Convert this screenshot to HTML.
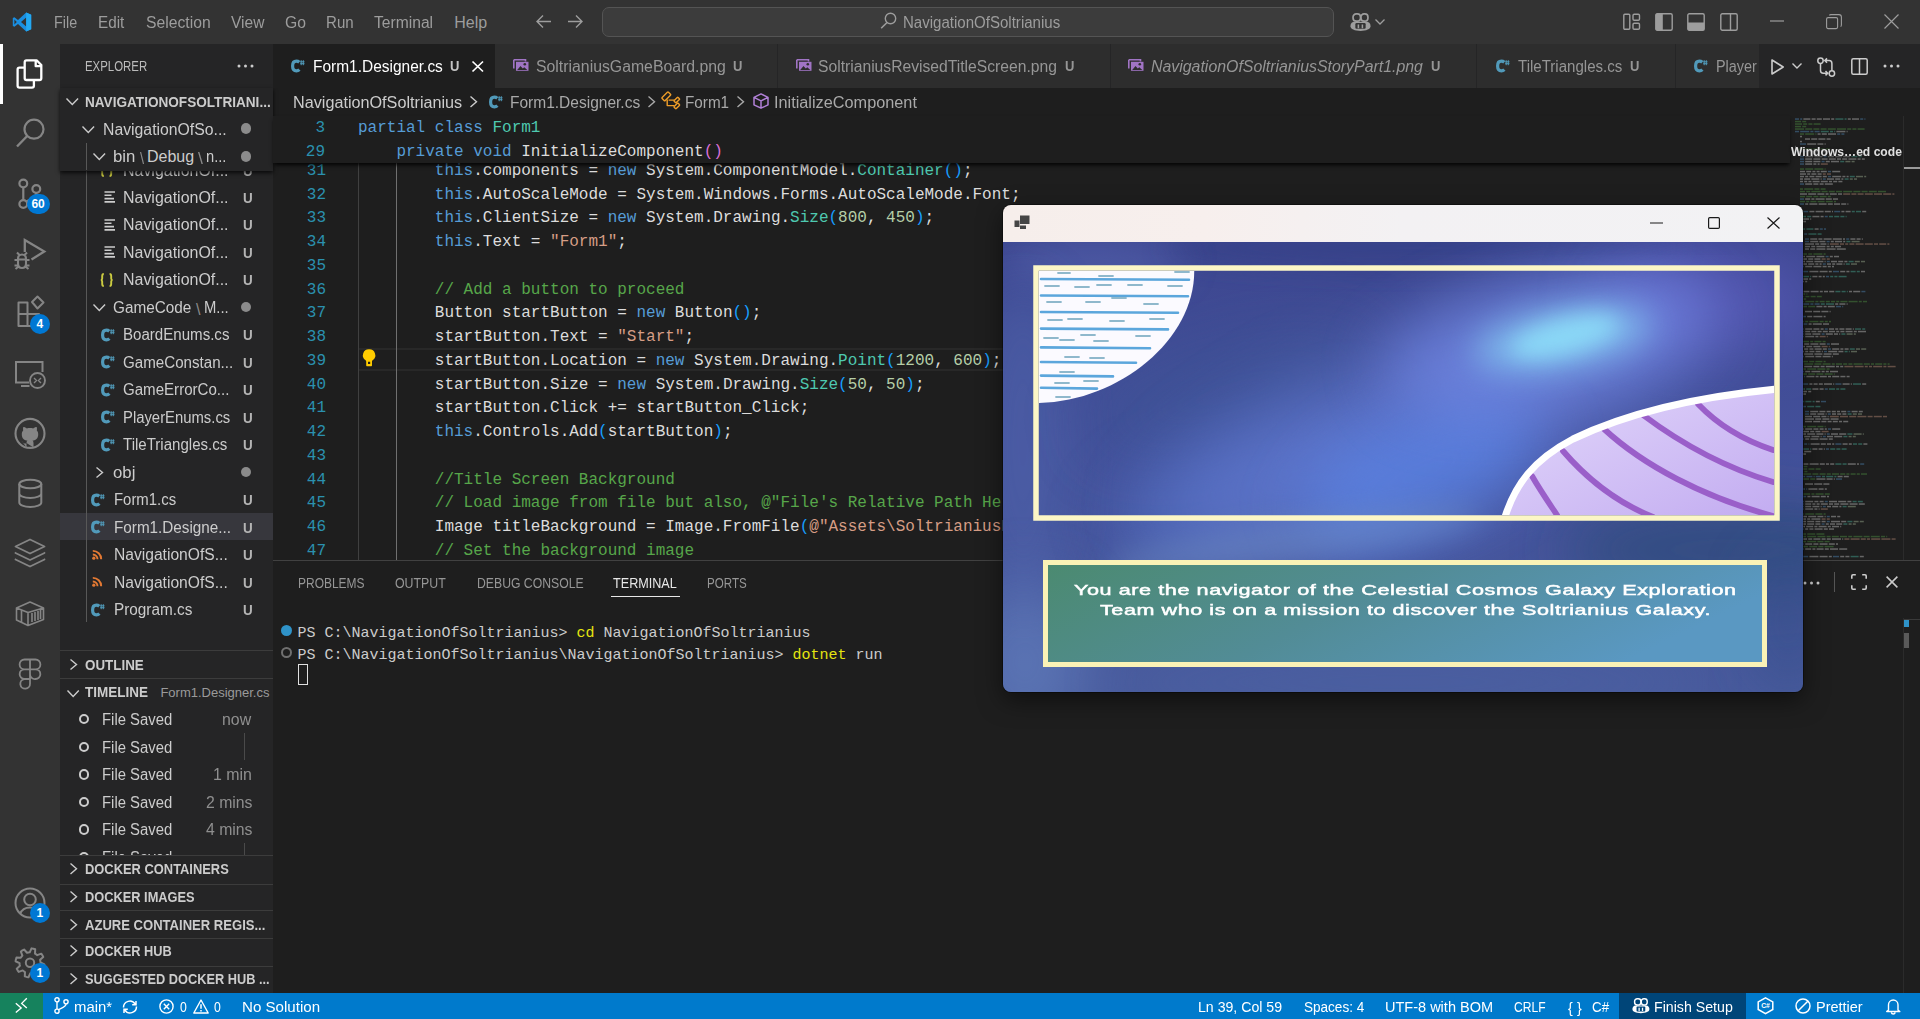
<!DOCTYPE html><html><head><meta charset="utf-8"><style>
html,body{margin:0;padding:0;width:1920px;height:1019px;overflow:hidden;background:#1e1e1e;}
body{position:relative;font-family:'Liberation Sans',sans-serif;}
.t{position:absolute;white-space:pre;line-height:1;}
.a{position:absolute;}
svg{position:absolute;overflow:visible;}
</style></head><body>
<div style="position:absolute;left:0px;top:0px;width:1920px;height:44px;background:#333333;"></div>
<svg style="left:12px;top:12px" width="20" height="20" viewBox="0 0 100 100">
<path d="M71 2 L96 14 V86 L71 98 L30 60 L12 74 L4 70 V30 L12 26 L30 40 Z M71 27 L45 50 L71 73 Z M12 38 V62 L24 50 Z" fill="#1a8ee0" fill-rule="evenodd"/>
<path d="M71 2 L96 14 V86 L71 98 Z" fill="#23a9f2"/>
</svg>
<div class="t" style="left:54.20px;top:15.00px;font-size:16px;color:#9d9d9d;font-family:'Liberation Sans', sans-serif;transform:scaleX(0.8962);transform-origin:0px 0;">File</div>
<div class="t" style="left:98.30px;top:15.00px;font-size:16px;color:#9d9d9d;font-family:'Liberation Sans', sans-serif;transform:scaleX(0.9536);transform-origin:0px 0;">Edit</div>
<div class="t" style="left:145.50px;top:15.00px;font-size:16px;color:#9d9d9d;font-family:'Liberation Sans', sans-serif;transform:scaleX(0.9818);transform-origin:0px 0;">Selection</div>
<div class="t" style="left:230.50px;top:15.00px;font-size:16px;color:#9d9d9d;font-family:'Liberation Sans', sans-serif;transform:scaleX(0.9714);transform-origin:0px 0;">View</div>
<div class="t" style="left:284.70px;top:15.00px;font-size:16px;color:#9d9d9d;font-family:'Liberation Sans', sans-serif;transform:scaleX(0.9810);transform-origin:0px 0;">Go</div>
<div class="t" style="left:326.00px;top:15.00px;font-size:16px;color:#9d9d9d;font-family:'Liberation Sans', sans-serif;transform:scaleX(0.9414);transform-origin:0px 0;">Run</div>
<div class="t" style="left:374.20px;top:15.00px;font-size:16px;color:#9d9d9d;font-family:'Liberation Sans', sans-serif;transform:scaleX(0.9770);transform-origin:0px 0;">Terminal</div>
<div class="t" style="left:454.20px;top:15.00px;font-size:16px;color:#9d9d9d;font-family:'Liberation Sans', sans-serif;transform:scaleX(1.0000);transform-origin:0px 0;">Help</div>
<svg style="left:535px;top:14px" width="17" height="15" viewBox="0 0 17 15"><path d="M16 7.5H2 M8 1.5L2 7.5L8 13.5" stroke="#9d9d9d" stroke-width="1.4" fill="none"/></svg>
<svg style="left:567px;top:14px" width="17" height="15" viewBox="0 0 17 15"><path d="M1 7.5H15 M9 1.5L15 7.5L9 13.5" stroke="#9d9d9d" stroke-width="1.4" fill="none"/></svg>
<div style="position:absolute;left:602px;top:7px;width:732px;height:30px;background:#3c3c3c;border:1px solid #545454;border-radius:7px;box-sizing:border-box;"></div>
<svg style="left:880px;top:12px" width="17" height="18" viewBox="0 0 17 18"><circle cx="10.5" cy="6.5" r="5.2" stroke="#9d9d9d" stroke-width="1.4" fill="none"/><path d="M7 10.5L1.2 16.3" stroke="#9d9d9d" stroke-width="1.6"/></svg>
<div class="t" style="left:903.30px;top:15.00px;font-size:16px;color:#9d9d9d;font-family:'Liberation Sans', sans-serif;transform:scaleX(0.9401);transform-origin:0px 0;">NavigationOfSoltrianius</div>
<svg style="left:1350px;top:12.5px" width="21.009999999999998" height="18.145" viewBox="0 0 22 19">
<rect x="3.2" y="1" width="7.8" height="7.6" rx="3.3" fill="none" stroke="#9d9d9d" stroke-width="1.8"/>
<rect x="11.4" y="1" width="7.4" height="7.6" rx="3.3" fill="none" stroke="#9d9d9d" stroke-width="1.8"/>
<path d="M5 9.2 H17 C20.5 9.2 21.5 11.5 21.5 14 C21.5 17 17 18.8 11 18.8 C5 18.8 0.5 17 0.5 14 C0.5 11.5 1.5 9.2 5 9.2 Z" fill="#9d9d9d"/>
<rect x="5.6" y="10.6" width="10.8" height="6" rx="1.2" fill="#333333"/>
<rect x="8" y="12" width="1.6" height="4" fill="#9d9d9d"/><rect x="12.2" y="12" width="1.6" height="4" fill="#9d9d9d"/>
</svg>
<svg style="left:1375.2px;top:19px" width="10" height="5.5" viewBox="0 0 10 5.5"><path d="M0.5 0.5L5 5L9.5 0.5" stroke="#9d9d9d" stroke-width="1.3" fill="none"/></svg>
<svg style="left:1623px;top:13px" width="18" height="18" viewBox="0 0 18 18">
<rect x="0.8" y="1.3" width="6" height="15" rx="1" fill="none" stroke="#9d9d9d" stroke-width="1.4"/>
<rect x="10" y="1.3" width="6.5" height="6" rx="1.2" fill="none" stroke="#9d9d9d" stroke-width="1.4"/>
<rect x="10" y="10.3" width="6.5" height="6" rx="1.2" fill="none" stroke="#9d9d9d" stroke-width="1.4"/></svg>
<svg style="left:1655px;top:13px" width="18" height="18" viewBox="0 0 18 18">
<rect x="0.8" y="0.8" width="16.4" height="16.4" rx="1.5" fill="none" stroke="#9d9d9d" stroke-width="1.4"/>
<rect x="0.8" y="0.8" width="7" height="16.4" fill="#9d9d9d"/></svg>
<svg style="left:1687px;top:13px" width="18" height="18" viewBox="0 0 18 18">
<rect x="0.8" y="0.8" width="16.4" height="16.4" rx="1.5" fill="none" stroke="#9d9d9d" stroke-width="1.4"/>
<rect x="0.8" y="9.5" width="16.4" height="7.7" fill="#9d9d9d"/></svg>
<svg style="left:1720px;top:13px" width="18" height="18" viewBox="0 0 18 18">
<rect x="0.8" y="0.8" width="16.4" height="16.4" rx="1.5" fill="none" stroke="#9d9d9d" stroke-width="1.4"/>
<path d="M10.5 1V17" stroke="#9d9d9d" stroke-width="1.4"/></svg>
<svg style="left:1770px;top:20px" width="15" height="2" viewBox="0 0 15 2"><path d="M0 1H14" stroke="#9d9d9d" stroke-width="1.2"/></svg>
<svg style="left:1826px;top:14px" width="16" height="16" viewBox="0 0 16 16"><rect x="0.6" y="3.6" width="11" height="11" rx="1.5" fill="none" stroke="#9d9d9d" stroke-width="1.1"/><path d="M3.5 1.5 C3.5 1 4 0.6 5 0.6 H13 C14.5 0.6 15.4 1.5 15.4 3 V11 C15.4 12 15 12.4 14.5 12.4" fill="none" stroke="#9d9d9d" stroke-width="1.1"/></svg>
<svg style="left:1884px;top:14px" width="15" height="15" viewBox="0 0 15 15"><path d="M0.5 0.5L14.5 14.5M14.5 0.5L0.5 14.5" stroke="#9d9d9d" stroke-width="1.2"/></svg>
<div style="position:absolute;left:0px;top:44px;width:60px;height:949px;background:#333333;"></div>
<div style="position:absolute;left:0px;top:44px;width:2.5px;height:60px;background:#ffffff;"></div>
<svg style="left:0;top:0" width="60" height="1019" viewBox="0 0 60 1019" fill="none" stroke="#858585" stroke-width="2"><path d="M26.5 60.3 H36.6 L41.3 65 V78.2 C41.3 79.3 40.5 80 39.4 80 H26.6 C25.5 80 24.7 79.3 24.7 78.2 V62.2 C24.7 61.1 25.4 60.3 26.5 60.3 Z M35.7 60.5 V66.2 H41" stroke="#ffffff" stroke-width="2.3" stroke-linejoin="round"/><path d="M24.7 67.6 H19.5 C18.4 67.6 17.6 68.4 17.6 69.5 V85.8 C17.6 86.9 18.4 87.7 19.5 87.7 H32 C33.1 87.7 33.9 86.9 33.9 85.8 V80" stroke="#ffffff" stroke-width="2.3" stroke-linejoin="round"/><circle cx="34" cy="129.2" r="9.5" stroke-width="2.2"/><path d="M27.2 136 L17 146.5" stroke-width="2.4"/><circle cx="23.3" cy="183.5" r="3.9" stroke-width="2.2"/><circle cx="23.3" cy="204" r="3.9" stroke-width="2.2"/><circle cx="36.3" cy="189" r="3.9" stroke-width="2.2"/><path d="M23.3 187.4 V200.1 M36.3 192.9 C36.3 197 31 198.5 26.5 201.5" stroke-width="2.2"/><path d="M24.8 252 V240 L44.3 251.5 L31.5 259.5" stroke-width="2.3" stroke-linejoin="miter"/><path d="M18 259 C18 256 19.8 254.5 22 254.5 C24.2 254.5 26 256 26 259 V263.5 C26 266.5 24.2 268 22 268 C19.8 268 18 266.5 18 263.5 Z M14.5 260 H18 M26 260 H29.5 M14.5 265.5 H18 M26 265.5 H29.5 M18 259.5 H26 M19.5 255 L17 252.5 M24.5 255 L27 252.5 M18 267 L15.5 269 M26 267 L28.5 269" stroke-width="2.1"/><path d="M18.5 302.5 H27.5 V326 H18.5 Z M18.5 314 H39 V326 H27.5" stroke-width="2" stroke-linejoin="round"/><path d="M32 302 L37.5 296.5 L43.5 302.5 L37.5 308.5 Z" stroke-width="2" stroke-linejoin="round"/><path d="M29 382.5 H16 V362 H42.5 V372" stroke-width="2"/><path d="M21 386 H29.5" stroke-width="2"/><circle cx="37.5" cy="380.5" r="7.5" stroke-width="1.9"/><path d="M34 378 L36.5 380.5 L34 383 M41 378 L38.5 380.5 L41 383" stroke-width="1.4"/><circle cx="30" cy="433.4" r="14.5" stroke-width="2.1"/><path d="M26.5 447.5 V443.5 C24.5 443.8 22.5 443 21.5 440.5 M33.5 447.5 V443 C33.5 442 33.2 441.2 32.6 440.6 C36.2 440.1 38.2 438.2 38.2 434.2 C38.2 432.6 37.7 431.4 36.8 430.5 C37.1 429.5 37.1 428.2 36.7 427 C35.5 427 34.3 427.6 33.2 428.4 C31.2 427.8 28.8 427.8 26.8 428.4 C25.7 427.6 24.5 427 23.3 427 C22.9 428.2 22.9 429.5 23.2 430.5 C22.3 431.4 21.8 432.6 21.8 434.2 C21.8 438.2 23.8 440.1 27.4 440.6 C26.8 441.2 26.5 442 26.5 443 Z" fill="#858585" stroke="none"/><ellipse cx="30.3" cy="484" rx="11" ry="4.3" stroke-width="2"/><path d="M19.3 484 V502.5 C19.3 505 24 507 30.3 507 C36.6 507 41.3 505 41.3 502.5 V484 M19.3 493.5 C19.3 496 24 498 30.3 498 C36.6 498 41.3 496 41.3 493.5" stroke-width="2"/><path d="M30 539.5 L44.5 546.5 L30 553.5 L15.5 546.5 Z M16 552.5 L15.5 553 L30 560 L44.5 553 L44 552.5 M16 559 L15.5 559.5 L30 566.5 L44.5 559.5 L44 559" stroke-width="1.8" stroke-linejoin="round"/><path d="M16.5 608 L30 602 L43.5 608 V619.5 L28 625.5 L16.5 620 Z M16.5 608 L28 612.5 L43.5 608 M28 612.5 V625.5 M21.5 610.5 V622.5 M32 613 V622 M35 612 V621 M38 611 V620 M40.5 610 V619" stroke-width="1.6" stroke-linejoin="round"/><path d="M24.5 659.5 H35.5 A4.9 4.9 0 0 1 35.5 669.3 H24.5 A4.9 4.9 0 0 1 24.5 659.5 Z M24.5 669.3 H30 V679 H24.5 A4.85 4.85 0 0 1 24.5 669.3 Z M30 669.3 H35.5 A4.85 4.85 0 0 1 35.5 679 A4.85 4.85 0 0 1 30 674.2 M24.5 679 H30 V683.5 A4.85 4.85 0 1 1 24.5 679 Z M30 659.5 V669.3" stroke-width="1.8"/><circle cx="30" cy="903" r="14.5" stroke-width="2"/><circle cx="30" cy="899.5" r="5.8" stroke-width="2"/><path d="M20 914 C22 909 25.5 907.5 30 907.5 C34.5 907.5 38 909 40 914" stroke-width="2"/><path d="M44.10 966.18 L43.54 968.00 L39.23 967.81 L38.49 968.97 L37.62 970.03 L39.13 974.07 L37.58 975.16 L35.90 976.05 L32.98 972.87 L31.64 973.17 L30.27 973.30 L28.48 977.22 L26.62 976.90 L24.80 976.34 L24.99 972.03 L23.83 971.29 L22.77 970.42 L18.73 971.93 L17.64 970.38 L16.75 968.70 L19.93 965.78 L19.63 964.44 L19.50 963.07 L15.58 961.28 L15.90 959.42 L16.46 957.60 L20.77 957.79 L21.51 956.63 L22.38 955.57 L20.87 951.53 L22.42 950.44 L24.10 949.55 L27.02 952.73 L28.36 952.43 L29.73 952.30 L31.52 948.38 L33.38 948.70 L35.20 949.26 L35.01 953.57 L36.17 954.31 L37.23 955.18 L41.27 953.67 L42.36 955.22 L43.25 956.90 L40.07 959.82 L40.37 961.16 L40.50 962.53 L44.42 964.32 Z" stroke-width="2" stroke-linejoin="round"/><circle cx="30" cy="962.8" r="4.2" stroke-width="2"/></svg>
<div class="a" style="left:26.9px;top:194px;width:23px;height:20px;border-radius:10px;background:#0078d4;"></div>
<div class="t" style="left:31.40px;top:198.00px;font-size:12px;color:#ffffff;font-family:'Liberation Sans', sans-serif;font-weight:bold;">60</div>
<div class="a" style="left:30.0px;top:314px;width:20px;height:20px;border-radius:10px;background:#0078d4;"></div>
<div class="t" style="left:36.50px;top:318.00px;font-size:12px;color:#ffffff;font-family:'Liberation Sans', sans-serif;font-weight:bold;">4</div>
<div class="a" style="left:30.0px;top:903px;width:20px;height:20px;border-radius:10px;background:#0078d4;"></div>
<div class="t" style="left:36.50px;top:907.00px;font-size:12px;color:#ffffff;font-family:'Liberation Sans', sans-serif;font-weight:bold;">1</div>
<div class="a" style="left:30.0px;top:963px;width:20px;height:20px;border-radius:10px;background:#0078d4;"></div>
<div class="t" style="left:36.50px;top:967.00px;font-size:12px;color:#ffffff;font-family:'Liberation Sans', sans-serif;font-weight:bold;">1</div>
<div style="position:absolute;left:60px;top:44px;width:213px;height:949px;background:#252526;"></div>
<div class="t" style="left:85.40px;top:59.00px;font-size:14px;color:#bbbbbb;font-family:'Liberation Sans', sans-serif;transform:scaleX(0.8158);transform-origin:0px 0;">EXPLORER</div>
<svg style="left:237px;top:64px" width="17" height="4" viewBox="0 0 17 4"><circle cx="2" cy="2" r="1.5" fill="#cccccc"/><circle cx="8.5" cy="2" r="1.5" fill="#cccccc"/><circle cx="15" cy="2" r="1.5" fill="#cccccc"/></svg>
<div style="position:absolute;left:60px;top:513px;width:213px;height:27px;background:#37373d;"></div>
<svg style="left:100.4px;top:163px" width="13.4" height="14" viewBox="0 0 13.4 14"><path d="M3.8 1 C2.4 1 2.2 1.8 2.2 3 V5.4 C2.2 6.4 1.8 6.9 0.9 7 C1.8 7.1 2.2 7.6 2.2 8.6 V11 C2.2 12.2 2.4 13 3.8 13 M9.6 1 C11 1 11.2 1.8 11.2 3 V5.4 C11.2 6.4 11.6 6.9 12.5 7 C11.6 7.1 11.2 7.6 11.2 8.6 V11 C11.2 12.2 11 13 9.6 13" stroke="#cbcb41" stroke-width="1.9" fill="none"/></svg>
<div class="t" style="left:123.30px;top:163.00px;font-size:16px;color:#cccccc;font-family:'Liberation Sans', sans-serif;transform:scaleX(0.9972);transform-origin:0px 0;">NavigationOf...</div>
<div class="t" style="left:242.60px;top:164.00px;font-size:14px;color:#b4b4b4;font-family:'Liberation Sans', sans-serif;transform:scaleX(0.9600);transform-origin:0px 0;font-weight:bold;">U</div>
<svg style="left:104px;top:191px" width="12" height="12" viewBox="0 0 12 12"><path d="M0.5 1H11 M0.5 4.3H7.5 M0.5 7.6H10 M0.5 10.9H11" stroke="#cccccc" stroke-width="1.6"/></svg>
<div class="t" style="left:123.30px;top:190.00px;font-size:16px;color:#cccccc;font-family:'Liberation Sans', sans-serif;transform:scaleX(0.9972);transform-origin:0px 0;">NavigationOf...</div>
<div class="t" style="left:242.60px;top:191.00px;font-size:14px;color:#b4b4b4;font-family:'Liberation Sans', sans-serif;transform:scaleX(0.9600);transform-origin:0px 0;font-weight:bold;">U</div>
<svg style="left:104px;top:218.5px" width="12" height="12" viewBox="0 0 12 12"><path d="M0.5 1H11 M0.5 4.3H7.5 M0.5 7.6H10 M0.5 10.9H11" stroke="#cccccc" stroke-width="1.6"/></svg>
<div class="t" style="left:123.30px;top:217.00px;font-size:16px;color:#cccccc;font-family:'Liberation Sans', sans-serif;transform:scaleX(0.9972);transform-origin:0px 0;">NavigationOf...</div>
<div class="t" style="left:242.60px;top:218.00px;font-size:14px;color:#b4b4b4;font-family:'Liberation Sans', sans-serif;transform:scaleX(0.9600);transform-origin:0px 0;font-weight:bold;">U</div>
<svg style="left:104px;top:246px" width="12" height="12" viewBox="0 0 12 12"><path d="M0.5 1H11 M0.5 4.3H7.5 M0.5 7.6H10 M0.5 10.9H11" stroke="#cccccc" stroke-width="1.6"/></svg>
<div class="t" style="left:123.30px;top:245.00px;font-size:16px;color:#cccccc;font-family:'Liberation Sans', sans-serif;transform:scaleX(0.9972);transform-origin:0px 0;">NavigationOf...</div>
<div class="t" style="left:242.60px;top:246.00px;font-size:14px;color:#b4b4b4;font-family:'Liberation Sans', sans-serif;transform:scaleX(0.9600);transform-origin:0px 0;font-weight:bold;">U</div>
<svg style="left:100.4px;top:272.5px" width="13.4" height="14" viewBox="0 0 13.4 14"><path d="M3.8 1 C2.4 1 2.2 1.8 2.2 3 V5.4 C2.2 6.4 1.8 6.9 0.9 7 C1.8 7.1 2.2 7.6 2.2 8.6 V11 C2.2 12.2 2.4 13 3.8 13 M9.6 1 C11 1 11.2 1.8 11.2 3 V5.4 C11.2 6.4 11.6 6.9 12.5 7 C11.6 7.1 11.2 7.6 11.2 8.6 V11 C11.2 12.2 11 13 9.6 13" stroke="#cbcb41" stroke-width="1.9" fill="none"/></svg>
<div class="t" style="left:123.30px;top:272.00px;font-size:16px;color:#cccccc;font-family:'Liberation Sans', sans-serif;transform:scaleX(0.9972);transform-origin:0px 0;">NavigationOf...</div>
<div class="t" style="left:242.60px;top:273.00px;font-size:14px;color:#b4b4b4;font-family:'Liberation Sans', sans-serif;transform:scaleX(0.9600);transform-origin:0px 0;font-weight:bold;">U</div>
<svg style="left:92.7px;top:303.5px" width="12.6" height="7" viewBox="0 0 12.6 7"><path d="M0.5 0.5L6.3 6.5L12.1 0.5" stroke="#cccccc" stroke-width="1.4" fill="none"/></svg>
<div class="t" style="left:113.00px;top:300.00px;font-size:16px;color:#cccccc;font-family:'Liberation Sans', sans-serif;transform:scaleX(0.9573);transform-origin:0px 0;">GameCode</div>
<div class="t" style="left:196.00px;top:302.00px;font-size:16px;color:#8a8a8a;font-family:'Liberation Sans', sans-serif;transform:scaleX(1.0000);transform-origin:0px 0;">\</div>
<div class="t" style="left:204.00px;top:300.00px;font-size:16px;color:#cccccc;font-family:'Liberation Sans', sans-serif;transform:scaleX(0.9259);transform-origin:0px 0;">M...</div>
<div class="a" style="left:241.0px;top:301.8px;width:10.4px;height:10.4px;border-radius:6px;background:#8b8b8b;"></div>
<svg style="left:99.7px;top:327.5px" width="15" height="14" viewBox="0 0 15 14"><path d="M9.3 3.3 C8.5 2.6 7.6 2.2 6.4 2.2 C4.2 2.2 2.6 4 2.6 7 C2.6 10 4.2 11.8 6.4 11.8 C7.6 11.8 8.6 11.4 9.4 10.6" fill="none" stroke="#519aba" stroke-width="3.2"/><path d="M11.2 1.2V6.2 M13.3 1.2V6.2 M10.2 2.8H14.5 M10.2 4.7H14.5" stroke="#519aba" stroke-width="1"/></svg>
<div class="t" style="left:123.30px;top:327.00px;font-size:16px;color:#cccccc;font-family:'Liberation Sans', sans-serif;transform:scaleX(0.9425);transform-origin:0px 0;">BoardEnums.cs</div>
<div class="t" style="left:242.60px;top:328.00px;font-size:14px;color:#b4b4b4;font-family:'Liberation Sans', sans-serif;transform:scaleX(0.9600);transform-origin:0px 0;font-weight:bold;">U</div>
<svg style="left:99.7px;top:355px" width="15" height="14" viewBox="0 0 15 14"><path d="M9.3 3.3 C8.5 2.6 7.6 2.2 6.4 2.2 C4.2 2.2 2.6 4 2.6 7 C2.6 10 4.2 11.8 6.4 11.8 C7.6 11.8 8.6 11.4 9.4 10.6" fill="none" stroke="#519aba" stroke-width="3.2"/><path d="M11.2 1.2V6.2 M13.3 1.2V6.2 M10.2 2.8H14.5 M10.2 4.7H14.5" stroke="#519aba" stroke-width="1"/></svg>
<div class="t" style="left:123.30px;top:355.00px;font-size:16px;color:#cccccc;font-family:'Liberation Sans', sans-serif;transform:scaleX(0.9462);transform-origin:0px 0;">GameConstan...</div>
<div class="t" style="left:242.60px;top:356.00px;font-size:14px;color:#b4b4b4;font-family:'Liberation Sans', sans-serif;transform:scaleX(0.9600);transform-origin:0px 0;font-weight:bold;">U</div>
<svg style="left:99.7px;top:382.5px" width="15" height="14" viewBox="0 0 15 14"><path d="M9.3 3.3 C8.5 2.6 7.6 2.2 6.4 2.2 C4.2 2.2 2.6 4 2.6 7 C2.6 10 4.2 11.8 6.4 11.8 C7.6 11.8 8.6 11.4 9.4 10.6" fill="none" stroke="#519aba" stroke-width="3.2"/><path d="M11.2 1.2V6.2 M13.3 1.2V6.2 M10.2 2.8H14.5 M10.2 4.7H14.5" stroke="#519aba" stroke-width="1"/></svg>
<div class="t" style="left:123.30px;top:382.00px;font-size:16px;color:#cccccc;font-family:'Liberation Sans', sans-serif;transform:scaleX(0.9425);transform-origin:0px 0;">GameErrorCo...</div>
<div class="t" style="left:242.60px;top:383.00px;font-size:14px;color:#b4b4b4;font-family:'Liberation Sans', sans-serif;transform:scaleX(0.9600);transform-origin:0px 0;font-weight:bold;">U</div>
<svg style="left:99.7px;top:410px" width="15" height="14" viewBox="0 0 15 14"><path d="M9.3 3.3 C8.5 2.6 7.6 2.2 6.4 2.2 C4.2 2.2 2.6 4 2.6 7 C2.6 10 4.2 11.8 6.4 11.8 C7.6 11.8 8.6 11.4 9.4 10.6" fill="none" stroke="#519aba" stroke-width="3.2"/><path d="M11.2 1.2V6.2 M13.3 1.2V6.2 M10.2 2.8H14.5 M10.2 4.7H14.5" stroke="#519aba" stroke-width="1"/></svg>
<div class="t" style="left:123.30px;top:410.00px;font-size:16px;color:#cccccc;font-family:'Liberation Sans', sans-serif;transform:scaleX(0.9276);transform-origin:0px 0;">PlayerEnums.cs</div>
<div class="t" style="left:242.60px;top:411.00px;font-size:14px;color:#b4b4b4;font-family:'Liberation Sans', sans-serif;transform:scaleX(0.9600);transform-origin:0px 0;font-weight:bold;">U</div>
<svg style="left:99.7px;top:437.5px" width="15" height="14" viewBox="0 0 15 14"><path d="M9.3 3.3 C8.5 2.6 7.6 2.2 6.4 2.2 C4.2 2.2 2.6 4 2.6 7 C2.6 10 4.2 11.8 6.4 11.8 C7.6 11.8 8.6 11.4 9.4 10.6" fill="none" stroke="#519aba" stroke-width="3.2"/><path d="M11.2 1.2V6.2 M13.3 1.2V6.2 M10.2 2.8H14.5 M10.2 4.7H14.5" stroke="#519aba" stroke-width="1"/></svg>
<div class="t" style="left:123.30px;top:437.00px;font-size:16px;color:#cccccc;font-family:'Liberation Sans', sans-serif;transform:scaleX(0.9405);transform-origin:0px 0;">TileTriangles.cs</div>
<div class="t" style="left:242.60px;top:438.00px;font-size:14px;color:#b4b4b4;font-family:'Liberation Sans', sans-serif;transform:scaleX(0.9600);transform-origin:0px 0;font-weight:bold;">U</div>
<svg style="left:96.3px;top:466.5px" width="7" height="11" viewBox="0 0 7 11"><path d="M0.5 0.5L6.5 5.5L0.5 10.5" stroke="#cccccc" stroke-width="1.4" fill="none"/></svg>
<div class="t" style="left:113.00px;top:465.00px;font-size:16px;color:#cccccc;font-family:'Liberation Sans', sans-serif;transform:scaleX(1.0476);transform-origin:0px 0;">obj</div>
<div class="a" style="left:241.0px;top:466.8px;width:10.4px;height:10.4px;border-radius:6px;background:#8b8b8b;"></div>
<svg style="left:90px;top:492.5px" width="15" height="14" viewBox="0 0 15 14"><path d="M9.3 3.3 C8.5 2.6 7.6 2.2 6.4 2.2 C4.2 2.2 2.6 4 2.6 7 C2.6 10 4.2 11.8 6.4 11.8 C7.6 11.8 8.6 11.4 9.4 10.6" fill="none" stroke="#519aba" stroke-width="3.2"/><path d="M11.2 1.2V6.2 M13.3 1.2V6.2 M10.2 2.8H14.5 M10.2 4.7H14.5" stroke="#519aba" stroke-width="1"/></svg>
<div class="t" style="left:113.50px;top:492.00px;font-size:16px;color:#cccccc;font-family:'Liberation Sans', sans-serif;transform:scaleX(0.9313);transform-origin:0px 0;">Form1.cs</div>
<div class="t" style="left:242.60px;top:493.00px;font-size:14px;color:#b4b4b4;font-family:'Liberation Sans', sans-serif;transform:scaleX(0.9600);transform-origin:0px 0;font-weight:bold;">U</div>
<svg style="left:90px;top:520px" width="15" height="14" viewBox="0 0 15 14"><path d="M9.3 3.3 C8.5 2.6 7.6 2.2 6.4 2.2 C4.2 2.2 2.6 4 2.6 7 C2.6 10 4.2 11.8 6.4 11.8 C7.6 11.8 8.6 11.4 9.4 10.6" fill="none" stroke="#519aba" stroke-width="3.2"/><path d="M11.2 1.2V6.2 M13.3 1.2V6.2 M10.2 2.8H14.5 M10.2 4.7H14.5" stroke="#519aba" stroke-width="1"/></svg>
<div class="t" style="left:113.50px;top:520.00px;font-size:16px;color:#cccccc;font-family:'Liberation Sans', sans-serif;transform:scaleX(0.9537);transform-origin:0px 0;">Form1.Designe...</div>
<div class="t" style="left:242.60px;top:521.00px;font-size:14px;color:#b4b4b4;font-family:'Liberation Sans', sans-serif;transform:scaleX(0.9600);transform-origin:0px 0;font-weight:bold;">U</div>
<svg style="left:92px;top:549.5px" width="11" height="10" viewBox="0 0 11 10"><circle cx="1.8" cy="8.2" r="1.6" fill="#e37933"/><path d="M0.8 4.5A4.6 4.6 0 0 1 5.5 9.2 M0.8 0.9A8.3 8.3 0 0 1 9.2 9.2" stroke="#e37933" stroke-width="1.9" fill="none"/></svg>
<div class="t" style="left:113.50px;top:547.00px;font-size:16px;color:#cccccc;font-family:'Liberation Sans', sans-serif;transform:scaleX(0.9761);transform-origin:0px 0;">NavigationOfS...</div>
<div class="t" style="left:242.60px;top:548.00px;font-size:14px;color:#b4b4b4;font-family:'Liberation Sans', sans-serif;transform:scaleX(0.9600);transform-origin:0px 0;font-weight:bold;">U</div>
<svg style="left:92px;top:577px" width="11" height="10" viewBox="0 0 11 10"><circle cx="1.8" cy="8.2" r="1.6" fill="#e37933"/><path d="M0.8 4.5A4.6 4.6 0 0 1 5.5 9.2 M0.8 0.9A8.3 8.3 0 0 1 9.2 9.2" stroke="#e37933" stroke-width="1.9" fill="none"/></svg>
<div class="t" style="left:113.50px;top:575.00px;font-size:16px;color:#cccccc;font-family:'Liberation Sans', sans-serif;transform:scaleX(0.9761);transform-origin:0px 0;">NavigationOfS...</div>
<div class="t" style="left:242.60px;top:576.00px;font-size:14px;color:#b4b4b4;font-family:'Liberation Sans', sans-serif;transform:scaleX(0.9600);transform-origin:0px 0;font-weight:bold;">U</div>
<svg style="left:90px;top:602.5px" width="15" height="14" viewBox="0 0 15 14"><path d="M9.3 3.3 C8.5 2.6 7.6 2.2 6.4 2.2 C4.2 2.2 2.6 4 2.6 7 C2.6 10 4.2 11.8 6.4 11.8 C7.6 11.8 8.6 11.4 9.4 10.6" fill="none" stroke="#519aba" stroke-width="3.2"/><path d="M11.2 1.2V6.2 M13.3 1.2V6.2 M10.2 2.8H14.5 M10.2 4.7H14.5" stroke="#519aba" stroke-width="1"/></svg>
<div class="t" style="left:113.50px;top:602.00px;font-size:16px;color:#cccccc;font-family:'Liberation Sans', sans-serif;transform:scaleX(0.9573);transform-origin:0px 0;">Program.cs</div>
<div class="t" style="left:242.60px;top:603.00px;font-size:14px;color:#b4b4b4;font-family:'Liberation Sans', sans-serif;transform:scaleX(0.9600);transform-origin:0px 0;font-weight:bold;">U</div>
<div style="position:absolute;left:85.5px;top:143px;width:1px;height:479px;background:#585858;"></div>
<div style="position:absolute;left:60px;top:88px;width:213px;height:82.5px;background:#252526;box-shadow:0 2px 4px 0 rgba(0,0,0,0.75);"></div>
<svg style="left:66.3px;top:98px" width="12.6" height="7" viewBox="0 0 12.6 7"><path d="M0.5 0.5L6.3 6.5L12.1 0.5" stroke="#cccccc" stroke-width="1.4" fill="none"/></svg>
<div class="t" style="left:85.40px;top:95.00px;font-size:14px;color:#cccccc;font-family:'Liberation Sans', sans-serif;transform:scaleX(0.9707);transform-origin:0px 0;font-weight:bold;">NAVIGATIONOFSOLTRIANI...</div>
<svg style="left:82.3px;top:126px" width="12.6" height="7" viewBox="0 0 12.6 7"><path d="M0.5 0.5L6.3 6.5L12.1 0.5" stroke="#cccccc" stroke-width="1.4" fill="none"/></svg>
<div class="t" style="left:103.00px;top:122.00px;font-size:16px;color:#cccccc;font-family:'Liberation Sans', sans-serif;transform:scaleX(0.9865);transform-origin:0px 0;">NavigationOfSo...</div>
<div class="a" style="left:241.0px;top:123.2px;width:10.4px;height:10.4px;border-radius:6px;background:#8b8b8b;"></div>
<div style="position:absolute;left:85.5px;top:143px;width:1px;height:27px;background:#585858;"></div>
<svg style="left:92.7px;top:153px" width="12.6" height="7" viewBox="0 0 12.6 7"><path d="M0.5 0.5L6.3 6.5L12.1 0.5" stroke="#cccccc" stroke-width="1.4" fill="none"/></svg>
<div class="t" style="left:113.00px;top:149.00px;font-size:16px;color:#cccccc;font-family:'Liberation Sans', sans-serif;transform:scaleX(1.0476);transform-origin:0px 0;">bin</div>
<div class="t" style="left:140.20px;top:151.00px;font-size:16px;color:#8a8a8a;font-family:'Liberation Sans', sans-serif;transform:scaleX(0.9200);transform-origin:0px 0;">\</div>
<div class="t" style="left:147.00px;top:149.00px;font-size:16px;color:#cccccc;font-family:'Liberation Sans', sans-serif;transform:scaleX(1.0000);transform-origin:0px 0;">Debug</div>
<div class="t" style="left:197.50px;top:151.00px;font-size:16px;color:#8a8a8a;font-family:'Liberation Sans', sans-serif;transform:scaleX(1.1000);transform-origin:0px 0;">\</div>
<div class="t" style="left:206.00px;top:149.00px;font-size:16px;color:#cccccc;font-family:'Liberation Sans', sans-serif;transform:scaleX(0.9182);transform-origin:0px 0;">n...</div>
<div class="a" style="left:241.0px;top:151.3px;width:10.4px;height:10.4px;border-radius:6px;background:#8b8b8b;"></div>
<div style="position:absolute;left:60px;top:650px;width:213px;height:1px;background:#3c3c3c;"></div>
<svg style="left:69.7px;top:659.4px" width="7" height="11" viewBox="0 0 7 11"><path d="M0.5 0.5L6.5 5.5L0.5 10.5" stroke="#cccccc" stroke-width="1.4" fill="none"/></svg>
<div class="t" style="left:84.80px;top:658.00px;font-size:14px;color:#cccccc;font-family:'Liberation Sans', sans-serif;transform:scaleX(0.9557);transform-origin:0px 0;font-weight:bold;">OUTLINE</div>
<div style="position:absolute;left:60px;top:678px;width:213px;height:1px;background:#3c3c3c;"></div>
<svg style="left:66.5px;top:689.5px" width="12.3" height="7" viewBox="0 0 12.3 7"><path d="M0.5 0.5L6.15 6.5L11.8 0.5" stroke="#cccccc" stroke-width="1.4" fill="none"/></svg>
<div class="t" style="left:84.80px;top:685.00px;font-size:14px;color:#cccccc;font-family:'Liberation Sans', sans-serif;transform:scaleX(0.9631);transform-origin:0px 0;font-weight:bold;">TIMELINE</div>
<div class="t" style="left:160.40px;top:686.00px;font-size:13px;color:#9a9a9a;font-family:'Liberation Sans', sans-serif;transform:scaleX(1.0000);transform-origin:0px 0;">Form1.Designer.cs</div>
<div class="a" style="left:78.5px;top:713.9000000000001px;width:10.6px;height:10.6px;border-radius:6px;border:2.2px solid #cccccc;box-sizing:border-box;"></div>
<div class="t" style="left:101.70px;top:712.00px;font-size:16px;color:#cccccc;font-family:'Liberation Sans', sans-serif;transform:scaleX(0.9289);transform-origin:0px 0;">File Saved</div>
<div class="t" style="left:222.30px;top:712.00px;font-size:16px;color:#8f8f8f;font-family:'Liberation Sans', sans-serif;transform:scaleX(0.9933);transform-origin:0px 0;">now</div>
<div class="a" style="left:78.5px;top:741.7px;width:10.6px;height:10.6px;border-radius:6px;border:2.2px solid #cccccc;box-sizing:border-box;"></div>
<div class="t" style="left:101.70px;top:740.00px;font-size:16px;color:#cccccc;font-family:'Liberation Sans', sans-serif;transform:scaleX(0.9289);transform-origin:0px 0;">File Saved</div>
<div class="a" style="left:78.5px;top:769.2px;width:10.6px;height:10.6px;border-radius:6px;border:2.2px solid #cccccc;box-sizing:border-box;"></div>
<div class="t" style="left:101.70px;top:767.00px;font-size:16px;color:#cccccc;font-family:'Liberation Sans', sans-serif;transform:scaleX(0.9289);transform-origin:0px 0;">File Saved</div>
<div class="t" style="left:213.30px;top:767.00px;font-size:16px;color:#8f8f8f;font-family:'Liberation Sans', sans-serif;transform:scaleX(0.9949);transform-origin:0px 0;">1 min</div>
<div class="a" style="left:78.5px;top:796.7px;width:10.6px;height:10.6px;border-radius:6px;border:2.2px solid #cccccc;box-sizing:border-box;"></div>
<div class="t" style="left:101.70px;top:795.00px;font-size:16px;color:#cccccc;font-family:'Liberation Sans', sans-serif;transform:scaleX(0.9289);transform-origin:0px 0;">File Saved</div>
<div class="t" style="left:205.70px;top:795.00px;font-size:16px;color:#8f8f8f;font-family:'Liberation Sans', sans-serif;transform:scaleX(0.9872);transform-origin:0px 0;">2 mins</div>
<div class="a" style="left:78.5px;top:824.2px;width:10.6px;height:10.6px;border-radius:6px;border:2.2px solid #cccccc;box-sizing:border-box;"></div>
<div class="t" style="left:101.70px;top:822.00px;font-size:16px;color:#cccccc;font-family:'Liberation Sans', sans-serif;transform:scaleX(0.9289);transform-origin:0px 0;">File Saved</div>
<div class="t" style="left:205.70px;top:822.00px;font-size:16px;color:#8f8f8f;font-family:'Liberation Sans', sans-serif;transform:scaleX(0.9872);transform-origin:0px 0;">4 mins</div>
<div style="position:absolute;left:244.3px;top:733px;width:1px;height:27px;background:#4a4a4a;"></div>
<div style="position:absolute;left:244.3px;top:843px;width:1px;height:12px;background:#4a4a4a;"></div>
<div class="a" style="left:60px;top:849px;width:213px;height:6px;overflow:hidden;"><div class="a" style="left:18.5px;top:3px;width:10.6px;height:10.6px;border-radius:6px;border:2.2px solid #cccccc;box-sizing:border-box;"></div><div class="t" style="left:41.70px;top:1.00px;font-size:16px;color:#cccccc;font-family:'Liberation Sans', sans-serif;transform:scaleX(0.9289);transform-origin:0px 0;">File Saved</div></div>
<div style="position:absolute;left:60px;top:855.4px;width:213px;height:1px;background:#3c3c3c;"></div>
<svg style="left:69.5px;top:863.3px" width="7" height="11.5" viewBox="0 0 7 11.5"><path d="M0.5 0.5L6.5 5.75L0.5 11.0" stroke="#cccccc" stroke-width="1.4" fill="none"/></svg>
<div class="t" style="left:85.30px;top:862.00px;font-size:14px;color:#cccccc;font-family:'Liberation Sans', sans-serif;transform:scaleX(0.9212);transform-origin:0px 0;font-weight:bold;">DOCKER CONTAINERS</div>
<div style="position:absolute;left:60px;top:883.6px;width:213px;height:1px;background:#3c3c3c;"></div>
<svg style="left:69.5px;top:890.5px" width="7" height="11.5" viewBox="0 0 7 11.5"><path d="M0.5 0.5L6.5 5.75L0.5 11.0" stroke="#cccccc" stroke-width="1.4" fill="none"/></svg>
<div class="t" style="left:85.30px;top:890.00px;font-size:14px;color:#cccccc;font-family:'Liberation Sans', sans-serif;transform:scaleX(0.9150);transform-origin:0px 0;font-weight:bold;">DOCKER IMAGES</div>
<div style="position:absolute;left:60px;top:910px;width:213px;height:1px;background:#3c3c3c;"></div>
<svg style="left:69.5px;top:918.9px" width="7" height="11.5" viewBox="0 0 7 11.5"><path d="M0.5 0.5L6.5 5.75L0.5 11.0" stroke="#cccccc" stroke-width="1.4" fill="none"/></svg>
<div class="t" style="left:85.30px;top:918.00px;font-size:14px;color:#cccccc;font-family:'Liberation Sans', sans-serif;transform:scaleX(0.9326);transform-origin:0px 0;font-weight:bold;">AZURE CONTAINER REGIS...</div>
<div style="position:absolute;left:60px;top:938.3px;width:213px;height:1px;background:#3c3c3c;"></div>
<svg style="left:69.5px;top:945.3px" width="7" height="11.5" viewBox="0 0 7 11.5"><path d="M0.5 0.5L6.5 5.75L0.5 11.0" stroke="#cccccc" stroke-width="1.4" fill="none"/></svg>
<div class="t" style="left:85.30px;top:944.00px;font-size:14px;color:#cccccc;font-family:'Liberation Sans', sans-serif;transform:scaleX(0.9137);transform-origin:0px 0;font-weight:bold;">DOCKER HUB</div>
<div style="position:absolute;left:60px;top:965.5px;width:213px;height:1px;background:#3c3c3c;"></div>
<svg style="left:69.5px;top:973.4px" width="7" height="11.5" viewBox="0 0 7 11.5"><path d="M0.5 0.5L6.5 5.75L0.5 11.0" stroke="#cccccc" stroke-width="1.4" fill="none"/></svg>
<div class="t" style="left:85.30px;top:972.00px;font-size:14px;color:#cccccc;font-family:'Liberation Sans', sans-serif;transform:scaleX(0.9129);transform-origin:0px 0;font-weight:bold;">SUGGESTED DOCKER HUB ...</div>
<div style="position:absolute;left:273px;top:44px;width:1647px;height:44px;background:#252526;"></div>
<div style="position:absolute;left:273px;top:44px;width:222px;height:44px;background:#1e1e1e;"></div>
<svg style="left:289.5px;top:58.5px" width="15" height="14" viewBox="0 0 15 14"><path d="M9.3 3.3 C8.5 2.6 7.6 2.2 6.4 2.2 C4.2 2.2 2.6 4 2.6 7 C2.6 10 4.2 11.8 6.4 11.8 C7.6 11.8 8.6 11.4 9.4 10.6" fill="none" stroke="#519aba" stroke-width="3.2"/><path d="M11.2 1.2V6.2 M13.3 1.2V6.2 M10.2 2.8H14.5 M10.2 4.7H14.5" stroke="#519aba" stroke-width="1"/></svg>
<div class="t" style="left:312.60px;top:59.00px;font-size:16px;color:#ffffff;font-family:'Liberation Sans', sans-serif;transform:scaleX(0.9672);transform-origin:0px 0;">Form1.Designer.cs</div>
<div class="t" style="left:449.80px;top:59.00px;font-size:14px;color:#c5c5c5;font-family:'Liberation Sans', sans-serif;transform:scaleX(0.9300);transform-origin:0px 0;font-weight:bold;">U</div>
<svg style="left:471.5px;top:61px" width="11.5" height="11" viewBox="0 0 11.5 11"><path d="M0.5 0.5L11 10.5M11 0.5L0.5 10.5" stroke="#ffffff" stroke-width="1.7"/></svg>
<div style="position:absolute;left:495px;top:44px;width:282px;height:43.5px;background:#2d2d2d;"></div>
<svg style="left:512.5px;top:59px" width="16" height="12" viewBox="0 0 16 12"><path d="M0.8 0.8H12.5V2.5 M0.8 0.8V9.5" stroke="#a074c4" stroke-width="1.6" fill="none"/><rect x="3" y="2.8" width="12.5" height="9" fill="#a074c4"/><circle cx="11.8" cy="5.2" r="1.3" fill="#2d2d2d"/><path d="M4.2 11L7.5 7L9.8 9.6L11.3 8.2L14.3 11Z" fill="#2d2d2d"/></svg>
<div class="t" style="left:535.60px;top:59.00px;font-size:16px;color:#969696;font-family:'Liberation Sans', sans-serif;transform:scaleX(0.9885);transform-origin:0px 0;">SoltrianiusGameBoard.png</div>
<div class="t" style="left:733.00px;top:59.00px;font-size:14px;color:#969696;font-family:'Liberation Sans', sans-serif;transform:scaleX(0.9300);transform-origin:0px 0;font-weight:bold;">U</div>
<div style="position:absolute;left:778px;top:44px;width:332px;height:43.5px;background:#2d2d2d;"></div>
<svg style="left:795.7px;top:59px" width="16" height="12" viewBox="0 0 16 12"><path d="M0.8 0.8H12.5V2.5 M0.8 0.8V9.5" stroke="#a074c4" stroke-width="1.6" fill="none"/><rect x="3" y="2.8" width="12.5" height="9" fill="#a074c4"/><circle cx="11.8" cy="5.2" r="1.3" fill="#2d2d2d"/><path d="M4.2 11L7.5 7L9.8 9.6L11.3 8.2L14.3 11Z" fill="#2d2d2d"/></svg>
<div class="t" style="left:818.30px;top:59.00px;font-size:16px;color:#969696;font-family:'Liberation Sans', sans-serif;transform:scaleX(0.9795);transform-origin:0px 0;">SoltrianiusRevisedTitleScreen.png</div>
<div class="t" style="left:1065.00px;top:59.00px;font-size:14px;color:#969696;font-family:'Liberation Sans', sans-serif;transform:scaleX(0.9300);transform-origin:0px 0;font-weight:bold;">U</div>
<div style="position:absolute;left:1111px;top:44px;width:365px;height:43.5px;background:#2d2d2d;"></div>
<svg style="left:1127.7px;top:59px" width="16" height="12" viewBox="0 0 16 12"><path d="M0.8 0.8H12.5V2.5 M0.8 0.8V9.5" stroke="#a074c4" stroke-width="1.6" fill="none"/><rect x="3" y="2.8" width="12.5" height="9" fill="#a074c4"/><circle cx="11.8" cy="5.2" r="1.3" fill="#2d2d2d"/><path d="M4.2 11L7.5 7L9.8 9.6L11.3 8.2L14.3 11Z" fill="#2d2d2d"/></svg>
<div class="t" style="left:1151.00px;top:59.00px;font-size:16px;color:#969696;font-family:'Liberation Sans', sans-serif;transform:scaleX(0.9927);transform-origin:0px 0;font-style:italic;">NavigationOfSoltrianiusStoryPart1.png</div>
<div class="t" style="left:1431.00px;top:59.00px;font-size:14px;color:#969696;font-family:'Liberation Sans', sans-serif;transform:scaleX(0.9300);transform-origin:0px 0;font-weight:bold;">U</div>
<div style="position:absolute;left:1477px;top:44px;width:198px;height:43.5px;background:#2d2d2d;"></div>
<svg style="left:1495px;top:58.5px" width="15" height="14" viewBox="0 0 15 14"><path d="M9.3 3.3 C8.5 2.6 7.6 2.2 6.4 2.2 C4.2 2.2 2.6 4 2.6 7 C2.6 10 4.2 11.8 6.4 11.8 C7.6 11.8 8.6 11.4 9.4 10.6" fill="none" stroke="#519aba" stroke-width="3.2"/><path d="M11.2 1.2V6.2 M13.3 1.2V6.2 M10.2 2.8H14.5 M10.2 4.7H14.5" stroke="#519aba" stroke-width="1"/></svg>
<div class="t" style="left:1518.00px;top:59.00px;font-size:16px;color:#969696;font-family:'Liberation Sans', sans-serif;transform:scaleX(0.9405);transform-origin:0px 0;">TileTriangles.cs</div>
<div class="t" style="left:1630.20px;top:59.00px;font-size:14px;color:#969696;font-family:'Liberation Sans', sans-serif;transform:scaleX(0.9300);transform-origin:0px 0;font-weight:bold;">U</div>
<div style="position:absolute;left:1676px;top:44px;width:83px;height:43.5px;background:#2d2d2d;"></div>
<svg style="left:1693.3px;top:58.5px" width="15" height="14" viewBox="0 0 15 14"><path d="M9.3 3.3 C8.5 2.6 7.6 2.2 6.4 2.2 C4.2 2.2 2.6 4 2.6 7 C2.6 10 4.2 11.8 6.4 11.8 C7.6 11.8 8.6 11.4 9.4 10.6" fill="none" stroke="#519aba" stroke-width="3.2"/><path d="M11.2 1.2V6.2 M13.3 1.2V6.2 M10.2 2.8H14.5 M10.2 4.7H14.5" stroke="#519aba" stroke-width="1"/></svg>
<div class="t" style="left:1716.30px;top:59.00px;font-size:16px;color:#969696;font-family:'Liberation Sans', sans-serif;transform:scaleX(0.9000);transform-origin:0px 0;">Player</div>
<div style="position:absolute;left:1759px;top:44px;width:161px;height:44px;background:#252526;"></div>
<svg style="left:1771px;top:58.6px" width="13" height="16" viewBox="0 0 13 16"><path d="M1 1V15L12.2 8Z" stroke="#cccccc" stroke-width="1.6" fill="none" stroke-linejoin="round"/></svg>
<svg style="left:1792.4px;top:63px" width="10" height="6" viewBox="0 0 10 6"><path d="M0.5 0.5L5 5L9.5 0.5" stroke="#cccccc" stroke-width="1.4" fill="none"/></svg>
<svg style="left:1817px;top:56.5px" width="19" height="20" viewBox="0 0 19 20"><circle cx="3.5" cy="3.7" r="2.7" fill="none" stroke="#cccccc" stroke-width="1.5"/><circle cx="14.9" cy="16.5" r="2.7" fill="none" stroke="#cccccc" stroke-width="1.5"/><path d="M3.5 6.4 V13.5 C3.5 15.3 4.5 16.2 6.2 16.2 H10.5 M8.5 14 L10.7 16.2 L8.5 18.4 M14.9 13.8 V6.5 C14.9 4.7 13.9 3.6 12.2 3.6 H7.9 M10 1.4 L7.8 3.6 L10 5.8" fill="none" stroke="#cccccc" stroke-width="1.5"/></svg>
<svg style="left:1851px;top:57.5px" width="17" height="17" viewBox="0 0 17 17"><rect x="0.8" y="0.8" width="15.4" height="15.4" rx="1.5" fill="none" stroke="#cccccc" stroke-width="1.5"/><path d="M8.5 1V16" stroke="#cccccc" stroke-width="1.5"/></svg>
<svg style="left:1883px;top:64px" width="17" height="4" viewBox="0 0 17 4"><circle cx="2" cy="2" r="1.5" fill="#cccccc"/><circle cx="8.5" cy="2" r="1.5" fill="#cccccc"/><circle cx="15" cy="2" r="1.5" fill="#cccccc"/></svg>
<div class="t" style="left:292.90px;top:95.00px;font-size:16px;color:#cccccc;font-family:'Liberation Sans', sans-serif;transform:scaleX(1.0120);transform-origin:0px 0;">NavigationOfSoltrianius</div>
<svg style="left:470px;top:96px" width="7" height="11.5" viewBox="0 0 7 11.5"><path d="M0.5 0.5L6.5 5.75L0.5 11.0" stroke="#cccccc" stroke-width="1.4" fill="none"/></svg>
<svg style="left:488px;top:94.5px" width="15" height="14" viewBox="0 0 15 14"><path d="M9.3 3.3 C8.5 2.6 7.6 2.2 6.4 2.2 C4.2 2.2 2.6 4 2.6 7 C2.6 10 4.2 11.8 6.4 11.8 C7.6 11.8 8.6 11.4 9.4 10.6" fill="none" stroke="#519aba" stroke-width="3.2"/><path d="M11.2 1.2V6.2 M13.3 1.2V6.2 M10.2 2.8H14.5 M10.2 4.7H14.5" stroke="#519aba" stroke-width="1"/></svg>
<div class="t" style="left:510.30px;top:95.00px;font-size:16px;color:#a9a9a9;font-family:'Liberation Sans', sans-serif;transform:scaleX(0.9694);transform-origin:0px 0;">Form1.Designer.cs</div>
<svg style="left:648px;top:96px" width="7" height="11.5" viewBox="0 0 7 11.5"><path d="M0.5 0.5L6.5 5.75L0.5 11.0" stroke="#a9a9a9" stroke-width="1.4" fill="none"/></svg>
<svg style="left:650px;top:88px" width="40" height="28" viewBox="650 88 40 28" fill="none" stroke="#ee9d28" stroke-width="1.4" stroke-linejoin="round"><rect x="661.8" y="94.2" width="9" height="4.4" rx="0.8" transform="rotate(-45 666.3 96.4)"/><rect x="674" y="98.5" width="5.6" height="3" rx="0.6" transform="rotate(-45 676.8 100)"/><rect x="674" y="104.4" width="5.6" height="3" rx="0.6" transform="rotate(-45 676.8 105.9)"/><path d="M667.2 99.4 V105.6 H674.3 M668.6 100.1 H674.3"/></svg>
<div class="t" style="left:685.20px;top:95.00px;font-size:16px;color:#a9a9a9;font-family:'Liberation Sans', sans-serif;transform:scaleX(0.9543);transform-origin:0px 0;">Form1</div>
<svg style="left:737.2px;top:96px" width="7" height="11.5" viewBox="0 0 7 11.5"><path d="M0.5 0.5L6.5 5.75L0.5 11.0" stroke="#a9a9a9" stroke-width="1.4" fill="none"/></svg>
<svg style="left:752.5px;top:93.4px" width="16" height="16" viewBox="0 0 16 16"><path d="M8 0.9L15 4.4V11.8L8 15.2L1 11.8V4.4Z M1 4.4L8 7.9L15 4.4 M8 7.9V15.2" fill="none" stroke="#b180d7" stroke-width="1.5" stroke-linejoin="round"/></svg>
<div class="t" style="left:774.30px;top:95.00px;font-size:16px;color:#a9a9a9;font-family:'Liberation Sans', sans-serif;transform:scaleX(1.0170);transform-origin:0px 0;">InitializeComponent</div>
<div style="position:absolute;left:359px;top:348px;width:1424px;height:23px;border-top:2px solid #282828;border-bottom:2px solid #282828;box-sizing:border-box;"></div>
<div class="a" style="left:273px;top:163px;width:1517px;height:397px;overflow:hidden;">
<div class="t" style="left:85px;top:0.00px;font-family:'Liberation Mono', monospace;font-size:16px;"><span style="color:#dcdcdc">        </span><span style="color:#569cd6">this</span><span style="color:#dcdcdc">.components = </span><span style="color:#569cd6">new</span><span style="color:#dcdcdc"> System.ComponentModel.</span><span style="color:#4ec9b0">Container</span><span style="color:#179fff">()</span><span style="color:#dcdcdc">;</span></div>
<div class="t" style="left:0px;width:53px;text-align:right;top:0.00px;font-family:'Liberation Mono', monospace;font-size:16px;color:#2b91af;">31</div>
<div class="t" style="left:85px;top:24.00px;font-family:'Liberation Mono', monospace;font-size:16px;"><span style="color:#dcdcdc">        </span><span style="color:#569cd6">this</span><span style="color:#dcdcdc">.AutoScaleMode = System.Windows.Forms.AutoScaleMode.Font;</span></div>
<div class="t" style="left:0px;width:53px;text-align:right;top:24.00px;font-family:'Liberation Mono', monospace;font-size:16px;color:#2b91af;">32</div>
<div class="t" style="left:85px;top:47.00px;font-family:'Liberation Mono', monospace;font-size:16px;"><span style="color:#dcdcdc">        </span><span style="color:#569cd6">this</span><span style="color:#dcdcdc">.ClientSize = </span><span style="color:#569cd6">new</span><span style="color:#dcdcdc"> System.Drawing.</span><span style="color:#4ec9b0">Size</span><span style="color:#179fff">(</span><span style="color:#b5cea8">800</span><span style="color:#dcdcdc">, </span><span style="color:#b5cea8">450</span><span style="color:#179fff">)</span><span style="color:#dcdcdc">;</span></div>
<div class="t" style="left:0px;width:53px;text-align:right;top:47.00px;font-family:'Liberation Mono', monospace;font-size:16px;color:#2b91af;">33</div>
<div class="t" style="left:85px;top:71.00px;font-family:'Liberation Mono', monospace;font-size:16px;"><span style="color:#dcdcdc">        </span><span style="color:#569cd6">this</span><span style="color:#dcdcdc">.Text = </span><span style="color:#d69d85">&quot;Form1&quot;</span><span style="color:#dcdcdc">;</span></div>
<div class="t" style="left:0px;width:53px;text-align:right;top:71.00px;font-family:'Liberation Mono', monospace;font-size:16px;color:#2b91af;">34</div>
<div class="t" style="left:85px;top:95.00px;font-family:'Liberation Mono', monospace;font-size:16px;"></div>
<div class="t" style="left:0px;width:53px;text-align:right;top:95.00px;font-family:'Liberation Mono', monospace;font-size:16px;color:#2b91af;">35</div>
<div class="t" style="left:85px;top:119.00px;font-family:'Liberation Mono', monospace;font-size:16px;"><span style="color:#dcdcdc">        </span><span style="color:#57a64a">// Add a button to proceed</span></div>
<div class="t" style="left:0px;width:53px;text-align:right;top:119.00px;font-family:'Liberation Mono', monospace;font-size:16px;color:#2b91af;">36</div>
<div class="t" style="left:85px;top:142.00px;font-family:'Liberation Mono', monospace;font-size:16px;"><span style="color:#dcdcdc">        Button startButton = </span><span style="color:#569cd6">new</span><span style="color:#dcdcdc"> Button</span><span style="color:#179fff">()</span><span style="color:#dcdcdc">;</span></div>
<div class="t" style="left:0px;width:53px;text-align:right;top:142.00px;font-family:'Liberation Mono', monospace;font-size:16px;color:#2b91af;">37</div>
<div class="t" style="left:85px;top:166.00px;font-family:'Liberation Mono', monospace;font-size:16px;"><span style="color:#dcdcdc">        startButton.Text = </span><span style="color:#d69d85">&quot;Start&quot;</span><span style="color:#dcdcdc">;</span></div>
<div class="t" style="left:0px;width:53px;text-align:right;top:166.00px;font-family:'Liberation Mono', monospace;font-size:16px;color:#2b91af;">38</div>
<div class="t" style="left:85px;top:190.00px;font-family:'Liberation Mono', monospace;font-size:16px;"><span style="color:#dcdcdc">        startButton.Location = </span><span style="color:#569cd6">new</span><span style="color:#dcdcdc"> System.Drawing.</span><span style="color:#4ec9b0">Point</span><span style="color:#179fff">(</span><span style="color:#b5cea8">1200</span><span style="color:#dcdcdc">, </span><span style="color:#b5cea8">600</span><span style="color:#179fff">)</span><span style="color:#dcdcdc">;</span></div>
<div class="t" style="left:0px;width:53px;text-align:right;top:190.00px;font-family:'Liberation Mono', monospace;font-size:16px;color:#2b91af;">39</div>
<div class="t" style="left:85px;top:214.00px;font-family:'Liberation Mono', monospace;font-size:16px;"><span style="color:#dcdcdc">        startButton.Size = </span><span style="color:#569cd6">new</span><span style="color:#dcdcdc"> System.Drawing.</span><span style="color:#4ec9b0">Size</span><span style="color:#179fff">(</span><span style="color:#b5cea8">50</span><span style="color:#dcdcdc">, </span><span style="color:#b5cea8">50</span><span style="color:#179fff">)</span><span style="color:#dcdcdc">;</span></div>
<div class="t" style="left:0px;width:53px;text-align:right;top:214.00px;font-family:'Liberation Mono', monospace;font-size:16px;color:#2b91af;">40</div>
<div class="t" style="left:85px;top:237.00px;font-family:'Liberation Mono', monospace;font-size:16px;"><span style="color:#dcdcdc">        startButton.Click += startButton_Click;</span></div>
<div class="t" style="left:0px;width:53px;text-align:right;top:237.00px;font-family:'Liberation Mono', monospace;font-size:16px;color:#2b91af;">41</div>
<div class="t" style="left:85px;top:261.00px;font-family:'Liberation Mono', monospace;font-size:16px;"><span style="color:#dcdcdc">        </span><span style="color:#569cd6">this</span><span style="color:#dcdcdc">.Controls.Add</span><span style="color:#179fff">(</span><span style="color:#dcdcdc">startButton</span><span style="color:#179fff">)</span><span style="color:#dcdcdc">;</span></div>
<div class="t" style="left:0px;width:53px;text-align:right;top:261.00px;font-family:'Liberation Mono', monospace;font-size:16px;color:#2b91af;">42</div>
<div class="t" style="left:85px;top:285.00px;font-family:'Liberation Mono', monospace;font-size:16px;"></div>
<div class="t" style="left:0px;width:53px;text-align:right;top:285.00px;font-family:'Liberation Mono', monospace;font-size:16px;color:#2b91af;">43</div>
<div class="t" style="left:85px;top:309.00px;font-family:'Liberation Mono', monospace;font-size:16px;"><span style="color:#dcdcdc">        </span><span style="color:#57a64a">//Title Screen Background</span></div>
<div class="t" style="left:0px;width:53px;text-align:right;top:309.00px;font-family:'Liberation Mono', monospace;font-size:16px;color:#2b91af;">44</div>
<div class="t" style="left:85px;top:332.00px;font-family:'Liberation Mono', monospace;font-size:16px;"><span style="color:#dcdcdc">        </span><span style="color:#57a64a">// Load image from file but also, @&quot;File&#x27;s Relative Path Here&quot;</span></div>
<div class="t" style="left:0px;width:53px;text-align:right;top:332.00px;font-family:'Liberation Mono', monospace;font-size:16px;color:#2b91af;">45</div>
<div class="t" style="left:85px;top:356.00px;font-family:'Liberation Mono', monospace;font-size:16px;"><span style="color:#dcdcdc">        Image titleBackground = Image.FromFile</span><span style="color:#179fff">(</span><span style="color:#d69d85">@&quot;Assets\SoltrianiusRevisedTitleScreen.png&quot;</span><span style="color:#179fff">)</span><span style="color:#dcdcdc">;</span></div>
<div class="t" style="left:0px;width:53px;text-align:right;top:356.00px;font-family:'Liberation Mono', monospace;font-size:16px;color:#2b91af;">46</div>
<div class="t" style="left:85px;top:380.00px;font-family:'Liberation Mono', monospace;font-size:16px;"><span style="color:#dcdcdc">        </span><span style="color:#57a64a">// Set the background image</span></div>
<div class="t" style="left:0px;width:53px;text-align:right;top:380.00px;font-family:'Liberation Mono', monospace;font-size:16px;color:#2b91af;">47</div>
<div class="a" style="left:85px;top:0;width:1px;height:397px;background:#404040"></div>
<div class="a" style="left:123px;top:0;width:1px;height:397px;background:#707070"></div>
</div>
<svg style="left:362.8px;top:348.9px" width="12.2" height="17.2" viewBox="0 0 12.2 17.2"><path d="M6.1 0.2A6 6 0 0 0 2.6 11.2C3.2 11.8 3.2 12.2 3.2 12.8V16.2C3.2 16.8 3.6 17.2 4.2 17.2H8C8.6 17.2 9 16.8 9 16.2V12.8C9 12.2 9 11.8 9.6 11.2A6 6 0 0 0 6.1 0.2Z M5 12.8H7.2V15H5Z" fill="#ffcc00" fill-rule="evenodd"/></svg>
<div style="position:absolute;left:273px;top:116px;width:1517px;height:46.5px;background:#1e1e1e;box-shadow:0 3px 4px -1px rgba(0,0,0,0.9);"></div>
<div class="t" style="left:358px;top:120.00px;font-family:'Liberation Mono', monospace;font-size:16px;"><span style="color:#569cd6">partial</span><span style="color:#dcdcdc"> </span><span style="color:#569cd6">class</span><span style="color:#dcdcdc"> </span><span style="color:#4ec9b0">Form1</span></div>
<div class="t" style="left:273px;width:52px;text-align:right;top:120.00px;font-family:'Liberation Mono', monospace;font-size:16px;color:#2b91af;">3</div>
<div class="t" style="left:358px;top:144.00px;font-family:'Liberation Mono', monospace;font-size:16px;"><span style="color:#dcdcdc">    </span><span style="color:#569cd6">private</span><span style="color:#dcdcdc"> </span><span style="color:#569cd6">void</span><span style="color:#dcdcdc"> InitializeComponent</span><span style="color:#da70d6">()</span></div>
<div class="t" style="left:273px;width:52px;text-align:right;top:144.00px;font-family:'Liberation Mono', monospace;font-size:16px;color:#2b91af;">29</div>
<svg style="left:1795px;top:116px;overflow:hidden" width="108" height="444" viewBox="0 0 108 444"><rect x="0.00" y="2.30" width="4.00" height="1.5" fill="#569cd6" opacity="0.38"/><rect x="5.20" y="2.30" width="2.00" height="1.5" fill="#569cd6" opacity="0.38"/><rect x="8.40" y="2.30" width="7.00" height="1.5" fill="#dcdcdc" opacity="0.38"/><rect x="16.60" y="2.30" width="4.00" height="1.5" fill="#dcdcdc" opacity="0.38"/><rect x="21.80" y="2.30" width="5.00" height="1.5" fill="#dcdcdc" opacity="0.38"/><rect x="28.00" y="2.30" width="7.00" height="1.5" fill="#dcdcdc" opacity="0.38"/><rect x="36.20" y="2.30" width="3.00" height="1.5" fill="#dcdcdc" opacity="0.38"/><rect x="40.40" y="2.30" width="8.00" height="1.5" fill="#4ec9b0" opacity="0.38"/><rect x="49.60" y="2.30" width="2.00" height="1.5" fill="#4ec9b0" opacity="0.38"/><rect x="52.80" y="2.30" width="3.00" height="1.5" fill="#dcdcdc" opacity="0.38"/><rect x="57.00" y="2.30" width="7.00" height="1.5" fill="#dcdcdc" opacity="0.38"/><rect x="65.20" y="2.30" width="3.00" height="1.5" fill="#569cd6" opacity="0.38"/><rect x="69.40" y="2.30" width="1.00" height="1.5" fill="#569cd6" opacity="0.38"/><rect x="0.00" y="4.80" width="6.00" height="1.5" fill="#57a64a" opacity="0.38"/><rect x="7.20" y="4.80" width="4.00" height="1.5" fill="#57a64a" opacity="0.38"/><rect x="0.00" y="7.30" width="7.00" height="1.5" fill="#57a64a" opacity="0.38"/><rect x="8.20" y="7.30" width="4.00" height="1.5" fill="#57a64a" opacity="0.38"/><rect x="13.40" y="7.30" width="4.00" height="1.5" fill="#57a64a" opacity="0.38"/><rect x="18.60" y="7.30" width="7.00" height="1.5" fill="#57a64a" opacity="0.38"/><rect x="0.00" y="9.80" width="6.00" height="1.5" fill="#57a64a" opacity="0.38"/><rect x="7.20" y="9.80" width="4.00" height="1.5" fill="#57a64a" opacity="0.38"/><rect x="0.00" y="12.30" width="9.00" height="1.5" fill="#57a64a" opacity="0.38"/><rect x="10.20" y="12.30" width="7.00" height="1.5" fill="#57a64a" opacity="0.38"/><rect x="18.40" y="12.30" width="6.00" height="1.5" fill="#57a64a" opacity="0.38"/><rect x="25.60" y="12.30" width="6.00" height="1.5" fill="#57a64a" opacity="0.38"/><rect x="32.80" y="12.30" width="8.00" height="1.5" fill="#57a64a" opacity="0.38"/><rect x="42.00" y="12.30" width="9.00" height="1.5" fill="#57a64a" opacity="0.38"/><rect x="52.20" y="12.30" width="4.00" height="1.5" fill="#57a64a" opacity="0.38"/><rect x="57.40" y="12.30" width="4.00" height="1.5" fill="#57a64a" opacity="0.38"/><rect x="62.60" y="12.30" width="7.00" height="1.5" fill="#57a64a" opacity="0.38"/><rect x="0.00" y="14.80" width="4.00" height="1.5" fill="#569cd6" opacity="0.38"/><rect x="5.20" y="14.80" width="9.00" height="1.5" fill="#569cd6" opacity="0.38"/><rect x="15.40" y="14.80" width="3.00" height="1.5" fill="#569cd6" opacity="0.38"/><rect x="19.60" y="14.80" width="5.00" height="1.5" fill="#569cd6" opacity="0.38"/><rect x="25.80" y="14.80" width="8.00" height="1.5" fill="#4ec9b0" opacity="0.38"/><rect x="35.00" y="14.80" width="3.00" height="1.5" fill="#4ec9b0" opacity="0.38"/><rect x="39.20" y="14.80" width="1.00" height="1.5" fill="#4ec9b0" opacity="0.38"/><rect x="41.40" y="14.80" width="9.00" height="1.5" fill="#dcdcdc" opacity="0.38"/><rect x="51.60" y="14.80" width="1.00" height="1.5" fill="#dcdcdc" opacity="0.38"/><rect x="5.00" y="17.30" width="4.00" height="1.5" fill="#57a64a" opacity="0.38"/><rect x="10.20" y="17.30" width="9.00" height="1.5" fill="#57a64a" opacity="0.38"/><rect x="20.40" y="17.30" width="1.00" height="1.5" fill="#57a64a" opacity="0.38"/><rect x="22.60" y="17.30" width="3.00" height="1.5" fill="#dcdcdc" opacity="0.38"/><rect x="26.80" y="17.30" width="5.00" height="1.5" fill="#dcdcdc" opacity="0.38"/><rect x="33.00" y="17.30" width="8.00" height="1.5" fill="#dcdcdc" opacity="0.38"/><rect x="42.20" y="17.30" width="3.00" height="1.5" fill="#569cd6" opacity="0.38"/><rect x="46.40" y="17.30" width="3.00" height="1.5" fill="#569cd6" opacity="0.38"/><rect x="5.00" y="19.80" width="2.00" height="1.5" fill="#dcdcdc" opacity="0.38"/><rect x="10.00" y="22.30" width="5.00" height="1.5" fill="#dcdcdc" opacity="0.38"/><rect x="16.20" y="22.30" width="6.00" height="1.5" fill="#dcdcdc" opacity="0.38"/><rect x="23.40" y="22.30" width="7.00" height="1.5" fill="#dcdcdc" opacity="0.38"/><rect x="31.60" y="22.30" width="4.00" height="1.5" fill="#dcdcdc" opacity="0.38"/><rect x="5.00" y="24.80" width="2.00" height="1.5" fill="#dcdcdc" opacity="0.38"/><rect x="5.00" y="27.30" width="6.00" height="1.5" fill="#569cd6" opacity="0.38"/><rect x="12.20" y="27.30" width="9.00" height="1.5" fill="#dcdcdc" opacity="0.38"/><rect x="22.40" y="27.30" width="6.00" height="1.5" fill="#dcdcdc" opacity="0.38"/><rect x="29.60" y="27.30" width="1.00" height="1.5" fill="#dcdcdc" opacity="0.38"/><rect x="0.00" y="29.80" width="1.00" height="1.5" fill="#dcdcdc" opacity="0.38"/><rect x="0.00" y="32.30" width="9.00" height="1.5" fill="#57a64a" opacity="0.38"/><rect x="10.20" y="32.30" width="7.00" height="1.5" fill="#57a64a" opacity="0.38"/><rect x="18.40" y="32.30" width="6.00" height="1.5" fill="#57a64a" opacity="0.38"/><rect x="25.60" y="32.30" width="4.00" height="1.5" fill="#57a64a" opacity="0.38"/><rect x="30.80" y="32.30" width="4.00" height="1.5" fill="#57a64a" opacity="0.38"/><rect x="0.00" y="34.80" width="3.00" height="1.5" fill="#569cd6" opacity="0.38"/><rect x="4.20" y="34.80" width="3.00" height="1.5" fill="#569cd6" opacity="0.38"/><rect x="8.40" y="34.80" width="4.00" height="1.5" fill="#569cd6" opacity="0.38"/><rect x="13.60" y="34.80" width="6.00" height="1.5" fill="#dcdcdc" opacity="0.38"/><rect x="20.80" y="34.80" width="4.00" height="1.5" fill="#dcdcdc" opacity="0.38"/><rect x="26.00" y="34.80" width="5.00" height="1.5" fill="#dcdcdc" opacity="0.38"/><rect x="32.20" y="34.80" width="3.00" height="1.5" fill="#dcdcdc" opacity="0.38"/><rect x="0.00" y="37.30" width="1.00" height="1.5" fill="#dcdcdc" opacity="0.38"/><rect x="5.00" y="39.80" width="4.00" height="1.5" fill="#569cd6" opacity="0.38"/><rect x="10.20" y="39.80" width="8.00" height="1.5" fill="#dcdcdc" opacity="0.38"/><rect x="19.40" y="39.80" width="8.00" height="1.5" fill="#dcdcdc" opacity="0.38"/><rect x="28.60" y="39.80" width="3.00" height="1.5" fill="#569cd6" opacity="0.38"/><rect x="32.80" y="39.80" width="6.00" height="1.5" fill="#dcdcdc" opacity="0.38"/><rect x="40.00" y="39.80" width="7.00" height="1.5" fill="#dcdcdc" opacity="0.38"/><rect x="48.20" y="39.80" width="7.00" height="1.5" fill="#dcdcdc" opacity="0.38"/><rect x="56.40" y="39.80" width="6.00" height="1.5" fill="#4ec9b0" opacity="0.38"/><rect x="63.60" y="39.80" width="3.00" height="1.5" fill="#4ec9b0" opacity="0.38"/><rect x="5.00" y="42.30" width="4.00" height="1.5" fill="#569cd6" opacity="0.38"/><rect x="10.20" y="42.30" width="7.00" height="1.5" fill="#dcdcdc" opacity="0.38"/><rect x="18.40" y="42.30" width="7.00" height="1.5" fill="#dcdcdc" opacity="0.38"/><rect x="26.60" y="42.30" width="6.00" height="1.5" fill="#dcdcdc" opacity="0.38"/><rect x="33.80" y="42.30" width="7.00" height="1.5" fill="#dcdcdc" opacity="0.38"/><rect x="42.00" y="42.30" width="4.00" height="1.5" fill="#dcdcdc" opacity="0.38"/><rect x="47.20" y="42.30" width="5.00" height="1.5" fill="#dcdcdc" opacity="0.38"/><rect x="53.40" y="42.30" width="8.00" height="1.5" fill="#dcdcdc" opacity="0.38"/><rect x="62.60" y="42.30" width="3.00" height="1.5" fill="#dcdcdc" opacity="0.38"/><rect x="66.80" y="42.30" width="3.00" height="1.5" fill="#dcdcdc" opacity="0.38"/><rect x="5.00" y="44.80" width="4.00" height="1.5" fill="#569cd6" opacity="0.38"/><rect x="10.20" y="44.80" width="7.00" height="1.5" fill="#dcdcdc" opacity="0.38"/><rect x="18.40" y="44.80" width="7.00" height="1.5" fill="#dcdcdc" opacity="0.38"/><rect x="26.60" y="44.80" width="3.00" height="1.5" fill="#569cd6" opacity="0.38"/><rect x="30.80" y="44.80" width="4.00" height="1.5" fill="#dcdcdc" opacity="0.38"/><rect x="36.00" y="44.80" width="8.00" height="1.5" fill="#dcdcdc" opacity="0.38"/><rect x="45.20" y="44.80" width="4.00" height="1.5" fill="#4ec9b0" opacity="0.38"/><rect x="50.40" y="44.80" width="5.00" height="1.5" fill="#b5cea8" opacity="0.38"/><rect x="56.60" y="44.80" width="3.00" height="1.5" fill="#b5cea8" opacity="0.38"/><rect x="5.00" y="47.30" width="4.00" height="1.5" fill="#569cd6" opacity="0.38"/><rect x="10.20" y="47.30" width="7.00" height="1.5" fill="#dcdcdc" opacity="0.38"/><rect x="18.40" y="47.30" width="3.00" height="1.5" fill="#dcdcdc" opacity="0.38"/><rect x="22.60" y="47.30" width="2.00" height="1.5" fill="#dcdcdc" opacity="0.38"/><rect x="25.80" y="47.30" width="7.00" height="1.5" fill="#d69d85" opacity="0.38"/><rect x="5.00" y="52.30" width="4.00" height="1.5" fill="#57a64a" opacity="0.38"/><rect x="10.20" y="52.30" width="8.00" height="1.5" fill="#57a64a" opacity="0.38"/><rect x="19.40" y="52.30" width="9.00" height="1.5" fill="#57a64a" opacity="0.38"/><rect x="29.60" y="52.30" width="1.00" height="1.5" fill="#57a64a" opacity="0.38"/><rect x="5.00" y="54.80" width="5.00" height="1.5" fill="#dcdcdc" opacity="0.38"/><rect x="11.20" y="54.80" width="5.00" height="1.5" fill="#dcdcdc" opacity="0.38"/><rect x="17.40" y="54.80" width="3.00" height="1.5" fill="#dcdcdc" opacity="0.38"/><rect x="21.60" y="54.80" width="3.00" height="1.5" fill="#dcdcdc" opacity="0.38"/><rect x="25.80" y="54.80" width="6.00" height="1.5" fill="#dcdcdc" opacity="0.38"/><rect x="33.00" y="54.80" width="3.00" height="1.5" fill="#569cd6" opacity="0.38"/><rect x="37.20" y="54.80" width="8.00" height="1.5" fill="#dcdcdc" opacity="0.38"/><rect x="5.00" y="57.30" width="6.00" height="1.5" fill="#dcdcdc" opacity="0.38"/><rect x="12.20" y="57.30" width="3.00" height="1.5" fill="#dcdcdc" opacity="0.38"/><rect x="16.40" y="57.30" width="5.00" height="1.5" fill="#dcdcdc" opacity="0.38"/><rect x="22.60" y="57.30" width="4.00" height="1.5" fill="#dcdcdc" opacity="0.38"/><rect x="27.80" y="57.30" width="3.00" height="1.5" fill="#d69d85" opacity="0.38"/><rect x="32.00" y="57.30" width="4.00" height="1.5" fill="#d69d85" opacity="0.38"/><rect x="5.00" y="59.80" width="4.00" height="1.5" fill="#dcdcdc" opacity="0.38"/><rect x="10.20" y="59.80" width="3.00" height="1.5" fill="#dcdcdc" opacity="0.38"/><rect x="14.40" y="59.80" width="5.00" height="1.5" fill="#dcdcdc" opacity="0.38"/><rect x="20.60" y="59.80" width="6.00" height="1.5" fill="#dcdcdc" opacity="0.38"/><rect x="27.80" y="59.80" width="4.00" height="1.5" fill="#dcdcdc" opacity="0.38"/><rect x="33.00" y="59.80" width="3.00" height="1.5" fill="#569cd6" opacity="0.38"/><rect x="37.20" y="59.80" width="9.00" height="1.5" fill="#dcdcdc" opacity="0.38"/><rect x="47.40" y="59.80" width="3.00" height="1.5" fill="#dcdcdc" opacity="0.38"/><rect x="51.60" y="59.80" width="2.00" height="1.5" fill="#dcdcdc" opacity="0.38"/><rect x="54.80" y="59.80" width="5.00" height="1.5" fill="#4ec9b0" opacity="0.38"/><rect x="61.00" y="59.80" width="7.00" height="1.5" fill="#b5cea8" opacity="0.38"/><rect x="69.20" y="59.80" width="2.00" height="1.5" fill="#b5cea8" opacity="0.38"/><rect x="5.00" y="62.30" width="3.00" height="1.5" fill="#dcdcdc" opacity="0.38"/><rect x="9.20" y="62.30" width="6.00" height="1.5" fill="#dcdcdc" opacity="0.38"/><rect x="16.40" y="62.30" width="8.00" height="1.5" fill="#dcdcdc" opacity="0.38"/><rect x="25.60" y="62.30" width="1.00" height="1.5" fill="#dcdcdc" opacity="0.38"/><rect x="27.80" y="62.30" width="3.00" height="1.5" fill="#569cd6" opacity="0.38"/><rect x="32.00" y="62.30" width="7.00" height="1.5" fill="#dcdcdc" opacity="0.38"/><rect x="40.20" y="62.30" width="5.00" height="1.5" fill="#dcdcdc" opacity="0.38"/><rect x="46.40" y="62.30" width="2.00" height="1.5" fill="#dcdcdc" opacity="0.38"/><rect x="49.60" y="62.30" width="4.00" height="1.5" fill="#4ec9b0" opacity="0.38"/><rect x="54.80" y="62.30" width="3.00" height="1.5" fill="#b5cea8" opacity="0.38"/><rect x="59.00" y="62.30" width="3.00" height="1.5" fill="#b5cea8" opacity="0.38"/><rect x="5.00" y="64.80" width="3.00" height="1.5" fill="#dcdcdc" opacity="0.38"/><rect x="9.20" y="64.80" width="3.00" height="1.5" fill="#dcdcdc" opacity="0.38"/><rect x="13.40" y="64.80" width="3.00" height="1.5" fill="#dcdcdc" opacity="0.38"/><rect x="17.60" y="64.80" width="7.00" height="1.5" fill="#dcdcdc" opacity="0.38"/><rect x="25.80" y="64.80" width="7.00" height="1.5" fill="#dcdcdc" opacity="0.38"/><rect x="34.00" y="64.80" width="3.00" height="1.5" fill="#dcdcdc" opacity="0.38"/><rect x="38.20" y="64.80" width="4.00" height="1.5" fill="#dcdcdc" opacity="0.38"/><rect x="43.40" y="64.80" width="4.00" height="1.5" fill="#dcdcdc" opacity="0.38"/><rect x="5.00" y="67.30" width="4.00" height="1.5" fill="#569cd6" opacity="0.38"/><rect x="10.20" y="67.30" width="7.00" height="1.5" fill="#dcdcdc" opacity="0.38"/><rect x="18.40" y="67.30" width="5.00" height="1.5" fill="#dcdcdc" opacity="0.38"/><rect x="24.60" y="67.30" width="4.00" height="1.5" fill="#dcdcdc" opacity="0.38"/><rect x="29.80" y="67.30" width="8.00" height="1.5" fill="#dcdcdc" opacity="0.38"/><rect x="5.00" y="72.30" width="3.00" height="1.5" fill="#57a64a" opacity="0.38"/><rect x="9.20" y="72.30" width="9.00" height="1.5" fill="#57a64a" opacity="0.38"/><rect x="19.40" y="72.30" width="5.00" height="1.5" fill="#57a64a" opacity="0.38"/><rect x="25.60" y="72.30" width="5.00" height="1.5" fill="#57a64a" opacity="0.38"/><rect x="5.00" y="74.80" width="5.00" height="1.5" fill="#57a64a" opacity="0.38"/><rect x="11.20" y="74.80" width="4.00" height="1.5" fill="#57a64a" opacity="0.38"/><rect x="16.40" y="74.80" width="9.00" height="1.5" fill="#57a64a" opacity="0.38"/><rect x="26.60" y="74.80" width="6.00" height="1.5" fill="#57a64a" opacity="0.38"/><rect x="33.80" y="74.80" width="6.00" height="1.5" fill="#57a64a" opacity="0.38"/><rect x="41.00" y="74.80" width="6.00" height="1.5" fill="#57a64a" opacity="0.38"/><rect x="48.20" y="74.80" width="9.00" height="1.5" fill="#57a64a" opacity="0.38"/><rect x="58.40" y="74.80" width="7.00" height="1.5" fill="#57a64a" opacity="0.38"/><rect x="66.60" y="74.80" width="6.00" height="1.5" fill="#57a64a" opacity="0.38"/><rect x="73.80" y="74.80" width="8.00" height="1.5" fill="#57a64a" opacity="0.38"/><rect x="83.00" y="74.80" width="8.00" height="1.5" fill="#57a64a" opacity="0.38"/><rect x="5.00" y="77.30" width="7.00" height="1.5" fill="#dcdcdc" opacity="0.38"/><rect x="13.20" y="77.30" width="8.00" height="1.5" fill="#dcdcdc" opacity="0.38"/><rect x="22.40" y="77.30" width="7.00" height="1.5" fill="#dcdcdc" opacity="0.38"/><rect x="30.60" y="77.30" width="3.00" height="1.5" fill="#dcdcdc" opacity="0.38"/><rect x="34.80" y="77.30" width="7.00" height="1.5" fill="#dcdcdc" opacity="0.38"/><rect x="43.00" y="77.30" width="4.00" height="1.5" fill="#dcdcdc" opacity="0.38"/><rect x="48.20" y="77.30" width="7.00" height="1.5" fill="#d69d85" opacity="0.38"/><rect x="56.40" y="77.30" width="5.00" height="1.5" fill="#d69d85" opacity="0.38"/><rect x="62.60" y="77.30" width="6.00" height="1.5" fill="#d69d85" opacity="0.38"/><rect x="69.80" y="77.30" width="8.00" height="1.5" fill="#d69d85" opacity="0.38"/><rect x="79.00" y="77.30" width="8.00" height="1.5" fill="#d69d85" opacity="0.38"/><rect x="88.20" y="77.30" width="8.00" height="1.5" fill="#d69d85" opacity="0.38"/><rect x="97.40" y="77.30" width="2.00" height="1.5" fill="#d69d85" opacity="0.38"/><rect x="5.00" y="79.80" width="5.00" height="1.5" fill="#57a64a" opacity="0.38"/><rect x="11.20" y="79.80" width="6.00" height="1.5" fill="#57a64a" opacity="0.38"/><rect x="18.40" y="79.80" width="5.00" height="1.5" fill="#57a64a" opacity="0.38"/><rect x="24.60" y="79.80" width="7.00" height="1.5" fill="#57a64a" opacity="0.38"/><rect x="32.80" y="79.80" width="3.00" height="1.5" fill="#57a64a" opacity="0.38"/><rect x="5.00" y="82.30" width="4.00" height="1.5" fill="#569cd6" opacity="0.38"/><rect x="10.20" y="82.30" width="5.00" height="1.5" fill="#dcdcdc" opacity="0.38"/><rect x="16.40" y="82.30" width="3.00" height="1.5" fill="#dcdcdc" opacity="0.38"/><rect x="20.60" y="82.30" width="9.00" height="1.5" fill="#dcdcdc" opacity="0.38"/><rect x="30.80" y="82.30" width="6.00" height="1.5" fill="#dcdcdc" opacity="0.38"/><rect x="38.00" y="82.30" width="5.00" height="1.5" fill="#dcdcdc" opacity="0.38"/><rect x="5.00" y="84.80" width="5.00" height="1.5" fill="#57a64a" opacity="0.38"/><rect x="11.20" y="84.80" width="3.00" height="1.5" fill="#57a64a" opacity="0.38"/><rect x="15.40" y="84.80" width="6.00" height="1.5" fill="#57a64a" opacity="0.38"/><rect x="22.60" y="84.80" width="7.00" height="1.5" fill="#57a64a" opacity="0.38"/><rect x="30.80" y="84.80" width="7.00" height="1.5" fill="#57a64a" opacity="0.38"/><rect x="39.00" y="84.80" width="2.00" height="1.5" fill="#57a64a" opacity="0.38"/><rect x="5.00" y="87.30" width="4.00" height="1.5" fill="#569cd6" opacity="0.38"/><rect x="10.20" y="87.30" width="3.00" height="1.5" fill="#dcdcdc" opacity="0.38"/><rect x="14.40" y="87.30" width="8.00" height="1.5" fill="#dcdcdc" opacity="0.38"/><rect x="23.60" y="87.30" width="8.00" height="1.5" fill="#dcdcdc" opacity="0.38"/><rect x="32.80" y="87.30" width="5.00" height="1.5" fill="#dcdcdc" opacity="0.38"/><rect x="39.00" y="87.30" width="6.00" height="1.5" fill="#dcdcdc" opacity="0.38"/><rect x="46.20" y="87.30" width="5.00" height="1.5" fill="#dcdcdc" opacity="0.38"/><rect x="52.40" y="87.30" width="1.00" height="1.5" fill="#dcdcdc" opacity="0.38"/><rect x="0.00" y="89.80" width="1.00" height="1.5" fill="#dcdcdc" opacity="0.38"/><rect x="0.00" y="94.80" width="7.00" height="1.5" fill="#569cd6" opacity="0.38"/><rect x="8.20" y="94.80" width="5.00" height="1.5" fill="#569cd6" opacity="0.38"/><rect x="14.40" y="94.80" width="5.00" height="1.5" fill="#dcdcdc" opacity="0.38"/><rect x="20.60" y="94.80" width="8.00" height="1.5" fill="#dcdcdc" opacity="0.38"/><rect x="29.80" y="94.80" width="6.00" height="1.5" fill="#dcdcdc" opacity="0.38"/><rect x="37.00" y="94.80" width="1.00" height="1.5" fill="#dcdcdc" opacity="0.38"/><rect x="39.20" y="94.80" width="6.00" height="1.5" fill="#569cd6" opacity="0.38"/><rect x="46.40" y="94.80" width="3.00" height="1.5" fill="#dcdcdc" opacity="0.38"/><rect x="50.60" y="94.80" width="5.00" height="1.5" fill="#dcdcdc" opacity="0.38"/><rect x="56.80" y="94.80" width="3.00" height="1.5" fill="#4ec9b0" opacity="0.38"/><rect x="61.00" y="94.80" width="5.00" height="1.5" fill="#4ec9b0" opacity="0.38"/><rect x="67.20" y="94.80" width="4.00" height="1.5" fill="#dcdcdc" opacity="0.38"/><rect x="0.00" y="97.30" width="1.00" height="1.5" fill="#dcdcdc" opacity="0.38"/><rect x="5.00" y="99.80" width="6.00" height="1.5" fill="#4ec9b0" opacity="0.38"/><rect x="12.20" y="99.80" width="4.00" height="1.5" fill="#4ec9b0" opacity="0.38"/><rect x="17.40" y="99.80" width="7.00" height="1.5" fill="#dcdcdc" opacity="0.38"/><rect x="25.60" y="99.80" width="3.00" height="1.5" fill="#dcdcdc" opacity="0.38"/><rect x="29.80" y="99.80" width="3.00" height="1.5" fill="#569cd6" opacity="0.38"/><rect x="34.00" y="99.80" width="4.00" height="1.5" fill="#4ec9b0" opacity="0.38"/><rect x="39.20" y="99.80" width="5.00" height="1.5" fill="#4ec9b0" opacity="0.38"/><rect x="45.40" y="99.80" width="4.00" height="1.5" fill="#4ec9b0" opacity="0.38"/><rect x="50.60" y="99.80" width="1.00" height="1.5" fill="#4ec9b0" opacity="0.38"/><rect x="5.00" y="102.30" width="9.00" height="1.5" fill="#dcdcdc" opacity="0.38"/><rect x="15.20" y="102.30" width="1.00" height="1.5" fill="#dcdcdc" opacity="0.38"/><rect x="5.00" y="104.80" width="6.00" height="1.5" fill="#dcdcdc" opacity="0.38"/><rect x="0.00" y="107.30" width="1.00" height="1.5" fill="#dcdcdc" opacity="0.38"/><rect x="0.00" y="112.30" width="4.00" height="1.5" fill="#569cd6" opacity="0.38"/><rect x="5.20" y="112.30" width="5.00" height="1.5" fill="#4ec9b0" opacity="0.38"/><rect x="11.40" y="112.30" width="7.00" height="1.5" fill="#4ec9b0" opacity="0.38"/><rect x="19.60" y="112.30" width="4.00" height="1.5" fill="#dcdcdc" opacity="0.38"/><rect x="24.80" y="112.30" width="3.00" height="1.5" fill="#569cd6" opacity="0.38"/><rect x="29.00" y="112.30" width="2.00" height="1.5" fill="#569cd6" opacity="0.38"/><rect x="0.00" y="114.80" width="1.00" height="1.5" fill="#dcdcdc" opacity="0.38"/><rect x="5.00" y="117.30" width="3.00" height="1.5" fill="#569cd6" opacity="0.38"/><rect x="9.20" y="117.30" width="3.00" height="1.5" fill="#569cd6" opacity="0.38"/><rect x="13.40" y="117.30" width="8.00" height="1.5" fill="#4ec9b0" opacity="0.38"/><rect x="22.60" y="117.30" width="4.00" height="1.5" fill="#4ec9b0" opacity="0.38"/><rect x="5.00" y="119.80" width="1.00" height="1.5" fill="#dcdcdc" opacity="0.38"/><rect x="10.00" y="122.30" width="4.00" height="1.5" fill="#569cd6" opacity="0.38"/><rect x="15.20" y="122.30" width="7.00" height="1.5" fill="#dcdcdc" opacity="0.38"/><rect x="23.40" y="122.30" width="4.00" height="1.5" fill="#dcdcdc" opacity="0.38"/><rect x="28.60" y="122.30" width="8.00" height="1.5" fill="#dcdcdc" opacity="0.38"/><rect x="37.80" y="122.30" width="9.00" height="1.5" fill="#dcdcdc" opacity="0.38"/><rect x="48.00" y="122.30" width="2.00" height="1.5" fill="#dcdcdc" opacity="0.38"/><rect x="51.20" y="122.30" width="3.00" height="1.5" fill="#569cd6" opacity="0.38"/><rect x="55.40" y="122.30" width="5.00" height="1.5" fill="#dcdcdc" opacity="0.38"/><rect x="61.60" y="122.30" width="4.00" height="1.5" fill="#dcdcdc" opacity="0.38"/><rect x="66.80" y="122.30" width="1.00" height="1.5" fill="#dcdcdc" opacity="0.38"/><rect x="10.00" y="124.80" width="4.00" height="1.5" fill="#569cd6" opacity="0.38"/><rect x="15.20" y="124.80" width="8.00" height="1.5" fill="#dcdcdc" opacity="0.38"/><rect x="24.40" y="124.80" width="6.00" height="1.5" fill="#dcdcdc" opacity="0.38"/><rect x="31.60" y="124.80" width="3.00" height="1.5" fill="#569cd6" opacity="0.38"/><rect x="35.80" y="124.80" width="3.00" height="1.5" fill="#dcdcdc" opacity="0.38"/><rect x="40.00" y="124.80" width="7.00" height="1.5" fill="#dcdcdc" opacity="0.38"/><rect x="48.20" y="124.80" width="2.00" height="1.5" fill="#dcdcdc" opacity="0.38"/><rect x="51.40" y="124.80" width="4.00" height="1.5" fill="#4ec9b0" opacity="0.38"/><rect x="56.60" y="124.80" width="8.00" height="1.5" fill="#b5cea8" opacity="0.38"/><rect x="10.00" y="127.30" width="9.00" height="1.5" fill="#dcdcdc" opacity="0.38"/><rect x="20.20" y="127.30" width="4.00" height="1.5" fill="#dcdcdc" opacity="0.38"/><rect x="25.40" y="127.30" width="6.00" height="1.5" fill="#dcdcdc" opacity="0.38"/><rect x="32.60" y="127.30" width="1.00" height="1.5" fill="#dcdcdc" opacity="0.38"/><rect x="34.80" y="127.30" width="9.00" height="1.5" fill="#d69d85" opacity="0.38"/><rect x="45.00" y="127.30" width="4.00" height="1.5" fill="#d69d85" opacity="0.38"/><rect x="50.20" y="127.30" width="3.00" height="1.5" fill="#d69d85" opacity="0.38"/><rect x="54.40" y="127.30" width="5.00" height="1.5" fill="#d69d85" opacity="0.38"/><rect x="60.60" y="127.30" width="8.00" height="1.5" fill="#d69d85" opacity="0.38"/><rect x="69.80" y="127.30" width="8.00" height="1.5" fill="#d69d85" opacity="0.38"/><rect x="79.00" y="127.30" width="4.00" height="1.5" fill="#d69d85" opacity="0.38"/><rect x="84.20" y="127.30" width="7.00" height="1.5" fill="#d69d85" opacity="0.38"/><rect x="92.40" y="127.30" width="2.00" height="1.5" fill="#d69d85" opacity="0.38"/><rect x="10.00" y="129.80" width="5.00" height="1.5" fill="#dcdcdc" opacity="0.38"/><rect x="16.20" y="129.80" width="4.00" height="1.5" fill="#dcdcdc" opacity="0.38"/><rect x="21.40" y="129.80" width="9.00" height="1.5" fill="#dcdcdc" opacity="0.38"/><rect x="31.60" y="129.80" width="3.00" height="1.5" fill="#dcdcdc" opacity="0.38"/><rect x="35.80" y="129.80" width="3.00" height="1.5" fill="#dcdcdc" opacity="0.38"/><rect x="40.00" y="129.80" width="6.00" height="1.5" fill="#dcdcdc" opacity="0.38"/><rect x="10.00" y="132.30" width="4.00" height="1.5" fill="#dcdcdc" opacity="0.38"/><rect x="15.20" y="132.30" width="5.00" height="1.5" fill="#dcdcdc" opacity="0.38"/><rect x="21.40" y="132.30" width="9.00" height="1.5" fill="#dcdcdc" opacity="0.38"/><rect x="31.60" y="132.30" width="9.00" height="1.5" fill="#dcdcdc" opacity="0.38"/><rect x="41.80" y="132.30" width="9.00" height="1.5" fill="#dcdcdc" opacity="0.38"/><rect x="5.00" y="137.30" width="7.00" height="1.5" fill="#57a64a" opacity="0.38"/><rect x="13.20" y="137.30" width="4.00" height="1.5" fill="#57a64a" opacity="0.38"/><rect x="18.40" y="137.30" width="9.00" height="1.5" fill="#57a64a" opacity="0.38"/><rect x="28.60" y="137.30" width="2.00" height="1.5" fill="#57a64a" opacity="0.38"/><rect x="5.00" y="139.80" width="5.00" height="1.5" fill="#dcdcdc" opacity="0.38"/><rect x="11.20" y="139.80" width="9.00" height="1.5" fill="#dcdcdc" opacity="0.38"/><rect x="21.40" y="139.80" width="8.00" height="1.5" fill="#dcdcdc" opacity="0.38"/><rect x="30.60" y="139.80" width="3.00" height="1.5" fill="#569cd6" opacity="0.38"/><rect x="34.80" y="139.80" width="3.00" height="1.5" fill="#dcdcdc" opacity="0.38"/><rect x="39.00" y="139.80" width="5.00" height="1.5" fill="#dcdcdc" opacity="0.38"/><rect x="5.00" y="142.30" width="7.00" height="1.5" fill="#dcdcdc" opacity="0.38"/><rect x="13.20" y="142.30" width="5.00" height="1.5" fill="#dcdcdc" opacity="0.38"/><rect x="19.40" y="142.30" width="6.00" height="1.5" fill="#dcdcdc" opacity="0.38"/><rect x="26.60" y="142.30" width="4.00" height="1.5" fill="#d69d85" opacity="0.38"/><rect x="31.80" y="142.30" width="3.00" height="1.5" fill="#d69d85" opacity="0.38"/><rect x="5.00" y="144.80" width="5.00" height="1.5" fill="#dcdcdc" opacity="0.38"/><rect x="11.20" y="144.80" width="7.00" height="1.5" fill="#dcdcdc" opacity="0.38"/><rect x="19.40" y="144.80" width="9.00" height="1.5" fill="#dcdcdc" opacity="0.38"/><rect x="29.60" y="144.80" width="1.00" height="1.5" fill="#dcdcdc" opacity="0.38"/><rect x="31.80" y="144.80" width="3.00" height="1.5" fill="#569cd6" opacity="0.38"/><rect x="36.00" y="144.80" width="6.00" height="1.5" fill="#dcdcdc" opacity="0.38"/><rect x="43.20" y="144.80" width="5.00" height="1.5" fill="#dcdcdc" opacity="0.38"/><rect x="49.40" y="144.80" width="3.00" height="1.5" fill="#dcdcdc" opacity="0.38"/><rect x="53.60" y="144.80" width="5.00" height="1.5" fill="#4ec9b0" opacity="0.38"/><rect x="59.80" y="144.80" width="5.00" height="1.5" fill="#b5cea8" opacity="0.38"/><rect x="66.00" y="144.80" width="4.00" height="1.5" fill="#b5cea8" opacity="0.38"/><rect x="5.00" y="147.30" width="7.00" height="1.5" fill="#dcdcdc" opacity="0.38"/><rect x="13.20" y="147.30" width="6.00" height="1.5" fill="#dcdcdc" opacity="0.38"/><rect x="20.40" y="147.30" width="3.00" height="1.5" fill="#dcdcdc" opacity="0.38"/><rect x="24.60" y="147.30" width="2.00" height="1.5" fill="#dcdcdc" opacity="0.38"/><rect x="27.80" y="147.30" width="3.00" height="1.5" fill="#569cd6" opacity="0.38"/><rect x="32.00" y="147.30" width="4.00" height="1.5" fill="#dcdcdc" opacity="0.38"/><rect x="37.20" y="147.30" width="3.00" height="1.5" fill="#dcdcdc" opacity="0.38"/><rect x="41.40" y="147.30" width="6.00" height="1.5" fill="#dcdcdc" opacity="0.38"/><rect x="48.60" y="147.30" width="1.00" height="1.5" fill="#dcdcdc" opacity="0.38"/><rect x="50.80" y="147.30" width="4.00" height="1.5" fill="#4ec9b0" opacity="0.38"/><rect x="56.00" y="147.30" width="6.00" height="1.5" fill="#b5cea8" opacity="0.38"/><rect x="5.00" y="149.80" width="4.00" height="1.5" fill="#569cd6" opacity="0.38"/><rect x="10.20" y="149.80" width="7.00" height="1.5" fill="#dcdcdc" opacity="0.38"/><rect x="18.40" y="149.80" width="8.00" height="1.5" fill="#dcdcdc" opacity="0.38"/><rect x="27.60" y="149.80" width="4.00" height="1.5" fill="#dcdcdc" opacity="0.38"/><rect x="32.80" y="149.80" width="3.00" height="1.5" fill="#dcdcdc" opacity="0.38"/><rect x="37.00" y="149.80" width="2.00" height="1.5" fill="#dcdcdc" opacity="0.38"/><rect x="0.00" y="154.80" width="6.00" height="1.5" fill="#569cd6" opacity="0.38"/><rect x="7.20" y="154.80" width="6.00" height="1.5" fill="#569cd6" opacity="0.38"/><rect x="14.40" y="154.80" width="9.00" height="1.5" fill="#dcdcdc" opacity="0.38"/><rect x="24.60" y="154.80" width="8.00" height="1.5" fill="#dcdcdc" opacity="0.38"/><rect x="33.80" y="154.80" width="3.00" height="1.5" fill="#dcdcdc" opacity="0.38"/><rect x="38.00" y="154.80" width="6.00" height="1.5" fill="#569cd6" opacity="0.38"/><rect x="45.20" y="154.80" width="5.00" height="1.5" fill="#dcdcdc" opacity="0.38"/><rect x="51.40" y="154.80" width="3.00" height="1.5" fill="#dcdcdc" opacity="0.38"/><rect x="55.60" y="154.80" width="5.00" height="1.5" fill="#4ec9b0" opacity="0.38"/><rect x="61.80" y="154.80" width="3.00" height="1.5" fill="#4ec9b0" opacity="0.38"/><rect x="66.00" y="154.80" width="4.00" height="1.5" fill="#dcdcdc" opacity="0.38"/><rect x="0.00" y="157.30" width="1.00" height="1.5" fill="#dcdcdc" opacity="0.38"/><rect x="5.00" y="159.80" width="9.00" height="1.5" fill="#4ec9b0" opacity="0.38"/><rect x="15.20" y="159.80" width="1.00" height="1.5" fill="#4ec9b0" opacity="0.38"/><rect x="17.40" y="159.80" width="5.00" height="1.5" fill="#dcdcdc" opacity="0.38"/><rect x="23.60" y="159.80" width="3.00" height="1.5" fill="#dcdcdc" opacity="0.38"/><rect x="27.80" y="159.80" width="2.00" height="1.5" fill="#dcdcdc" opacity="0.38"/><rect x="31.00" y="159.80" width="3.00" height="1.5" fill="#569cd6" opacity="0.38"/><rect x="35.20" y="159.80" width="3.00" height="1.5" fill="#4ec9b0" opacity="0.38"/><rect x="39.40" y="159.80" width="3.00" height="1.5" fill="#4ec9b0" opacity="0.38"/><rect x="43.60" y="159.80" width="8.00" height="1.5" fill="#4ec9b0" opacity="0.38"/><rect x="5.00" y="162.30" width="8.00" height="1.5" fill="#dcdcdc" opacity="0.38"/><rect x="14.20" y="162.30" width="2.00" height="1.5" fill="#dcdcdc" opacity="0.38"/><rect x="5.00" y="164.80" width="4.00" height="1.5" fill="#dcdcdc" opacity="0.38"/><rect x="10.20" y="164.80" width="2.00" height="1.5" fill="#dcdcdc" opacity="0.38"/><rect x="0.00" y="167.30" width="1.00" height="1.5" fill="#dcdcdc" opacity="0.38"/><rect x="0.00" y="174.80" width="3.00" height="1.5" fill="#569cd6" opacity="0.38"/><rect x="4.20" y="174.80" width="3.00" height="1.5" fill="#569cd6" opacity="0.38"/><rect x="8.40" y="174.80" width="6.00" height="1.5" fill="#dcdcdc" opacity="0.38"/><rect x="15.60" y="174.80" width="8.00" height="1.5" fill="#dcdcdc" opacity="0.38"/><rect x="24.80" y="174.80" width="3.00" height="1.5" fill="#dcdcdc" opacity="0.38"/><rect x="29.00" y="174.80" width="4.00" height="1.5" fill="#dcdcdc" opacity="0.38"/><rect x="34.20" y="174.80" width="5.00" height="1.5" fill="#dcdcdc" opacity="0.38"/><rect x="40.40" y="174.80" width="5.00" height="1.5" fill="#4ec9b0" opacity="0.38"/><rect x="46.60" y="174.80" width="4.00" height="1.5" fill="#4ec9b0" opacity="0.38"/><rect x="51.80" y="174.80" width="1.00" height="1.5" fill="#4ec9b0" opacity="0.38"/><rect x="54.00" y="174.80" width="3.00" height="1.5" fill="#dcdcdc" opacity="0.38"/><rect x="58.20" y="174.80" width="7.00" height="1.5" fill="#dcdcdc" opacity="0.38"/><rect x="66.40" y="174.80" width="4.00" height="1.5" fill="#569cd6" opacity="0.38"/><rect x="0.00" y="177.30" width="6.00" height="1.5" fill="#57a64a" opacity="0.38"/><rect x="7.20" y="177.30" width="3.00" height="1.5" fill="#57a64a" opacity="0.38"/><rect x="11.40" y="177.30" width="1.00" height="1.5" fill="#57a64a" opacity="0.38"/><rect x="0.00" y="179.80" width="3.00" height="1.5" fill="#57a64a" opacity="0.38"/><rect x="4.20" y="179.80" width="5.00" height="1.5" fill="#57a64a" opacity="0.38"/><rect x="10.40" y="179.80" width="4.00" height="1.5" fill="#57a64a" opacity="0.38"/><rect x="15.60" y="179.80" width="5.00" height="1.5" fill="#57a64a" opacity="0.38"/><rect x="21.80" y="179.80" width="5.00" height="1.5" fill="#57a64a" opacity="0.38"/><rect x="0.00" y="182.30" width="7.00" height="1.5" fill="#57a64a" opacity="0.38"/><rect x="8.20" y="182.30" width="3.00" height="1.5" fill="#57a64a" opacity="0.38"/><rect x="0.00" y="184.80" width="9.00" height="1.5" fill="#57a64a" opacity="0.38"/><rect x="10.20" y="184.80" width="9.00" height="1.5" fill="#57a64a" opacity="0.38"/><rect x="20.40" y="184.80" width="3.00" height="1.5" fill="#57a64a" opacity="0.38"/><rect x="24.60" y="184.80" width="5.00" height="1.5" fill="#57a64a" opacity="0.38"/><rect x="30.80" y="184.80" width="4.00" height="1.5" fill="#57a64a" opacity="0.38"/><rect x="36.00" y="184.80" width="4.00" height="1.5" fill="#57a64a" opacity="0.38"/><rect x="41.20" y="184.80" width="3.00" height="1.5" fill="#57a64a" opacity="0.38"/><rect x="45.40" y="184.80" width="7.00" height="1.5" fill="#57a64a" opacity="0.38"/><rect x="53.60" y="184.80" width="9.00" height="1.5" fill="#57a64a" opacity="0.38"/><rect x="63.80" y="184.80" width="3.00" height="1.5" fill="#57a64a" opacity="0.38"/><rect x="68.00" y="184.80" width="4.00" height="1.5" fill="#57a64a" opacity="0.38"/><rect x="0.00" y="187.30" width="4.00" height="1.5" fill="#569cd6" opacity="0.38"/><rect x="5.20" y="187.30" width="9.00" height="1.5" fill="#569cd6" opacity="0.38"/><rect x="15.40" y="187.30" width="3.00" height="1.5" fill="#569cd6" opacity="0.38"/><rect x="19.60" y="187.30" width="5.00" height="1.5" fill="#569cd6" opacity="0.38"/><rect x="25.80" y="187.30" width="4.00" height="1.5" fill="#4ec9b0" opacity="0.38"/><rect x="31.00" y="187.30" width="8.00" height="1.5" fill="#4ec9b0" opacity="0.38"/><rect x="40.20" y="187.30" width="3.00" height="1.5" fill="#dcdcdc" opacity="0.38"/><rect x="44.40" y="187.30" width="6.00" height="1.5" fill="#dcdcdc" opacity="0.38"/><rect x="51.60" y="187.30" width="1.00" height="1.5" fill="#dcdcdc" opacity="0.38"/><rect x="5.00" y="189.80" width="7.00" height="1.5" fill="#57a64a" opacity="0.38"/><rect x="13.20" y="189.80" width="7.00" height="1.5" fill="#57a64a" opacity="0.38"/><rect x="21.40" y="189.80" width="6.00" height="1.5" fill="#dcdcdc" opacity="0.38"/><rect x="28.60" y="189.80" width="3.00" height="1.5" fill="#dcdcdc" opacity="0.38"/><rect x="32.80" y="189.80" width="7.00" height="1.5" fill="#dcdcdc" opacity="0.38"/><rect x="41.00" y="189.80" width="5.00" height="1.5" fill="#569cd6" opacity="0.38"/><rect x="47.20" y="189.80" width="1.00" height="1.5" fill="#569cd6" opacity="0.38"/><rect x="5.00" y="192.30" width="2.00" height="1.5" fill="#dcdcdc" opacity="0.38"/><rect x="10.00" y="194.80" width="7.00" height="1.5" fill="#dcdcdc" opacity="0.38"/><rect x="18.20" y="194.80" width="7.00" height="1.5" fill="#dcdcdc" opacity="0.38"/><rect x="26.40" y="194.80" width="7.00" height="1.5" fill="#dcdcdc" opacity="0.38"/><rect x="34.60" y="194.80" width="1.00" height="1.5" fill="#dcdcdc" opacity="0.38"/><rect x="5.00" y="197.30" width="2.00" height="1.5" fill="#dcdcdc" opacity="0.38"/><rect x="5.00" y="199.80" width="6.00" height="1.5" fill="#569cd6" opacity="0.38"/><rect x="12.20" y="199.80" width="5.00" height="1.5" fill="#dcdcdc" opacity="0.38"/><rect x="18.40" y="199.80" width="9.00" height="1.5" fill="#dcdcdc" opacity="0.38"/><rect x="28.60" y="199.80" width="2.00" height="1.5" fill="#dcdcdc" opacity="0.38"/><rect x="0.00" y="202.30" width="1.00" height="1.5" fill="#dcdcdc" opacity="0.38"/><rect x="0.00" y="204.80" width="9.00" height="1.5" fill="#57a64a" opacity="0.38"/><rect x="10.20" y="204.80" width="3.00" height="1.5" fill="#57a64a" opacity="0.38"/><rect x="14.40" y="204.80" width="9.00" height="1.5" fill="#57a64a" opacity="0.38"/><rect x="24.60" y="204.80" width="4.00" height="1.5" fill="#57a64a" opacity="0.38"/><rect x="29.80" y="204.80" width="3.00" height="1.5" fill="#57a64a" opacity="0.38"/><rect x="34.00" y="204.80" width="2.00" height="1.5" fill="#57a64a" opacity="0.38"/><rect x="0.00" y="207.30" width="3.00" height="1.5" fill="#569cd6" opacity="0.38"/><rect x="4.20" y="207.30" width="3.00" height="1.5" fill="#569cd6" opacity="0.38"/><rect x="8.40" y="207.30" width="4.00" height="1.5" fill="#569cd6" opacity="0.38"/><rect x="13.60" y="207.30" width="3.00" height="1.5" fill="#dcdcdc" opacity="0.38"/><rect x="17.80" y="207.30" width="9.00" height="1.5" fill="#dcdcdc" opacity="0.38"/><rect x="28.00" y="207.30" width="6.00" height="1.5" fill="#dcdcdc" opacity="0.38"/><rect x="0.00" y="209.80" width="1.00" height="1.5" fill="#dcdcdc" opacity="0.38"/><rect x="5.00" y="212.30" width="4.00" height="1.5" fill="#569cd6" opacity="0.38"/><rect x="10.20" y="212.30" width="7.00" height="1.5" fill="#dcdcdc" opacity="0.38"/><rect x="18.40" y="212.30" width="6.00" height="1.5" fill="#dcdcdc" opacity="0.38"/><rect x="25.60" y="212.30" width="3.00" height="1.5" fill="#dcdcdc" opacity="0.38"/><rect x="29.80" y="212.30" width="3.00" height="1.5" fill="#569cd6" opacity="0.38"/><rect x="34.00" y="212.30" width="5.00" height="1.5" fill="#dcdcdc" opacity="0.38"/><rect x="40.20" y="212.30" width="3.00" height="1.5" fill="#dcdcdc" opacity="0.38"/><rect x="44.40" y="212.30" width="5.00" height="1.5" fill="#dcdcdc" opacity="0.38"/><rect x="50.60" y="212.30" width="6.00" height="1.5" fill="#dcdcdc" opacity="0.38"/><rect x="57.80" y="212.30" width="1.00" height="1.5" fill="#dcdcdc" opacity="0.38"/><rect x="60.00" y="212.30" width="6.00" height="1.5" fill="#4ec9b0" opacity="0.38"/><rect x="67.20" y="212.30" width="3.00" height="1.5" fill="#4ec9b0" opacity="0.38"/><rect x="5.00" y="214.80" width="4.00" height="1.5" fill="#569cd6" opacity="0.38"/><rect x="10.20" y="214.80" width="5.00" height="1.5" fill="#dcdcdc" opacity="0.38"/><rect x="16.40" y="214.80" width="5.00" height="1.5" fill="#dcdcdc" opacity="0.38"/><rect x="22.60" y="214.80" width="4.00" height="1.5" fill="#dcdcdc" opacity="0.38"/><rect x="27.80" y="214.80" width="5.00" height="1.5" fill="#dcdcdc" opacity="0.38"/><rect x="34.00" y="214.80" width="6.00" height="1.5" fill="#dcdcdc" opacity="0.38"/><rect x="41.20" y="214.80" width="3.00" height="1.5" fill="#dcdcdc" opacity="0.38"/><rect x="45.40" y="214.80" width="4.00" height="1.5" fill="#dcdcdc" opacity="0.38"/><rect x="50.60" y="214.80" width="7.00" height="1.5" fill="#dcdcdc" opacity="0.38"/><rect x="58.80" y="214.80" width="3.00" height="1.5" fill="#dcdcdc" opacity="0.38"/><rect x="63.00" y="214.80" width="8.00" height="1.5" fill="#dcdcdc" opacity="0.38"/><rect x="5.00" y="217.30" width="4.00" height="1.5" fill="#569cd6" opacity="0.38"/><rect x="10.20" y="217.30" width="6.00" height="1.5" fill="#dcdcdc" opacity="0.38"/><rect x="17.40" y="217.30" width="8.00" height="1.5" fill="#dcdcdc" opacity="0.38"/><rect x="26.60" y="217.30" width="3.00" height="1.5" fill="#569cd6" opacity="0.38"/><rect x="30.80" y="217.30" width="7.00" height="1.5" fill="#dcdcdc" opacity="0.38"/><rect x="39.00" y="217.30" width="4.00" height="1.5" fill="#dcdcdc" opacity="0.38"/><rect x="44.20" y="217.30" width="1.00" height="1.5" fill="#dcdcdc" opacity="0.38"/><rect x="46.40" y="217.30" width="4.00" height="1.5" fill="#4ec9b0" opacity="0.38"/><rect x="51.60" y="217.30" width="6.00" height="1.5" fill="#b5cea8" opacity="0.38"/><rect x="58.80" y="217.30" width="2.00" height="1.5" fill="#b5cea8" opacity="0.38"/><rect x="5.00" y="219.80" width="4.00" height="1.5" fill="#569cd6" opacity="0.38"/><rect x="10.20" y="219.80" width="9.00" height="1.5" fill="#dcdcdc" opacity="0.38"/><rect x="20.40" y="219.80" width="3.00" height="1.5" fill="#dcdcdc" opacity="0.38"/><rect x="24.60" y="219.80" width="6.00" height="1.5" fill="#d69d85" opacity="0.38"/><rect x="31.80" y="219.80" width="1.00" height="1.5" fill="#d69d85" opacity="0.38"/><rect x="5.00" y="224.80" width="9.00" height="1.5" fill="#57a64a" opacity="0.38"/><rect x="15.20" y="224.80" width="3.00" height="1.5" fill="#57a64a" opacity="0.38"/><rect x="19.40" y="224.80" width="7.00" height="1.5" fill="#57a64a" opacity="0.38"/><rect x="27.60" y="224.80" width="3.00" height="1.5" fill="#57a64a" opacity="0.38"/><rect x="5.00" y="227.30" width="3.00" height="1.5" fill="#dcdcdc" opacity="0.38"/><rect x="9.20" y="227.30" width="5.00" height="1.5" fill="#dcdcdc" opacity="0.38"/><rect x="15.40" y="227.30" width="8.00" height="1.5" fill="#dcdcdc" opacity="0.38"/><rect x="24.60" y="227.30" width="6.00" height="1.5" fill="#dcdcdc" opacity="0.38"/><rect x="31.80" y="227.30" width="3.00" height="1.5" fill="#569cd6" opacity="0.38"/><rect x="36.00" y="227.30" width="8.00" height="1.5" fill="#dcdcdc" opacity="0.38"/><rect x="5.00" y="229.80" width="5.00" height="1.5" fill="#dcdcdc" opacity="0.38"/><rect x="11.20" y="229.80" width="6.00" height="1.5" fill="#dcdcdc" opacity="0.38"/><rect x="18.40" y="229.80" width="7.00" height="1.5" fill="#dcdcdc" opacity="0.38"/><rect x="26.60" y="229.80" width="6.00" height="1.5" fill="#d69d85" opacity="0.38"/><rect x="33.80" y="229.80" width="1.00" height="1.5" fill="#d69d85" opacity="0.38"/><rect x="5.00" y="232.30" width="3.00" height="1.5" fill="#dcdcdc" opacity="0.38"/><rect x="9.20" y="232.30" width="4.00" height="1.5" fill="#dcdcdc" opacity="0.38"/><rect x="14.40" y="232.30" width="4.00" height="1.5" fill="#dcdcdc" opacity="0.38"/><rect x="19.60" y="232.30" width="7.00" height="1.5" fill="#dcdcdc" opacity="0.38"/><rect x="27.80" y="232.30" width="4.00" height="1.5" fill="#dcdcdc" opacity="0.38"/><rect x="33.00" y="232.30" width="3.00" height="1.5" fill="#569cd6" opacity="0.38"/><rect x="37.20" y="232.30" width="7.00" height="1.5" fill="#dcdcdc" opacity="0.38"/><rect x="45.40" y="232.30" width="3.00" height="1.5" fill="#dcdcdc" opacity="0.38"/><rect x="49.60" y="232.30" width="4.00" height="1.5" fill="#dcdcdc" opacity="0.38"/><rect x="54.80" y="232.30" width="5.00" height="1.5" fill="#4ec9b0" opacity="0.38"/><rect x="61.00" y="232.30" width="4.00" height="1.5" fill="#b5cea8" opacity="0.38"/><rect x="66.20" y="232.30" width="5.00" height="1.5" fill="#b5cea8" opacity="0.38"/><rect x="5.00" y="234.80" width="4.00" height="1.5" fill="#dcdcdc" opacity="0.38"/><rect x="10.20" y="234.80" width="3.00" height="1.5" fill="#dcdcdc" opacity="0.38"/><rect x="14.40" y="234.80" width="5.00" height="1.5" fill="#dcdcdc" opacity="0.38"/><rect x="20.60" y="234.80" width="5.00" height="1.5" fill="#dcdcdc" opacity="0.38"/><rect x="26.80" y="234.80" width="1.00" height="1.5" fill="#dcdcdc" opacity="0.38"/><rect x="29.00" y="234.80" width="3.00" height="1.5" fill="#569cd6" opacity="0.38"/><rect x="33.20" y="234.80" width="9.00" height="1.5" fill="#dcdcdc" opacity="0.38"/><rect x="43.40" y="234.80" width="5.00" height="1.5" fill="#dcdcdc" opacity="0.38"/><rect x="49.60" y="234.80" width="3.00" height="1.5" fill="#4ec9b0" opacity="0.38"/><rect x="53.80" y="234.80" width="1.00" height="1.5" fill="#4ec9b0" opacity="0.38"/><rect x="56.00" y="234.80" width="6.00" height="1.5" fill="#b5cea8" opacity="0.38"/><rect x="5.00" y="237.30" width="3.00" height="1.5" fill="#dcdcdc" opacity="0.38"/><rect x="9.20" y="237.30" width="9.00" height="1.5" fill="#dcdcdc" opacity="0.38"/><rect x="19.40" y="237.30" width="8.00" height="1.5" fill="#dcdcdc" opacity="0.38"/><rect x="28.60" y="237.30" width="8.00" height="1.5" fill="#dcdcdc" opacity="0.38"/><rect x="37.80" y="237.30" width="6.00" height="1.5" fill="#dcdcdc" opacity="0.38"/><rect x="5.00" y="239.80" width="4.00" height="1.5" fill="#569cd6" opacity="0.38"/><rect x="10.20" y="239.80" width="9.00" height="1.5" fill="#dcdcdc" opacity="0.38"/><rect x="20.40" y="239.80" width="6.00" height="1.5" fill="#dcdcdc" opacity="0.38"/><rect x="27.60" y="239.80" width="8.00" height="1.5" fill="#dcdcdc" opacity="0.38"/><rect x="36.80" y="239.80" width="1.00" height="1.5" fill="#dcdcdc" opacity="0.38"/><rect x="5.00" y="244.80" width="8.00" height="1.5" fill="#57a64a" opacity="0.38"/><rect x="14.20" y="244.80" width="5.00" height="1.5" fill="#57a64a" opacity="0.38"/><rect x="20.40" y="244.80" width="7.00" height="1.5" fill="#57a64a" opacity="0.38"/><rect x="28.60" y="244.80" width="2.00" height="1.5" fill="#57a64a" opacity="0.38"/><rect x="5.00" y="247.30" width="3.00" height="1.5" fill="#57a64a" opacity="0.38"/><rect x="9.20" y="247.30" width="9.00" height="1.5" fill="#57a64a" opacity="0.38"/><rect x="19.40" y="247.30" width="7.00" height="1.5" fill="#57a64a" opacity="0.38"/><rect x="27.60" y="247.30" width="8.00" height="1.5" fill="#57a64a" opacity="0.38"/><rect x="36.80" y="247.30" width="3.00" height="1.5" fill="#57a64a" opacity="0.38"/><rect x="41.00" y="247.30" width="6.00" height="1.5" fill="#57a64a" opacity="0.38"/><rect x="48.20" y="247.30" width="4.00" height="1.5" fill="#57a64a" opacity="0.38"/><rect x="53.40" y="247.30" width="4.00" height="1.5" fill="#57a64a" opacity="0.38"/><rect x="58.60" y="247.30" width="9.00" height="1.5" fill="#57a64a" opacity="0.38"/><rect x="68.80" y="247.30" width="6.00" height="1.5" fill="#57a64a" opacity="0.38"/><rect x="76.00" y="247.30" width="3.00" height="1.5" fill="#57a64a" opacity="0.38"/><rect x="80.20" y="247.30" width="7.00" height="1.5" fill="#57a64a" opacity="0.38"/><rect x="88.40" y="247.30" width="3.00" height="1.5" fill="#57a64a" opacity="0.38"/><rect x="92.60" y="247.30" width="2.00" height="1.5" fill="#57a64a" opacity="0.38"/><rect x="5.00" y="249.80" width="3.00" height="1.5" fill="#dcdcdc" opacity="0.38"/><rect x="9.20" y="249.80" width="8.00" height="1.5" fill="#dcdcdc" opacity="0.38"/><rect x="18.40" y="249.80" width="6.00" height="1.5" fill="#dcdcdc" opacity="0.38"/><rect x="25.60" y="249.80" width="4.00" height="1.5" fill="#dcdcdc" opacity="0.38"/><rect x="30.80" y="249.80" width="9.00" height="1.5" fill="#dcdcdc" opacity="0.38"/><rect x="41.00" y="249.80" width="3.00" height="1.5" fill="#dcdcdc" opacity="0.38"/><rect x="45.20" y="249.80" width="3.00" height="1.5" fill="#dcdcdc" opacity="0.38"/><rect x="49.40" y="249.80" width="9.00" height="1.5" fill="#d69d85" opacity="0.38"/><rect x="59.60" y="249.80" width="9.00" height="1.5" fill="#d69d85" opacity="0.38"/><rect x="69.80" y="249.80" width="3.00" height="1.5" fill="#d69d85" opacity="0.38"/><rect x="74.00" y="249.80" width="3.00" height="1.5" fill="#d69d85" opacity="0.38"/><rect x="78.20" y="249.80" width="9.00" height="1.5" fill="#d69d85" opacity="0.38"/><rect x="88.40" y="249.80" width="3.00" height="1.5" fill="#d69d85" opacity="0.38"/><rect x="92.60" y="249.80" width="8.00" height="1.5" fill="#d69d85" opacity="0.38"/><rect x="5.00" y="252.30" width="6.00" height="1.5" fill="#57a64a" opacity="0.38"/><rect x="12.20" y="252.30" width="9.00" height="1.5" fill="#57a64a" opacity="0.38"/><rect x="22.40" y="252.30" width="8.00" height="1.5" fill="#57a64a" opacity="0.38"/><rect x="31.60" y="252.30" width="3.00" height="1.5" fill="#57a64a" opacity="0.38"/><rect x="5.00" y="254.80" width="4.00" height="1.5" fill="#569cd6" opacity="0.38"/><rect x="10.20" y="254.80" width="5.00" height="1.5" fill="#dcdcdc" opacity="0.38"/><rect x="16.40" y="254.80" width="9.00" height="1.5" fill="#dcdcdc" opacity="0.38"/><rect x="26.60" y="254.80" width="3.00" height="1.5" fill="#dcdcdc" opacity="0.38"/><rect x="30.80" y="254.80" width="3.00" height="1.5" fill="#dcdcdc" opacity="0.38"/><rect x="35.00" y="254.80" width="8.00" height="1.5" fill="#dcdcdc" opacity="0.38"/><rect x="5.00" y="257.30" width="7.00" height="1.5" fill="#57a64a" opacity="0.38"/><rect x="13.20" y="257.30" width="7.00" height="1.5" fill="#57a64a" opacity="0.38"/><rect x="21.40" y="257.30" width="7.00" height="1.5" fill="#57a64a" opacity="0.38"/><rect x="29.60" y="257.30" width="8.00" height="1.5" fill="#57a64a" opacity="0.38"/><rect x="38.80" y="257.30" width="1.00" height="1.5" fill="#57a64a" opacity="0.38"/><rect x="5.00" y="259.80" width="3.00" height="1.5" fill="#569cd6" opacity="0.38"/><rect x="9.20" y="259.80" width="1.00" height="1.5" fill="#569cd6" opacity="0.38"/><rect x="11.40" y="259.80" width="8.00" height="1.5" fill="#dcdcdc" opacity="0.38"/><rect x="20.60" y="259.80" width="3.00" height="1.5" fill="#dcdcdc" opacity="0.38"/><rect x="24.80" y="259.80" width="7.00" height="1.5" fill="#dcdcdc" opacity="0.38"/><rect x="33.00" y="259.80" width="3.00" height="1.5" fill="#dcdcdc" opacity="0.38"/><rect x="37.20" y="259.80" width="7.00" height="1.5" fill="#dcdcdc" opacity="0.38"/><rect x="45.40" y="259.80" width="5.00" height="1.5" fill="#dcdcdc" opacity="0.38"/><rect x="51.60" y="259.80" width="3.00" height="1.5" fill="#dcdcdc" opacity="0.38"/><rect x="0.00" y="262.30" width="1.00" height="1.5" fill="#dcdcdc" opacity="0.38"/><rect x="0.00" y="267.30" width="4.00" height="1.5" fill="#569cd6" opacity="0.38"/><rect x="5.20" y="267.30" width="8.00" height="1.5" fill="#569cd6" opacity="0.38"/><rect x="14.40" y="267.30" width="3.00" height="1.5" fill="#dcdcdc" opacity="0.38"/><rect x="18.60" y="267.30" width="4.00" height="1.5" fill="#dcdcdc" opacity="0.38"/><rect x="23.80" y="267.30" width="4.00" height="1.5" fill="#dcdcdc" opacity="0.38"/><rect x="29.00" y="267.30" width="8.00" height="1.5" fill="#dcdcdc" opacity="0.38"/><rect x="38.20" y="267.30" width="1.00" height="1.5" fill="#dcdcdc" opacity="0.38"/><rect x="40.40" y="267.30" width="6.00" height="1.5" fill="#569cd6" opacity="0.38"/><rect x="47.60" y="267.30" width="7.00" height="1.5" fill="#dcdcdc" opacity="0.38"/><rect x="55.80" y="267.30" width="1.00" height="1.5" fill="#dcdcdc" opacity="0.38"/><rect x="58.00" y="267.30" width="8.00" height="1.5" fill="#4ec9b0" opacity="0.38"/><rect x="67.20" y="267.30" width="4.00" height="1.5" fill="#dcdcdc" opacity="0.38"/><rect x="0.00" y="269.80" width="1.00" height="1.5" fill="#dcdcdc" opacity="0.38"/><rect x="5.00" y="272.30" width="5.00" height="1.5" fill="#4ec9b0" opacity="0.38"/><rect x="11.20" y="272.30" width="5.00" height="1.5" fill="#4ec9b0" opacity="0.38"/><rect x="17.40" y="272.30" width="6.00" height="1.5" fill="#dcdcdc" opacity="0.38"/><rect x="24.60" y="272.30" width="4.00" height="1.5" fill="#dcdcdc" opacity="0.38"/><rect x="29.80" y="272.30" width="3.00" height="1.5" fill="#569cd6" opacity="0.38"/><rect x="34.00" y="272.30" width="6.00" height="1.5" fill="#4ec9b0" opacity="0.38"/><rect x="41.20" y="272.30" width="3.00" height="1.5" fill="#4ec9b0" opacity="0.38"/><rect x="45.40" y="272.30" width="5.00" height="1.5" fill="#4ec9b0" opacity="0.38"/><rect x="5.00" y="274.80" width="7.00" height="1.5" fill="#dcdcdc" opacity="0.38"/><rect x="13.20" y="274.80" width="3.00" height="1.5" fill="#dcdcdc" opacity="0.38"/><rect x="5.00" y="277.30" width="6.00" height="1.5" fill="#dcdcdc" opacity="0.38"/><rect x="0.00" y="279.80" width="1.00" height="1.5" fill="#dcdcdc" opacity="0.38"/><rect x="0.00" y="284.80" width="4.00" height="1.5" fill="#569cd6" opacity="0.38"/><rect x="5.20" y="284.80" width="4.00" height="1.5" fill="#4ec9b0" opacity="0.38"/><rect x="10.40" y="284.80" width="6.00" height="1.5" fill="#4ec9b0" opacity="0.38"/><rect x="17.60" y="284.80" width="2.00" height="1.5" fill="#4ec9b0" opacity="0.38"/><rect x="20.80" y="284.80" width="4.00" height="1.5" fill="#dcdcdc" opacity="0.38"/><rect x="26.00" y="284.80" width="5.00" height="1.5" fill="#569cd6" opacity="0.38"/><rect x="0.00" y="287.30" width="1.00" height="1.5" fill="#dcdcdc" opacity="0.38"/><rect x="5.00" y="289.80" width="6.00" height="1.5" fill="#569cd6" opacity="0.38"/><rect x="12.20" y="289.80" width="7.00" height="1.5" fill="#4ec9b0" opacity="0.38"/><rect x="20.40" y="289.80" width="5.00" height="1.5" fill="#4ec9b0" opacity="0.38"/><rect x="5.00" y="292.30" width="1.00" height="1.5" fill="#dcdcdc" opacity="0.38"/><rect x="10.00" y="294.80" width="4.00" height="1.5" fill="#569cd6" opacity="0.38"/><rect x="15.20" y="294.80" width="8.00" height="1.5" fill="#dcdcdc" opacity="0.38"/><rect x="24.40" y="294.80" width="6.00" height="1.5" fill="#dcdcdc" opacity="0.38"/><rect x="31.60" y="294.80" width="4.00" height="1.5" fill="#dcdcdc" opacity="0.38"/><rect x="36.80" y="294.80" width="4.00" height="1.5" fill="#dcdcdc" opacity="0.38"/><rect x="42.00" y="294.80" width="3.00" height="1.5" fill="#dcdcdc" opacity="0.38"/><rect x="46.20" y="294.80" width="5.00" height="1.5" fill="#dcdcdc" opacity="0.38"/><rect x="52.40" y="294.80" width="3.00" height="1.5" fill="#569cd6" opacity="0.38"/><rect x="56.60" y="294.80" width="6.00" height="1.5" fill="#dcdcdc" opacity="0.38"/><rect x="63.80" y="294.80" width="4.00" height="1.5" fill="#dcdcdc" opacity="0.38"/><rect x="10.00" y="297.30" width="4.00" height="1.5" fill="#569cd6" opacity="0.38"/><rect x="15.20" y="297.30" width="6.00" height="1.5" fill="#dcdcdc" opacity="0.38"/><rect x="22.40" y="297.30" width="7.00" height="1.5" fill="#dcdcdc" opacity="0.38"/><rect x="30.60" y="297.30" width="1.00" height="1.5" fill="#dcdcdc" opacity="0.38"/><rect x="32.80" y="297.30" width="3.00" height="1.5" fill="#569cd6" opacity="0.38"/><rect x="37.00" y="297.30" width="4.00" height="1.5" fill="#dcdcdc" opacity="0.38"/><rect x="42.20" y="297.30" width="4.00" height="1.5" fill="#dcdcdc" opacity="0.38"/><rect x="47.40" y="297.30" width="4.00" height="1.5" fill="#dcdcdc" opacity="0.38"/><rect x="52.60" y="297.30" width="4.00" height="1.5" fill="#4ec9b0" opacity="0.38"/><rect x="57.80" y="297.30" width="4.00" height="1.5" fill="#b5cea8" opacity="0.38"/><rect x="63.00" y="297.30" width="4.00" height="1.5" fill="#b5cea8" opacity="0.38"/><rect x="10.00" y="299.80" width="7.00" height="1.5" fill="#dcdcdc" opacity="0.38"/><rect x="18.20" y="299.80" width="7.00" height="1.5" fill="#dcdcdc" opacity="0.38"/><rect x="26.40" y="299.80" width="5.00" height="1.5" fill="#dcdcdc" opacity="0.38"/><rect x="32.60" y="299.80" width="1.00" height="1.5" fill="#dcdcdc" opacity="0.38"/><rect x="34.80" y="299.80" width="9.00" height="1.5" fill="#d69d85" opacity="0.38"/><rect x="45.00" y="299.80" width="8.00" height="1.5" fill="#d69d85" opacity="0.38"/><rect x="54.20" y="299.80" width="7.00" height="1.5" fill="#d69d85" opacity="0.38"/><rect x="62.40" y="299.80" width="9.00" height="1.5" fill="#d69d85" opacity="0.38"/><rect x="72.60" y="299.80" width="5.00" height="1.5" fill="#d69d85" opacity="0.38"/><rect x="78.80" y="299.80" width="8.00" height="1.5" fill="#d69d85" opacity="0.38"/><rect x="88.00" y="299.80" width="4.00" height="1.5" fill="#d69d85" opacity="0.38"/><rect x="10.00" y="302.30" width="9.00" height="1.5" fill="#dcdcdc" opacity="0.38"/><rect x="20.20" y="302.30" width="6.00" height="1.5" fill="#dcdcdc" opacity="0.38"/><rect x="27.40" y="302.30" width="7.00" height="1.5" fill="#dcdcdc" opacity="0.38"/><rect x="35.60" y="302.30" width="8.00" height="1.5" fill="#dcdcdc" opacity="0.38"/><rect x="10.00" y="304.80" width="7.00" height="1.5" fill="#dcdcdc" opacity="0.38"/><rect x="18.20" y="304.80" width="7.00" height="1.5" fill="#dcdcdc" opacity="0.38"/><rect x="26.40" y="304.80" width="5.00" height="1.5" fill="#dcdcdc" opacity="0.38"/><rect x="32.60" y="304.80" width="4.00" height="1.5" fill="#dcdcdc" opacity="0.38"/><rect x="37.80" y="304.80" width="5.00" height="1.5" fill="#dcdcdc" opacity="0.38"/><rect x="44.00" y="304.80" width="3.00" height="1.5" fill="#dcdcdc" opacity="0.38"/><rect x="48.20" y="304.80" width="5.00" height="1.5" fill="#dcdcdc" opacity="0.38"/><rect x="5.00" y="309.80" width="6.00" height="1.5" fill="#57a64a" opacity="0.38"/><rect x="12.20" y="309.80" width="9.00" height="1.5" fill="#57a64a" opacity="0.38"/><rect x="22.40" y="309.80" width="6.00" height="1.5" fill="#57a64a" opacity="0.38"/><rect x="29.60" y="309.80" width="1.00" height="1.5" fill="#57a64a" opacity="0.38"/><rect x="5.00" y="312.30" width="4.00" height="1.5" fill="#dcdcdc" opacity="0.38"/><rect x="10.20" y="312.30" width="7.00" height="1.5" fill="#dcdcdc" opacity="0.38"/><rect x="18.40" y="312.30" width="5.00" height="1.5" fill="#dcdcdc" opacity="0.38"/><rect x="24.60" y="312.30" width="4.00" height="1.5" fill="#dcdcdc" opacity="0.38"/><rect x="29.80" y="312.30" width="2.00" height="1.5" fill="#dcdcdc" opacity="0.38"/><rect x="33.00" y="312.30" width="3.00" height="1.5" fill="#569cd6" opacity="0.38"/><rect x="37.20" y="312.30" width="8.00" height="1.5" fill="#dcdcdc" opacity="0.38"/><rect x="5.00" y="314.80" width="9.00" height="1.5" fill="#dcdcdc" opacity="0.38"/><rect x="15.20" y="314.80" width="4.00" height="1.5" fill="#dcdcdc" opacity="0.38"/><rect x="20.40" y="314.80" width="5.00" height="1.5" fill="#dcdcdc" opacity="0.38"/><rect x="26.60" y="314.80" width="7.00" height="1.5" fill="#d69d85" opacity="0.38"/><rect x="5.00" y="317.30" width="6.00" height="1.5" fill="#dcdcdc" opacity="0.38"/><rect x="12.20" y="317.30" width="8.00" height="1.5" fill="#dcdcdc" opacity="0.38"/><rect x="21.40" y="317.30" width="7.00" height="1.5" fill="#dcdcdc" opacity="0.38"/><rect x="29.60" y="317.30" width="1.00" height="1.5" fill="#dcdcdc" opacity="0.38"/><rect x="31.80" y="317.30" width="3.00" height="1.5" fill="#569cd6" opacity="0.38"/><rect x="36.00" y="317.30" width="7.00" height="1.5" fill="#dcdcdc" opacity="0.38"/><rect x="44.20" y="317.30" width="7.00" height="1.5" fill="#dcdcdc" opacity="0.38"/><rect x="52.40" y="317.30" width="5.00" height="1.5" fill="#4ec9b0" opacity="0.38"/><rect x="58.60" y="317.30" width="8.00" height="1.5" fill="#b5cea8" opacity="0.38"/><rect x="67.80" y="317.30" width="1.00" height="1.5" fill="#b5cea8" opacity="0.38"/><rect x="5.00" y="319.80" width="3.00" height="1.5" fill="#dcdcdc" opacity="0.38"/><rect x="9.20" y="319.80" width="6.00" height="1.5" fill="#dcdcdc" opacity="0.38"/><rect x="16.40" y="319.80" width="8.00" height="1.5" fill="#dcdcdc" opacity="0.38"/><rect x="25.60" y="319.80" width="1.00" height="1.5" fill="#dcdcdc" opacity="0.38"/><rect x="27.80" y="319.80" width="3.00" height="1.5" fill="#569cd6" opacity="0.38"/><rect x="32.00" y="319.80" width="6.00" height="1.5" fill="#dcdcdc" opacity="0.38"/><rect x="39.20" y="319.80" width="8.00" height="1.5" fill="#dcdcdc" opacity="0.38"/><rect x="48.40" y="319.80" width="4.00" height="1.5" fill="#4ec9b0" opacity="0.38"/><rect x="53.60" y="319.80" width="3.00" height="1.5" fill="#b5cea8" opacity="0.38"/><rect x="57.80" y="319.80" width="3.00" height="1.5" fill="#b5cea8" opacity="0.38"/><rect x="5.00" y="322.30" width="4.00" height="1.5" fill="#569cd6" opacity="0.38"/><rect x="10.20" y="322.30" width="4.00" height="1.5" fill="#dcdcdc" opacity="0.38"/><rect x="15.40" y="322.30" width="8.00" height="1.5" fill="#dcdcdc" opacity="0.38"/><rect x="24.60" y="322.30" width="8.00" height="1.5" fill="#dcdcdc" opacity="0.38"/><rect x="33.80" y="322.30" width="4.00" height="1.5" fill="#dcdcdc" opacity="0.38"/><rect x="0.00" y="327.30" width="8.00" height="1.5" fill="#569cd6" opacity="0.38"/><rect x="9.20" y="327.30" width="3.00" height="1.5" fill="#569cd6" opacity="0.38"/><rect x="13.40" y="327.30" width="1.00" height="1.5" fill="#569cd6" opacity="0.38"/><rect x="15.60" y="327.30" width="9.00" height="1.5" fill="#dcdcdc" opacity="0.38"/><rect x="25.80" y="327.30" width="5.00" height="1.5" fill="#dcdcdc" opacity="0.38"/><rect x="32.00" y="327.30" width="4.00" height="1.5" fill="#dcdcdc" opacity="0.38"/><rect x="37.20" y="327.30" width="2.00" height="1.5" fill="#dcdcdc" opacity="0.38"/><rect x="40.40" y="327.30" width="6.00" height="1.5" fill="#569cd6" opacity="0.38"/><rect x="47.60" y="327.30" width="5.00" height="1.5" fill="#dcdcdc" opacity="0.38"/><rect x="53.80" y="327.30" width="3.00" height="1.5" fill="#dcdcdc" opacity="0.38"/><rect x="58.00" y="327.30" width="4.00" height="1.5" fill="#4ec9b0" opacity="0.38"/><rect x="63.20" y="327.30" width="4.00" height="1.5" fill="#4ec9b0" opacity="0.38"/><rect x="68.40" y="327.30" width="4.00" height="1.5" fill="#dcdcdc" opacity="0.38"/><rect x="0.00" y="329.80" width="1.00" height="1.5" fill="#dcdcdc" opacity="0.38"/><rect x="5.00" y="332.30" width="9.00" height="1.5" fill="#4ec9b0" opacity="0.38"/><rect x="15.20" y="332.30" width="1.00" height="1.5" fill="#4ec9b0" opacity="0.38"/><rect x="17.40" y="332.30" width="5.00" height="1.5" fill="#dcdcdc" opacity="0.38"/><rect x="23.60" y="332.30" width="4.00" height="1.5" fill="#dcdcdc" opacity="0.38"/><rect x="28.80" y="332.30" width="1.00" height="1.5" fill="#dcdcdc" opacity="0.38"/><rect x="31.00" y="332.30" width="3.00" height="1.5" fill="#569cd6" opacity="0.38"/><rect x="35.20" y="332.30" width="5.00" height="1.5" fill="#4ec9b0" opacity="0.38"/><rect x="41.40" y="332.30" width="4.00" height="1.5" fill="#4ec9b0" opacity="0.38"/><rect x="46.60" y="332.30" width="5.00" height="1.5" fill="#4ec9b0" opacity="0.38"/><rect x="5.00" y="334.80" width="3.00" height="1.5" fill="#dcdcdc" opacity="0.38"/><rect x="9.20" y="334.80" width="7.00" height="1.5" fill="#dcdcdc" opacity="0.38"/><rect x="5.00" y="337.30" width="6.00" height="1.5" fill="#dcdcdc" opacity="0.38"/><rect x="0.00" y="339.80" width="1.00" height="1.5" fill="#dcdcdc" opacity="0.38"/><rect x="0.00" y="347.30" width="3.00" height="1.5" fill="#569cd6" opacity="0.38"/><rect x="4.20" y="347.30" width="3.00" height="1.5" fill="#569cd6" opacity="0.38"/><rect x="8.40" y="347.30" width="5.00" height="1.5" fill="#dcdcdc" opacity="0.38"/><rect x="14.60" y="347.30" width="9.00" height="1.5" fill="#dcdcdc" opacity="0.38"/><rect x="24.80" y="347.30" width="5.00" height="1.5" fill="#dcdcdc" opacity="0.38"/><rect x="31.00" y="347.30" width="3.00" height="1.5" fill="#dcdcdc" opacity="0.38"/><rect x="35.20" y="347.30" width="4.00" height="1.5" fill="#dcdcdc" opacity="0.38"/><rect x="40.40" y="347.30" width="6.00" height="1.5" fill="#4ec9b0" opacity="0.38"/><rect x="47.60" y="347.30" width="4.00" height="1.5" fill="#4ec9b0" opacity="0.38"/><rect x="52.80" y="347.30" width="8.00" height="1.5" fill="#dcdcdc" opacity="0.38"/><rect x="62.00" y="347.30" width="2.00" height="1.5" fill="#dcdcdc" opacity="0.38"/><rect x="65.20" y="347.30" width="4.00" height="1.5" fill="#569cd6" opacity="0.38"/><rect x="0.00" y="349.80" width="3.00" height="1.5" fill="#57a64a" opacity="0.38"/><rect x="4.20" y="349.80" width="3.00" height="1.5" fill="#57a64a" opacity="0.38"/><rect x="8.40" y="349.80" width="4.00" height="1.5" fill="#57a64a" opacity="0.38"/><rect x="0.00" y="352.30" width="5.00" height="1.5" fill="#57a64a" opacity="0.38"/><rect x="6.20" y="352.30" width="6.00" height="1.5" fill="#57a64a" opacity="0.38"/><rect x="13.40" y="352.30" width="6.00" height="1.5" fill="#57a64a" opacity="0.38"/><rect x="20.60" y="352.30" width="5.00" height="1.5" fill="#57a64a" opacity="0.38"/><rect x="0.00" y="354.80" width="3.00" height="1.5" fill="#57a64a" opacity="0.38"/><rect x="4.20" y="354.80" width="4.00" height="1.5" fill="#57a64a" opacity="0.38"/><rect x="9.40" y="354.80" width="3.00" height="1.5" fill="#57a64a" opacity="0.38"/><rect x="0.00" y="357.30" width="7.00" height="1.5" fill="#57a64a" opacity="0.38"/><rect x="8.20" y="357.30" width="8.00" height="1.5" fill="#57a64a" opacity="0.38"/><rect x="17.40" y="357.30" width="6.00" height="1.5" fill="#57a64a" opacity="0.38"/><rect x="24.60" y="357.30" width="6.00" height="1.5" fill="#57a64a" opacity="0.38"/><rect x="31.80" y="357.30" width="4.00" height="1.5" fill="#57a64a" opacity="0.38"/><rect x="37.00" y="357.30" width="7.00" height="1.5" fill="#57a64a" opacity="0.38"/><rect x="45.20" y="357.30" width="5.00" height="1.5" fill="#57a64a" opacity="0.38"/><rect x="51.40" y="357.30" width="3.00" height="1.5" fill="#57a64a" opacity="0.38"/><rect x="55.60" y="357.30" width="5.00" height="1.5" fill="#57a64a" opacity="0.38"/><rect x="61.80" y="357.30" width="3.00" height="1.5" fill="#57a64a" opacity="0.38"/><rect x="66.00" y="357.30" width="6.00" height="1.5" fill="#57a64a" opacity="0.38"/><rect x="0.00" y="359.80" width="6.00" height="1.5" fill="#569cd6" opacity="0.38"/><rect x="7.20" y="359.80" width="3.00" height="1.5" fill="#569cd6" opacity="0.38"/><rect x="11.40" y="359.80" width="6.00" height="1.5" fill="#569cd6" opacity="0.38"/><rect x="18.60" y="359.80" width="1.00" height="1.5" fill="#569cd6" opacity="0.38"/><rect x="20.80" y="359.80" width="5.00" height="1.5" fill="#569cd6" opacity="0.38"/><rect x="27.00" y="359.80" width="3.00" height="1.5" fill="#4ec9b0" opacity="0.38"/><rect x="31.20" y="359.80" width="7.00" height="1.5" fill="#4ec9b0" opacity="0.38"/><rect x="39.40" y="359.80" width="2.00" height="1.5" fill="#4ec9b0" opacity="0.38"/><rect x="42.60" y="359.80" width="5.00" height="1.5" fill="#dcdcdc" opacity="0.38"/><rect x="48.80" y="359.80" width="5.00" height="1.5" fill="#dcdcdc" opacity="0.38"/><rect x="5.00" y="362.30" width="9.00" height="1.5" fill="#57a64a" opacity="0.38"/><rect x="15.20" y="362.30" width="5.00" height="1.5" fill="#57a64a" opacity="0.38"/><rect x="21.40" y="362.30" width="9.00" height="1.5" fill="#dcdcdc" opacity="0.38"/><rect x="31.60" y="362.30" width="6.00" height="1.5" fill="#dcdcdc" opacity="0.38"/><rect x="38.80" y="362.30" width="1.00" height="1.5" fill="#dcdcdc" opacity="0.38"/><rect x="41.00" y="362.30" width="6.00" height="1.5" fill="#569cd6" opacity="0.38"/><rect x="5.00" y="364.80" width="2.00" height="1.5" fill="#dcdcdc" opacity="0.38"/><rect x="10.00" y="367.30" width="8.00" height="1.5" fill="#dcdcdc" opacity="0.38"/><rect x="19.20" y="367.30" width="8.00" height="1.5" fill="#dcdcdc" opacity="0.38"/><rect x="28.40" y="367.30" width="6.00" height="1.5" fill="#dcdcdc" opacity="0.38"/><rect x="5.00" y="369.80" width="2.00" height="1.5" fill="#dcdcdc" opacity="0.38"/><rect x="5.00" y="372.30" width="5.00" height="1.5" fill="#569cd6" opacity="0.38"/><rect x="11.20" y="372.30" width="1.00" height="1.5" fill="#569cd6" opacity="0.38"/><rect x="13.40" y="372.30" width="9.00" height="1.5" fill="#dcdcdc" opacity="0.38"/><rect x="23.60" y="372.30" width="5.00" height="1.5" fill="#dcdcdc" opacity="0.38"/><rect x="29.80" y="372.30" width="2.00" height="1.5" fill="#dcdcdc" opacity="0.38"/><rect x="0.00" y="374.80" width="1.00" height="1.5" fill="#dcdcdc" opacity="0.38"/><rect x="0.00" y="377.30" width="7.00" height="1.5" fill="#57a64a" opacity="0.38"/><rect x="8.20" y="377.30" width="7.00" height="1.5" fill="#57a64a" opacity="0.38"/><rect x="16.40" y="377.30" width="3.00" height="1.5" fill="#57a64a" opacity="0.38"/><rect x="20.60" y="377.30" width="8.00" height="1.5" fill="#57a64a" opacity="0.38"/><rect x="29.80" y="377.30" width="5.00" height="1.5" fill="#57a64a" opacity="0.38"/><rect x="0.00" y="379.80" width="7.00" height="1.5" fill="#569cd6" opacity="0.38"/><rect x="8.20" y="379.80" width="3.00" height="1.5" fill="#569cd6" opacity="0.38"/><rect x="12.40" y="379.80" width="3.00" height="1.5" fill="#dcdcdc" opacity="0.38"/><rect x="16.60" y="379.80" width="8.00" height="1.5" fill="#dcdcdc" opacity="0.38"/><rect x="25.80" y="379.80" width="5.00" height="1.5" fill="#dcdcdc" opacity="0.38"/><rect x="32.00" y="379.80" width="2.00" height="1.5" fill="#dcdcdc" opacity="0.38"/><rect x="0.00" y="382.30" width="1.00" height="1.5" fill="#dcdcdc" opacity="0.38"/><rect x="5.00" y="384.80" width="4.00" height="1.5" fill="#569cd6" opacity="0.38"/><rect x="10.20" y="384.80" width="8.00" height="1.5" fill="#dcdcdc" opacity="0.38"/><rect x="19.40" y="384.80" width="4.00" height="1.5" fill="#dcdcdc" opacity="0.38"/><rect x="24.60" y="384.80" width="4.00" height="1.5" fill="#dcdcdc" opacity="0.38"/><rect x="29.80" y="384.80" width="3.00" height="1.5" fill="#569cd6" opacity="0.38"/><rect x="34.00" y="384.80" width="8.00" height="1.5" fill="#dcdcdc" opacity="0.38"/><rect x="43.20" y="384.80" width="8.00" height="1.5" fill="#dcdcdc" opacity="0.38"/><rect x="52.40" y="384.80" width="4.00" height="1.5" fill="#dcdcdc" opacity="0.38"/><rect x="57.60" y="384.80" width="4.00" height="1.5" fill="#4ec9b0" opacity="0.38"/><rect x="62.80" y="384.80" width="5.00" height="1.5" fill="#4ec9b0" opacity="0.38"/><rect x="5.00" y="387.30" width="4.00" height="1.5" fill="#569cd6" opacity="0.38"/><rect x="10.20" y="387.30" width="6.00" height="1.5" fill="#dcdcdc" opacity="0.38"/><rect x="17.40" y="387.30" width="3.00" height="1.5" fill="#dcdcdc" opacity="0.38"/><rect x="21.60" y="387.30" width="3.00" height="1.5" fill="#dcdcdc" opacity="0.38"/><rect x="25.80" y="387.30" width="7.00" height="1.5" fill="#dcdcdc" opacity="0.38"/><rect x="34.00" y="387.30" width="4.00" height="1.5" fill="#dcdcdc" opacity="0.38"/><rect x="39.20" y="387.30" width="5.00" height="1.5" fill="#dcdcdc" opacity="0.38"/><rect x="45.40" y="387.30" width="8.00" height="1.5" fill="#dcdcdc" opacity="0.38"/><rect x="54.60" y="387.30" width="8.00" height="1.5" fill="#dcdcdc" opacity="0.38"/><rect x="63.80" y="387.30" width="6.00" height="1.5" fill="#dcdcdc" opacity="0.38"/><rect x="5.00" y="389.80" width="4.00" height="1.5" fill="#569cd6" opacity="0.38"/><rect x="10.20" y="389.80" width="6.00" height="1.5" fill="#dcdcdc" opacity="0.38"/><rect x="17.40" y="389.80" width="7.00" height="1.5" fill="#dcdcdc" opacity="0.38"/><rect x="25.60" y="389.80" width="1.00" height="1.5" fill="#dcdcdc" opacity="0.38"/><rect x="27.80" y="389.80" width="3.00" height="1.5" fill="#569cd6" opacity="0.38"/><rect x="32.00" y="389.80" width="4.00" height="1.5" fill="#dcdcdc" opacity="0.38"/><rect x="37.20" y="389.80" width="6.00" height="1.5" fill="#dcdcdc" opacity="0.38"/><rect x="44.40" y="389.80" width="2.00" height="1.5" fill="#dcdcdc" opacity="0.38"/><rect x="47.60" y="389.80" width="4.00" height="1.5" fill="#4ec9b0" opacity="0.38"/><rect x="52.80" y="389.80" width="8.00" height="1.5" fill="#b5cea8" opacity="0.38"/><rect x="5.00" y="392.30" width="4.00" height="1.5" fill="#569cd6" opacity="0.38"/><rect x="10.20" y="392.30" width="8.00" height="1.5" fill="#dcdcdc" opacity="0.38"/><rect x="19.40" y="392.30" width="3.00" height="1.5" fill="#dcdcdc" opacity="0.38"/><rect x="23.60" y="392.30" width="1.00" height="1.5" fill="#dcdcdc" opacity="0.38"/><rect x="25.80" y="392.30" width="7.00" height="1.5" fill="#d69d85" opacity="0.38"/><rect x="5.00" y="397.30" width="4.00" height="1.5" fill="#57a64a" opacity="0.38"/><rect x="10.20" y="397.30" width="9.00" height="1.5" fill="#57a64a" opacity="0.38"/><rect x="20.40" y="397.30" width="7.00" height="1.5" fill="#57a64a" opacity="0.38"/><rect x="28.60" y="397.30" width="2.00" height="1.5" fill="#57a64a" opacity="0.38"/><rect x="5.00" y="399.80" width="7.00" height="1.5" fill="#dcdcdc" opacity="0.38"/><rect x="13.20" y="399.80" width="8.00" height="1.5" fill="#dcdcdc" opacity="0.38"/><rect x="22.40" y="399.80" width="6.00" height="1.5" fill="#dcdcdc" opacity="0.38"/><rect x="29.60" y="399.80" width="1.00" height="1.5" fill="#dcdcdc" opacity="0.38"/><rect x="31.80" y="399.80" width="3.00" height="1.5" fill="#569cd6" opacity="0.38"/><rect x="36.00" y="399.80" width="5.00" height="1.5" fill="#dcdcdc" opacity="0.38"/><rect x="42.20" y="399.80" width="3.00" height="1.5" fill="#dcdcdc" opacity="0.38"/><rect x="5.00" y="402.30" width="6.00" height="1.5" fill="#dcdcdc" opacity="0.38"/><rect x="12.20" y="402.30" width="3.00" height="1.5" fill="#dcdcdc" opacity="0.38"/><rect x="16.40" y="402.30" width="9.00" height="1.5" fill="#dcdcdc" opacity="0.38"/><rect x="26.60" y="402.30" width="4.00" height="1.5" fill="#d69d85" opacity="0.38"/><rect x="31.80" y="402.30" width="3.00" height="1.5" fill="#d69d85" opacity="0.38"/><rect x="5.00" y="404.80" width="6.00" height="1.5" fill="#dcdcdc" opacity="0.38"/><rect x="12.20" y="404.80" width="7.00" height="1.5" fill="#dcdcdc" opacity="0.38"/><rect x="20.40" y="404.80" width="5.00" height="1.5" fill="#dcdcdc" opacity="0.38"/><rect x="26.60" y="404.80" width="4.00" height="1.5" fill="#dcdcdc" opacity="0.38"/><rect x="31.80" y="404.80" width="3.00" height="1.5" fill="#569cd6" opacity="0.38"/><rect x="36.00" y="404.80" width="9.00" height="1.5" fill="#dcdcdc" opacity="0.38"/><rect x="46.20" y="404.80" width="5.00" height="1.5" fill="#dcdcdc" opacity="0.38"/><rect x="52.40" y="404.80" width="5.00" height="1.5" fill="#4ec9b0" opacity="0.38"/><rect x="58.60" y="404.80" width="5.00" height="1.5" fill="#b5cea8" opacity="0.38"/><rect x="64.80" y="404.80" width="4.00" height="1.5" fill="#b5cea8" opacity="0.38"/><rect x="5.00" y="407.30" width="6.00" height="1.5" fill="#dcdcdc" opacity="0.38"/><rect x="12.20" y="407.30" width="7.00" height="1.5" fill="#dcdcdc" opacity="0.38"/><rect x="20.40" y="407.30" width="5.00" height="1.5" fill="#dcdcdc" opacity="0.38"/><rect x="26.60" y="407.30" width="3.00" height="1.5" fill="#569cd6" opacity="0.38"/><rect x="30.80" y="407.30" width="3.00" height="1.5" fill="#dcdcdc" opacity="0.38"/><rect x="35.00" y="407.30" width="5.00" height="1.5" fill="#dcdcdc" opacity="0.38"/><rect x="41.20" y="407.30" width="6.00" height="1.5" fill="#dcdcdc" opacity="0.38"/><rect x="48.40" y="407.30" width="4.00" height="1.5" fill="#4ec9b0" opacity="0.38"/><rect x="53.60" y="407.30" width="3.00" height="1.5" fill="#b5cea8" opacity="0.38"/><rect x="57.80" y="407.30" width="3.00" height="1.5" fill="#b5cea8" opacity="0.38"/><rect x="5.00" y="409.80" width="5.00" height="1.5" fill="#dcdcdc" opacity="0.38"/><rect x="11.20" y="409.80" width="7.00" height="1.5" fill="#dcdcdc" opacity="0.38"/><rect x="19.40" y="409.80" width="3.00" height="1.5" fill="#dcdcdc" opacity="0.38"/><rect x="23.60" y="409.80" width="8.00" height="1.5" fill="#dcdcdc" opacity="0.38"/><rect x="32.80" y="409.80" width="3.00" height="1.5" fill="#dcdcdc" opacity="0.38"/><rect x="37.00" y="409.80" width="7.00" height="1.5" fill="#dcdcdc" opacity="0.38"/><rect x="45.20" y="409.80" width="1.00" height="1.5" fill="#dcdcdc" opacity="0.38"/><rect x="5.00" y="412.30" width="4.00" height="1.5" fill="#569cd6" opacity="0.38"/><rect x="10.20" y="412.30" width="3.00" height="1.5" fill="#dcdcdc" opacity="0.38"/><rect x="14.40" y="412.30" width="4.00" height="1.5" fill="#dcdcdc" opacity="0.38"/><rect x="19.60" y="412.30" width="8.00" height="1.5" fill="#dcdcdc" opacity="0.38"/><rect x="28.80" y="412.30" width="4.00" height="1.5" fill="#dcdcdc" opacity="0.38"/><rect x="34.00" y="412.30" width="5.00" height="1.5" fill="#dcdcdc" opacity="0.38"/><rect x="5.00" y="417.30" width="6.00" height="1.5" fill="#57a64a" opacity="0.38"/><rect x="12.20" y="417.30" width="8.00" height="1.5" fill="#57a64a" opacity="0.38"/><rect x="21.40" y="417.30" width="8.00" height="1.5" fill="#57a64a" opacity="0.38"/><rect x="5.00" y="419.80" width="6.00" height="1.5" fill="#57a64a" opacity="0.38"/><rect x="12.20" y="419.80" width="9.00" height="1.5" fill="#57a64a" opacity="0.38"/><rect x="22.40" y="419.80" width="8.00" height="1.5" fill="#57a64a" opacity="0.38"/><rect x="31.60" y="419.80" width="4.00" height="1.5" fill="#57a64a" opacity="0.38"/><rect x="36.80" y="419.80" width="7.00" height="1.5" fill="#57a64a" opacity="0.38"/><rect x="45.00" y="419.80" width="7.00" height="1.5" fill="#57a64a" opacity="0.38"/><rect x="53.20" y="419.80" width="4.00" height="1.5" fill="#57a64a" opacity="0.38"/><rect x="58.40" y="419.80" width="9.00" height="1.5" fill="#57a64a" opacity="0.38"/><rect x="68.60" y="419.80" width="6.00" height="1.5" fill="#57a64a" opacity="0.38"/><rect x="75.80" y="419.80" width="9.00" height="1.5" fill="#57a64a" opacity="0.38"/><rect x="86.00" y="419.80" width="4.00" height="1.5" fill="#57a64a" opacity="0.38"/><rect x="91.20" y="419.80" width="1.00" height="1.5" fill="#57a64a" opacity="0.38"/><rect x="5.00" y="422.30" width="7.00" height="1.5" fill="#dcdcdc" opacity="0.38"/><rect x="13.20" y="422.30" width="4.00" height="1.5" fill="#dcdcdc" opacity="0.38"/><rect x="18.40" y="422.30" width="7.00" height="1.5" fill="#dcdcdc" opacity="0.38"/><rect x="26.60" y="422.30" width="4.00" height="1.5" fill="#dcdcdc" opacity="0.38"/><rect x="31.80" y="422.30" width="4.00" height="1.5" fill="#dcdcdc" opacity="0.38"/><rect x="37.00" y="422.30" width="9.00" height="1.5" fill="#dcdcdc" opacity="0.38"/><rect x="47.20" y="422.30" width="1.00" height="1.5" fill="#dcdcdc" opacity="0.38"/><rect x="49.40" y="422.30" width="5.00" height="1.5" fill="#d69d85" opacity="0.38"/><rect x="55.60" y="422.30" width="9.00" height="1.5" fill="#d69d85" opacity="0.38"/><rect x="65.80" y="422.30" width="5.00" height="1.5" fill="#d69d85" opacity="0.38"/><rect x="72.00" y="422.30" width="3.00" height="1.5" fill="#d69d85" opacity="0.38"/><rect x="76.20" y="422.30" width="9.00" height="1.5" fill="#d69d85" opacity="0.38"/><rect x="86.40" y="422.30" width="9.00" height="1.5" fill="#d69d85" opacity="0.38"/><rect x="96.60" y="422.30" width="4.00" height="1.5" fill="#d69d85" opacity="0.38"/><rect x="5.00" y="424.80" width="6.00" height="1.5" fill="#57a64a" opacity="0.38"/><rect x="12.20" y="424.80" width="9.00" height="1.5" fill="#57a64a" opacity="0.38"/><rect x="22.40" y="424.80" width="6.00" height="1.5" fill="#57a64a" opacity="0.38"/><rect x="29.60" y="424.80" width="5.00" height="1.5" fill="#57a64a" opacity="0.38"/><rect x="5.00" y="427.30" width="4.00" height="1.5" fill="#569cd6" opacity="0.38"/><rect x="10.20" y="427.30" width="7.00" height="1.5" fill="#dcdcdc" opacity="0.38"/><rect x="18.40" y="427.30" width="5.00" height="1.5" fill="#dcdcdc" opacity="0.38"/><rect x="24.60" y="427.30" width="8.00" height="1.5" fill="#dcdcdc" opacity="0.38"/><rect x="33.80" y="427.30" width="6.00" height="1.5" fill="#dcdcdc" opacity="0.38"/><rect x="41.00" y="427.30" width="2.00" height="1.5" fill="#dcdcdc" opacity="0.38"/><rect x="5.00" y="429.80" width="8.00" height="1.5" fill="#57a64a" opacity="0.38"/><rect x="14.20" y="429.80" width="8.00" height="1.5" fill="#57a64a" opacity="0.38"/><rect x="23.40" y="429.80" width="5.00" height="1.5" fill="#57a64a" opacity="0.38"/><rect x="29.60" y="429.80" width="9.00" height="1.5" fill="#57a64a" opacity="0.38"/><rect x="5.00" y="432.30" width="4.00" height="1.5" fill="#569cd6" opacity="0.38"/><rect x="10.20" y="432.30" width="6.00" height="1.5" fill="#dcdcdc" opacity="0.38"/><rect x="17.40" y="432.30" width="3.00" height="1.5" fill="#dcdcdc" opacity="0.38"/><rect x="21.60" y="432.30" width="7.00" height="1.5" fill="#dcdcdc" opacity="0.38"/><rect x="29.80" y="432.30" width="4.00" height="1.5" fill="#dcdcdc" opacity="0.38"/><rect x="35.00" y="432.30" width="8.00" height="1.5" fill="#dcdcdc" opacity="0.38"/><rect x="44.20" y="432.30" width="8.00" height="1.5" fill="#dcdcdc" opacity="0.38"/><rect x="0.00" y="434.80" width="1.00" height="1.5" fill="#dcdcdc" opacity="0.38"/><rect x="0.00" y="439.80" width="3.00" height="1.5" fill="#569cd6" opacity="0.38"/><rect x="4.20" y="439.80" width="9.00" height="1.5" fill="#569cd6" opacity="0.38"/><rect x="14.40" y="439.80" width="9.00" height="1.5" fill="#dcdcdc" opacity="0.38"/><rect x="24.60" y="439.80" width="8.00" height="1.5" fill="#dcdcdc" opacity="0.38"/><rect x="33.80" y="439.80" width="3.00" height="1.5" fill="#dcdcdc" opacity="0.38"/><rect x="38.00" y="439.80" width="6.00" height="1.5" fill="#569cd6" opacity="0.38"/><rect x="45.20" y="439.80" width="4.00" height="1.5" fill="#dcdcdc" opacity="0.38"/><rect x="50.40" y="439.80" width="4.00" height="1.5" fill="#dcdcdc" opacity="0.38"/><rect x="55.60" y="439.80" width="8.00" height="1.5" fill="#4ec9b0" opacity="0.38"/><rect x="64.80" y="439.80" width="4.00" height="1.5" fill="#dcdcdc" opacity="0.38"/></svg>
<div class="t" style="left:1791.00px;top:146.00px;font-size:12px;color:#e0e0e0;font-family:'Liberation Sans', sans-serif;transform:scaleX(1.0091);transform-origin:0px 0;font-weight:bold;text-shadow:0 0 2px #1e1e1e,0 0 3px #1e1e1e;">Windows…ed code</div>
<div style="position:absolute;left:1903px;top:116px;width:1px;height:444px;background:#2b2b2b;"></div>
<div style="position:absolute;left:1904px;top:167px;width:16px;height:2px;background:#9a9a9a;"></div>
<div style="position:absolute;left:273px;top:560px;width:1647px;height:433px;background:#1e1e1e;"></div>
<div style="position:absolute;left:273px;top:560px;width:1647px;height:1px;background:#414141;"></div>
<div class="t" style="left:297.60px;top:576.00px;font-size:14px;color:#969696;font-family:'Liberation Sans', sans-serif;transform:scaleX(0.8551);transform-origin:0px 0;">PROBLEMS</div>
<div class="t" style="left:394.80px;top:576.00px;font-size:14px;color:#969696;font-family:'Liberation Sans', sans-serif;transform:scaleX(0.8828);transform-origin:0px 0;">OUTPUT</div>
<div class="t" style="left:476.50px;top:576.00px;font-size:14px;color:#969696;font-family:'Liberation Sans', sans-serif;transform:scaleX(0.8730);transform-origin:0px 0;">DEBUG CONSOLE</div>
<div class="t" style="left:613.00px;top:576.00px;font-size:14px;color:#e7e7e7;font-family:'Liberation Sans', sans-serif;transform:scaleX(0.9014);transform-origin:0px 0;">TERMINAL</div>
<div class="t" style="left:707.30px;top:576.00px;font-size:14px;color:#969696;font-family:'Liberation Sans', sans-serif;transform:scaleX(0.8271);transform-origin:0px 0;">PORTS</div>
<div style="position:absolute;left:611px;top:595.5px;width:69px;height:1.5px;background:#e7e7e7;"></div>
<svg style="left:1803px;top:581px" width="17" height="4" viewBox="0 0 17 4"><circle cx="2" cy="2" r="1.5" fill="#cccccc"/><circle cx="8.5" cy="2" r="1.5" fill="#cccccc"/><circle cx="15" cy="2" r="1.5" fill="#cccccc"/></svg>
<div style="position:absolute;left:1834px;top:572px;width:1px;height:20px;background:#555555;"></div>
<svg style="left:1851px;top:574px" width="16" height="16" viewBox="0 0 16 16"><path d="M0.8 4.8V2 C0.8 1.3 1.3 0.8 2 0.8 H4.8 M11.2 0.8H14 C14.7 0.8 15.2 1.3 15.2 2 V4.8 M15.2 11.2V14 C15.2 14.7 14.7 15.2 14 15.2 H11.2 M4.8 15.2H2 C1.3 15.2 0.8 14.7 0.8 14 V11.2" stroke="#cccccc" stroke-width="1.6" fill="none"/></svg>
<svg style="left:1885.5px;top:576px" width="12" height="12" viewBox="0 0 12 12"><path d="M0.6 0.6L11.4 11.4M11.4 0.6L0.6 11.4" stroke="#cccccc" stroke-width="1.5"/></svg>
<div class="a" style="left:280.5px;top:624.5px;width:11px;height:11px;border-radius:6px;background:#2f93c9;"></div>
<div class="a" style="left:280.5px;top:646.5px;width:11px;height:11px;border-radius:6px;border:2px solid #707070;box-sizing:border-box;"></div>
<div class="t" style="left:297.5px;top:626px;font-family:'Liberation Mono', monospace;font-size:15px;color:#cccccc;">PS C:\NavigationOfSoltrianius&gt; <span style="color:#e5e510">cd</span> NavigationOfSoltrianius</div>
<div class="t" style="left:297.5px;top:648px;font-family:'Liberation Mono', monospace;font-size:15px;color:#cccccc;">PS C:\NavigationOfSoltrianius\NavigationOfSoltrianius&gt; <span style="color:#e5e510">dotnet</span> run</div>
<div style="position:absolute;left:298px;top:663.5px;width:10px;height:21px;border:1.3px solid #e0e0e0;box-sizing:border-box;"></div>
<div style="position:absolute;left:1903px;top:618px;width:1px;height:375px;background:#2b2b2b;"></div>
<div style="position:absolute;left:1904px;top:619px;width:5px;height:8px;background:#2f93c9;"></div>
<div style="position:absolute;left:1904px;top:619px;width:16px;height:1px;background:#3a3a3a;"></div>
<div style="position:absolute;left:1904px;top:633px;width:5px;height:15px;background:#5a5a5a;"></div>
<div style="position:absolute;left:0px;top:993px;width:1920px;height:26px;background:#007acc;"></div>
<div style="position:absolute;left:0px;top:993px;width:43px;height:26px;background:#16825d;"></div>
<svg style="left:0;top:993px" width="43" height="26" viewBox="0 993 43 26"><path d="M15.8 1003.2L21.2 1007.9L15.8 1012.6 M26.8 998.2L21.7 1003.4L26.8 1007.9" stroke="#fff" stroke-width="1.35" fill="none"/></svg>
<svg style="left:54px;top:997.4px" width="15" height="17" viewBox="0 0 15 17"><circle cx="3" cy="2.8" r="2.1" fill="none" stroke="#fff" stroke-width="1.4"/><circle cx="3" cy="14.2" r="2.1" fill="none" stroke="#fff" stroke-width="1.4"/><circle cx="12" cy="4.8" r="2.1" fill="none" stroke="#fff" stroke-width="1.4"/><path d="M3 4.9V12.1 M12 6.9C12 9.8 8.5 10.5 4.5 12.6" fill="none" stroke="#fff" stroke-width="1.4"/></svg>
<div class="t" style="left:74.40px;top:999.00px;font-size:15.5px;color:#ffffff;font-family:'Liberation Sans', sans-serif;transform:scaleX(0.9600);transform-origin:0px 0;">main*</div>
<svg style="left:121px;top:999.5px" width="18" height="14" viewBox="0 0 18 14"><path d="M2.5 7.5A6.3 6.3 0 0 1 14.2 4.2 M15.5 6.5A6.3 6.3 0 0 1 3.8 9.8 M15 1V4.8H11.2 M3 13V9.2H6.8" fill="none" stroke="#fff" stroke-width="1.5"/></svg>
<svg style="left:159px;top:999px" width="15" height="15" viewBox="0 0 15 15"><circle cx="7.5" cy="7.5" r="6.6" fill="none" stroke="#fff" stroke-width="1.4"/><path d="M4.8 4.8L10.2 10.2M10.2 4.8L4.8 10.2" stroke="#fff" stroke-width="1.4"/></svg>
<div class="t" style="left:180.30px;top:999.00px;font-size:15.5px;color:#ffffff;font-family:'Liberation Sans', sans-serif;transform:scaleX(0.7889);transform-origin:0px 0;">0</div>
<svg style="left:193px;top:998.5px" width="16" height="15" viewBox="0 0 16 15"><path d="M8 1L15.2 14H0.8Z" fill="none" stroke="#fff" stroke-width="1.4" stroke-linejoin="round"/><path d="M8 5.2V9.8 M8 11V12.6" stroke="#fff" stroke-width="1.5"/></svg>
<div class="t" style="left:214.30px;top:999.00px;font-size:15.5px;color:#ffffff;font-family:'Liberation Sans', sans-serif;transform:scaleX(0.7889);transform-origin:0px 0;">0</div>
<div class="t" style="left:242.30px;top:999.00px;font-size:15.5px;color:#ffffff;font-family:'Liberation Sans', sans-serif;transform:scaleX(0.9738);transform-origin:0px 0;">No Solution</div>
<div class="t" style="left:1198.30px;top:999.00px;font-size:15.5px;color:#ffffff;font-family:'Liberation Sans', sans-serif;transform:scaleX(0.9118);transform-origin:0px 0;">Ln 39, Col 59</div>
<div class="t" style="left:1303.70px;top:999.00px;font-size:15.5px;color:#ffffff;font-family:'Liberation Sans', sans-serif;transform:scaleX(0.8739);transform-origin:0px 0;">Spaces: 4</div>
<div class="t" style="left:1384.60px;top:999.00px;font-size:15.5px;color:#ffffff;font-family:'Liberation Sans', sans-serif;transform:scaleX(0.9362);transform-origin:0px 0;">UTF-8 with BOM</div>
<div class="t" style="left:1513.90px;top:999.00px;font-size:15.5px;color:#ffffff;font-family:'Liberation Sans', sans-serif;transform:scaleX(0.7805);transform-origin:0px 0;">CRLF</div>
<div class="t" style="left:1568.40px;top:1000.00px;font-size:15.5px;color:#ffffff;font-family:'Liberation Sans', sans-serif;transform:scaleX(0.9167);transform-origin:0px 0;">{</div>
<div class="t" style="left:1577.00px;top:1000.00px;font-size:15.5px;color:#ffffff;font-family:'Liberation Sans', sans-serif;transform:scaleX(0.9167);transform-origin:0px 0;">}</div>
<div class="t" style="left:1591.80px;top:999.00px;font-size:15.5px;color:#ffffff;font-family:'Liberation Sans', sans-serif;transform:scaleX(0.8600);transform-origin:0px 0;">C#</div>
<div style="position:absolute;left:1619px;top:993px;width:127px;height:26px;background:#004578;"></div>
<svg style="left:1631.8px;top:998px" width="17.82" height="15.39" viewBox="0 0 22 19">
<rect x="3.2" y="1" width="7.8" height="7.6" rx="3.3" fill="none" stroke="#ffffff" stroke-width="1.8"/>
<rect x="11.4" y="1" width="7.4" height="7.6" rx="3.3" fill="none" stroke="#ffffff" stroke-width="1.8"/>
<path d="M5 9.2 H17 C20.5 9.2 21.5 11.5 21.5 14 C21.5 17 17 18.8 11 18.8 C5 18.8 0.5 17 0.5 14 C0.5 11.5 1.5 9.2 5 9.2 Z" fill="#ffffff"/>
<rect x="5.6" y="10.6" width="10.8" height="6" rx="1.2" fill="#004578"/>
<rect x="8" y="12" width="1.6" height="4" fill="#ffffff"/><rect x="12.2" y="12" width="1.6" height="4" fill="#ffffff"/>
</svg>
<div class="t" style="left:1653.90px;top:999.00px;font-size:15.5px;color:#ffffff;font-family:'Liberation Sans', sans-serif;transform:scaleX(0.9149);transform-origin:0px 0;">Finish Setup</div>
<svg style="left:1757px;top:997.3px" width="17" height="17.4" viewBox="0 0 17 17.4"><path d="M8.5 0.8L15.8 4.9V12.5L8.5 16.6L1.2 12.5V4.9Z" fill="none" stroke="#fff" stroke-width="1.5"/><text x="8.5" y="11.3" font-size="6.8" font-family="Liberation Sans" font-weight="bold" fill="#fff" text-anchor="middle">C#</text></svg>
<svg style="left:1795px;top:997.5px" width="16" height="16" viewBox="0 0 16 16"><circle cx="8" cy="8" r="7" fill="none" stroke="#fff" stroke-width="1.5"/><path d="M3.2 12.8L12.8 3.2" stroke="#fff" stroke-width="1.5"/></svg>
<div class="t" style="left:1816.20px;top:999.00px;font-size:15.5px;color:#ffffff;font-family:'Liberation Sans', sans-serif;transform:scaleX(0.9333);transform-origin:0px 0;">Prettier</div>
<svg style="left:1886px;top:997.7px" width="14.5" height="16.3" viewBox="0 0 14.5 16.3"><path d="M2.5 12V6.8A4.75 4.75 0 0 1 12 6.8V12L13.8 13.5H0.7Z M5.3 14.5A2 2 0 0 0 9.2 14.5" fill="none" stroke="#fff" stroke-width="1.4" stroke-linejoin="round"/></svg>
<div class="a" style="left:1003px;top:205px;width:800px;height:487px;border-radius:8px;overflow:hidden;box-shadow:0 0 0 1px rgba(0,0,0,0.35),0 8px 24px rgba(0,0,0,0.5);">
<div class="a" style="left:0;top:0;width:800px;height:37px;background:linear-gradient(90deg,#f6eeeb 0%,#f7efed 25%,#f3f1f3 50%,#f2f2f4 100%);"></div>
<svg style="left:11px;top:10px" width="16" height="15" viewBox="0 0 16 15"><rect x="6" y="0.5" width="9.5" height="8.5" fill="#454545"/><rect x="0.5" y="5.5" width="5" height="6.5" fill="#454545"/><rect x="6" y="10.5" width="6" height="3.5" fill="#454545"/></svg>
<svg style="left:646.5px;top:17px" width="13" height="2" viewBox="0 0 13 2"><path d="M0 1H13" stroke="#1a1a1a" stroke-width="1"/></svg>
<svg style="left:705px;top:12px" width="12" height="12" viewBox="0 0 12 12"><rect x="0.6" y="0.6" width="10.8" height="10.8" rx="1.2" fill="none" stroke="#1a1a1a" stroke-width="1.2"/></svg>
<svg style="left:763.5px;top:12px" width="13" height="12" viewBox="0 0 13 12"><path d="M0.5 0.5L12.5 11.5M12.5 0.5L0.5 11.5" stroke="#1a1a1a" stroke-width="1.2"/></svg>
<div class="a" style="left:0;top:37px;width:800px;height:450px;overflow:hidden"><svg style="left:0;top:0;overflow:hidden" width="800" height="450" viewBox="0 0 800 450"><defs><filter id="bl8" x="-50%" y="-50%" width="200%" height="200%"><feGaussianBlur stdDeviation="8"/></filter><filter id="bl9" x="-50%" y="-50%" width="200%" height="200%"><feGaussianBlur stdDeviation="9"/></filter><filter id="bl10" x="-50%" y="-50%" width="200%" height="200%"><feGaussianBlur stdDeviation="10"/></filter><filter id="bl11" x="-50%" y="-50%" width="200%" height="200%"><feGaussianBlur stdDeviation="11"/></filter><filter id="bl12" x="-50%" y="-50%" width="200%" height="200%"><feGaussianBlur stdDeviation="12"/></filter><filter id="bl13" x="-50%" y="-50%" width="200%" height="200%"><feGaussianBlur stdDeviation="13"/></filter><filter id="bl14" x="-50%" y="-50%" width="200%" height="200%"><feGaussianBlur stdDeviation="14"/></filter><filter id="bl15" x="-50%" y="-50%" width="200%" height="200%"><feGaussianBlur stdDeviation="15"/></filter><filter id="bl16" x="-50%" y="-50%" width="200%" height="200%"><feGaussianBlur stdDeviation="16"/></filter><filter id="bl17" x="-50%" y="-50%" width="200%" height="200%"><feGaussianBlur stdDeviation="17"/></filter><filter id="bl18" x="-50%" y="-50%" width="200%" height="200%"><feGaussianBlur stdDeviation="18"/></filter><filter id="bl19" x="-50%" y="-50%" width="200%" height="200%"><feGaussianBlur stdDeviation="19"/></filter><filter id="bl20" x="-50%" y="-50%" width="200%" height="200%"><feGaussianBlur stdDeviation="20"/></filter><filter id="bl21" x="-50%" y="-50%" width="200%" height="200%"><feGaussianBlur stdDeviation="21"/></filter><filter id="bl22" x="-50%" y="-50%" width="200%" height="200%"><feGaussianBlur stdDeviation="22"/></filter><filter id="bl23" x="-50%" y="-50%" width="200%" height="200%"><feGaussianBlur stdDeviation="23"/></filter><filter id="bl24" x="-50%" y="-50%" width="200%" height="200%"><feGaussianBlur stdDeviation="24"/></filter><filter id="bl25" x="-50%" y="-50%" width="200%" height="200%"><feGaussianBlur stdDeviation="25"/></filter><filter id="bl26" x="-50%" y="-50%" width="200%" height="200%"><feGaussianBlur stdDeviation="26"/></filter><filter id="bl27" x="-50%" y="-50%" width="200%" height="200%"><feGaussianBlur stdDeviation="27"/></filter><filter id="bl28" x="-50%" y="-50%" width="200%" height="200%"><feGaussianBlur stdDeviation="28"/></filter><filter id="bl29" x="-50%" y="-50%" width="200%" height="200%"><feGaussianBlur stdDeviation="29"/></filter><filter id="bl30" x="-50%" y="-50%" width="200%" height="200%"><feGaussianBlur stdDeviation="30"/></filter><filter id="bl31" x="-50%" y="-50%" width="200%" height="200%"><feGaussianBlur stdDeviation="31"/></filter><filter id="bl32" x="-50%" y="-50%" width="200%" height="200%"><feGaussianBlur stdDeviation="32"/></filter><filter id="bl33" x="-50%" y="-50%" width="200%" height="200%"><feGaussianBlur stdDeviation="33"/></filter><filter id="bl34" x="-50%" y="-50%" width="200%" height="200%"><feGaussianBlur stdDeviation="34"/></filter><filter id="bl35" x="-50%" y="-50%" width="200%" height="200%"><feGaussianBlur stdDeviation="35"/></filter><filter id="bl36" x="-50%" y="-50%" width="200%" height="200%"><feGaussianBlur stdDeviation="36"/></filter><filter id="bl37" x="-50%" y="-50%" width="200%" height="200%"><feGaussianBlur stdDeviation="37"/></filter><filter id="bl38" x="-50%" y="-50%" width="200%" height="200%"><feGaussianBlur stdDeviation="38"/></filter><filter id="bl39" x="-50%" y="-50%" width="200%" height="200%"><feGaussianBlur stdDeviation="39"/></filter><filter id="bl40" x="-50%" y="-50%" width="200%" height="200%"><feGaussianBlur stdDeviation="40"/></filter><filter id="bl41" x="-50%" y="-50%" width="200%" height="200%"><feGaussianBlur stdDeviation="41"/></filter><filter id="bl42" x="-50%" y="-50%" width="200%" height="200%"><feGaussianBlur stdDeviation="42"/></filter><filter id="bl43" x="-50%" y="-50%" width="200%" height="200%"><feGaussianBlur stdDeviation="43"/></filter><filter id="bl44" x="-50%" y="-50%" width="200%" height="200%"><feGaussianBlur stdDeviation="44"/></filter><filter id="bl45" x="-50%" y="-50%" width="200%" height="200%"><feGaussianBlur stdDeviation="45"/></filter><filter id="bl46" x="-50%" y="-50%" width="200%" height="200%"><feGaussianBlur stdDeviation="46"/></filter><filter id="bl47" x="-50%" y="-50%" width="200%" height="200%"><feGaussianBlur stdDeviation="47"/></filter></defs><linearGradient id="gbase" x1="0" y1="0" x2="0" y2="1"><stop offset="0" stop-color="#3d4790"/><stop offset="0.45" stop-color="#43509a"/><stop offset="1" stop-color="#485a9c"/></linearGradient><rect width="800" height="450" fill="url(#gbase)"/><ellipse cx="420" cy="6" rx="260" ry="22" transform="rotate(0 420 6)" fill="#363f86" opacity="0.6" filter="url(#bl12)"/><ellipse cx="90" cy="20" rx="90" ry="25" transform="rotate(0 90 20)" fill="#5a68b4" opacity="0.5" filter="url(#bl18)"/><ellipse cx="20" cy="200" rx="45" ry="160" transform="rotate(0 20 200)" fill="#4e60a8" opacity="0.7" filter="url(#bl25)"/><ellipse cx="230" cy="150" rx="150" ry="50" transform="rotate(-15 230 150)" fill="#3e5496" opacity="0.6" filter="url(#bl32)"/><ellipse cx="250" cy="240" rx="150" ry="55" transform="rotate(-20 250 240)" fill="#5576cc" opacity="0.5" filter="url(#bl32)"/><ellipse cx="430" cy="175" rx="290" ry="80" transform="rotate(-22 430 175)" fill="#6a82dc" opacity="0.5" filter="url(#bl40)"/><ellipse cx="420" cy="230" rx="130" ry="60" transform="rotate(-25 420 230)" fill="#5b8af0" opacity="0.6" filter="url(#bl30)"/><ellipse cx="706" cy="58" rx="110" ry="50" transform="rotate(0 706 58)" fill="#6662cc" opacity="0.5" filter="url(#bl32)"/><ellipse cx="545" cy="100" rx="170" ry="65" transform="rotate(-12 545 100)" fill="#7a92f2" opacity="0.55" filter="url(#bl30)"/><ellipse cx="560" cy="96" rx="90" ry="30" transform="rotate(-10 560 96)" fill="#8ee4fc" opacity="0.55" filter="url(#bl16)"/><ellipse cx="562" cy="94" rx="55" ry="18" transform="rotate(-15 562 94)" fill="#94f0ff" opacity="0.6" filter="url(#bl10)"/><ellipse cx="290" cy="300" rx="190" ry="22" transform="rotate(-8 290 300)" fill="#7090c8" opacity="0.45" filter="url(#bl14)"/><ellipse cx="22" cy="420" rx="60" ry="80" transform="rotate(0 22 420)" fill="#6a8ac8" opacity="0.55" filter="url(#bl32)"/><ellipse cx="730" cy="308" rx="170" ry="50" transform="rotate(0 730 308)" fill="#2c4876" opacity="0.65" filter="url(#bl28)"/><ellipse cx="785" cy="380" rx="40" ry="70" transform="rotate(0 785 380)" fill="#34508a" opacity="0.5" filter="url(#bl25)"/><ellipse cx="400" cy="440" rx="300" ry="30" transform="rotate(0 400 440)" fill="#5068a8" opacity="0.4" filter="url(#bl25)"/></svg></div>
<svg style="left:0;top:0" width="800" height="487" viewBox="0 0 800 487"><defs><linearGradient id="pg" x1="0" y1="0" x2="1" y2="1"><stop offset="0" stop-color="#e3d8fb"/><stop offset="1" stop-color="#c1aaf0"/></linearGradient><linearGradient id="tb" x1="0" y1="0" x2="1" y2="0.3"><stop offset="0" stop-color="#4b8a6f"/><stop offset="0.5" stop-color="#528c96"/><stop offset="1" stop-color="#5a98c2"/></linearGradient><clipPath id="fr"><rect x="36" y="66" width="735" height="244"/></clipPath></defs><g clip-path="url(#fr)"><path d="M30 60 H191 C196 130 120 196 36 198 L30 198 Z" fill="#fbfaff"/><path d="M38 74.0 L186 74.8" stroke="#5ba6dc" stroke-width="2.6" stroke-linecap="round"/><path d="M38 90.5 L185 91.3" stroke="#5ba6dc" stroke-width="2.6" stroke-linecap="round"/><path d="M38 107.0 L175 107.8" stroke="#5ba6dc" stroke-width="2.6" stroke-linecap="round"/><path d="M38 123.6 L165 124.4" stroke="#5ba6dc" stroke-width="2.6" stroke-linecap="round"/><path d="M38 142.4 L147 143.2" stroke="#5ba6dc" stroke-width="2.6" stroke-linecap="round"/><path d="M38 157.0 L133 157.8" stroke="#5ba6dc" stroke-width="2.6" stroke-linecap="round"/><path d="M38 170.6 L110 171.4" stroke="#5ba6dc" stroke-width="2.6" stroke-linecap="round"/><path d="M38 182.8 L94 183.6" stroke="#5ba6dc" stroke-width="2.6" stroke-linecap="round"/><path d="M55 68 h12" stroke="#8fb8cc" stroke-width="1.8" stroke-linecap="round"/><path d="M96 71 h14" stroke="#8fb8cc" stroke-width="1.8" stroke-linecap="round"/><path d="M172 67 h14" stroke="#8fb8cc" stroke-width="1.8" stroke-linecap="round"/><path d="M42 81 h14" stroke="#8fb8cc" stroke-width="1.8" stroke-linecap="round"/><path d="M72 82 h14" stroke="#8fb8cc" stroke-width="1.8" stroke-linecap="round"/><path d="M94 80 h14" stroke="#8fb8cc" stroke-width="1.8" stroke-linecap="round"/><path d="M125 80 h14" stroke="#8fb8cc" stroke-width="1.8" stroke-linecap="round"/><path d="M165 81 h14" stroke="#8fb8cc" stroke-width="1.8" stroke-linecap="round"/><path d="M44 97 h14" stroke="#8fb8cc" stroke-width="1.8" stroke-linecap="round"/><path d="M83 97 h14" stroke="#8fb8cc" stroke-width="1.8" stroke-linecap="round"/><path d="M109 93 h14" stroke="#8fb8cc" stroke-width="1.8" stroke-linecap="round"/><path d="M141 99 h14" stroke="#8fb8cc" stroke-width="1.8" stroke-linecap="round"/><path d="M45 115 h14" stroke="#8fb8cc" stroke-width="1.8" stroke-linecap="round"/><path d="M65 114 h14" stroke="#8fb8cc" stroke-width="1.8" stroke-linecap="round"/><path d="M107 116 h14" stroke="#8fb8cc" stroke-width="1.8" stroke-linecap="round"/><path d="M147 114 h14" stroke="#8fb8cc" stroke-width="1.8" stroke-linecap="round"/><path d="M41 133 h14" stroke="#8fb8cc" stroke-width="1.8" stroke-linecap="round"/><path d="M57 135 h14" stroke="#8fb8cc" stroke-width="1.8" stroke-linecap="round"/><path d="M78 130 h14" stroke="#8fb8cc" stroke-width="1.8" stroke-linecap="round"/><path d="M91 136 h14" stroke="#8fb8cc" stroke-width="1.8" stroke-linecap="round"/><path d="M133 131 h14" stroke="#8fb8cc" stroke-width="1.8" stroke-linecap="round"/><path d="M62 152 h14" stroke="#8fb8cc" stroke-width="1.8" stroke-linecap="round"/><path d="M87 153 h14" stroke="#8fb8cc" stroke-width="1.8" stroke-linecap="round"/><path d="M57 167 h14" stroke="#8fb8cc" stroke-width="1.8" stroke-linecap="round"/><path d="M52 178 h14" stroke="#8fb8cc" stroke-width="1.8" stroke-linecap="round"/><path d="M81 176 h14" stroke="#8fb8cc" stroke-width="1.8" stroke-linecap="round"/><path d="M53 192 h14" stroke="#8fb8cc" stroke-width="1.8" stroke-linecap="round"/><path d="M502 312 C512 280 530 255 570 234 C620 210 690 192 780 182 L780 320 L502 320 Z" fill="url(#pg)"/><path d="M529 271 C537 285 546 298 554 310" stroke="#9a5fc9" stroke-width="5.8" fill="none" stroke-linecap="round"/><path d="M560 246 C585 275 615 298 650 312" stroke="#9a5fc9" stroke-width="5.8" fill="none" stroke-linecap="round"/><path d="M601 224 C640 260 700 292 770 311" stroke="#9a5fc9" stroke-width="5.8" fill="none" stroke-linecap="round"/><path d="M640 210 C680 240 720 262 770 277" stroke="#9a5fc9" stroke-width="5.8" fill="none" stroke-linecap="round"/><path d="M695 199 C715 220 740 235 770 245" stroke="#9a5fc9" stroke-width="5.8" fill="none" stroke-linecap="round"/><path d="M502 312 C512 280 530 255 570 234 C620 210 690 192 775 184" stroke="#ffffff" stroke-width="7" fill="none" stroke-linecap="round"/></g><rect x="33" y="63" width="741" height="250" fill="none" stroke="#fcf6c6" stroke-width="5.5"/><rect x="40" y="355" width="724" height="107" fill="url(#tb)"/><rect x="42.5" y="357.5" width="719" height="102" fill="none" stroke="#faf2b6" stroke-width="5"/></svg>
<div class="t" style="left:70.50px;top:377.00px;font-size:15px;color:#ffffff;font-family:'Liberation Sans', sans-serif;letter-spacing:0.4px;transform:scaleX(1.4396);transform-origin:0px 0;-webkit-text-stroke:0.5px #ffffff;">You are the navigator of the Celestial Cosmos Galaxy Exploration</div>
<div class="t" style="left:97.10px;top:397.00px;font-size:15px;color:#ffffff;font-family:'Liberation Sans', sans-serif;letter-spacing:0.4px;transform:scaleX(1.4356);transform-origin:0px 0;-webkit-text-stroke:0.5px #ffffff;">Team who is on a mission to discover the Soltrianius Galaxy.</div>
</div>
</body></html>
